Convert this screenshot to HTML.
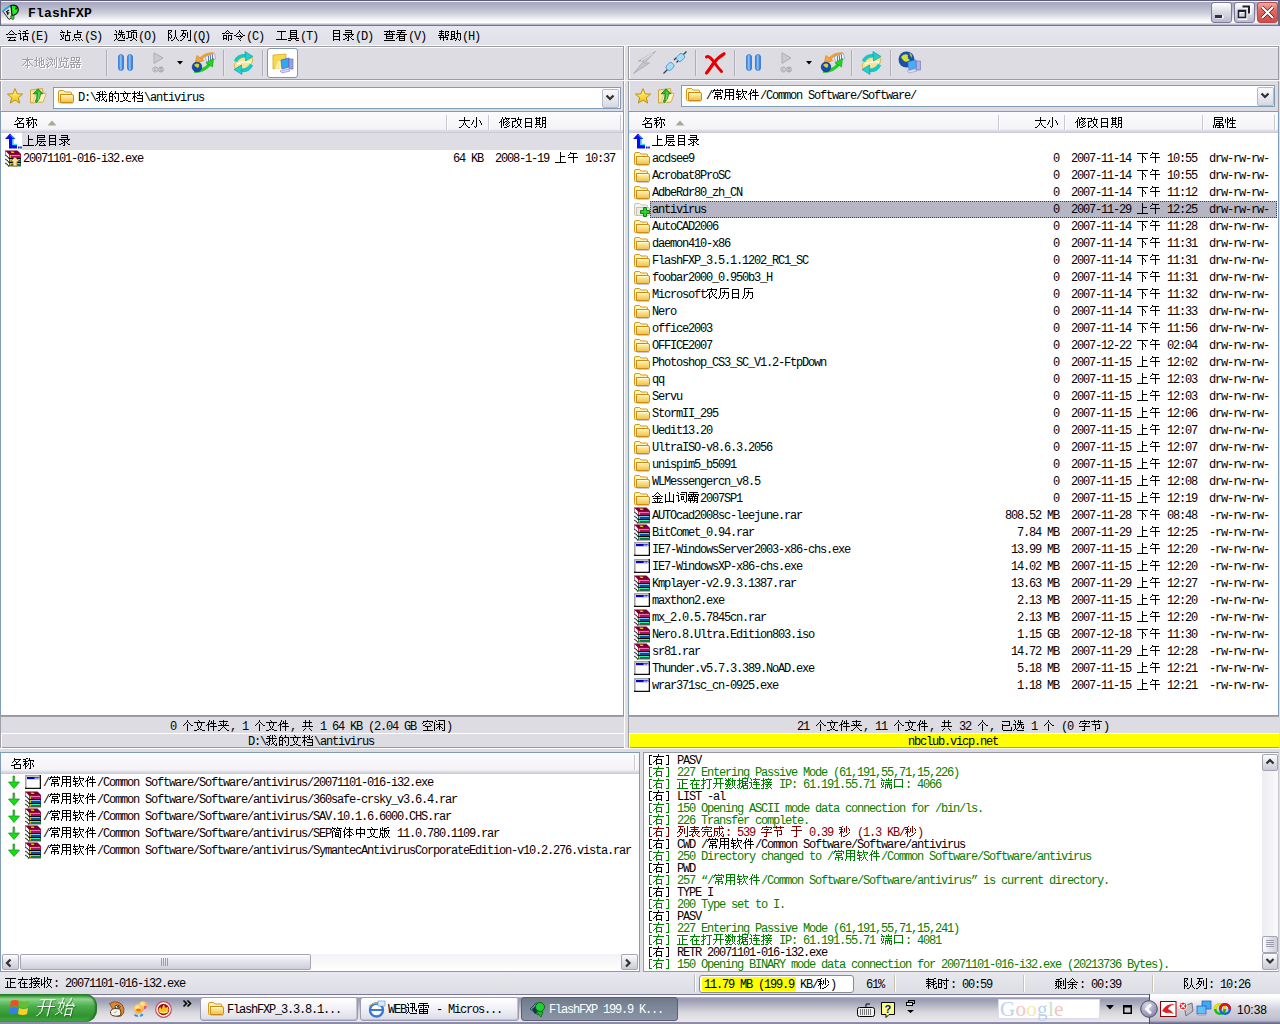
<!DOCTYPE html><html><head><meta charset="utf-8"><title>FlashFXP</title><style>
*{margin:0;padding:0;box-sizing:border-box}
html,body{width:1280px;height:1024px;overflow:hidden}
body{position:relative;background:#e0dfe3;font-family:"Liberation Mono",monospace;font-size:12px;color:#000}
.a{position:absolute}
.t{white-space:pre;font-family:"Liberation Mono",monospace;font-size:12px;line-height:12px;height:12px}
.t b{display:inline-block;width:6px;font-weight:normal;position:relative;vertical-align:top;height:12px}
.t b svg{position:absolute;left:0;top:0;fill:currentColor}
i.c{font-style:normal;display:inline-block;width:12px;height:12px;vertical-align:top;position:relative}
i.c svg{position:absolute;left:0;top:-1px;fill:currentColor}
svg{position:absolute;overflow:visible}
</style></head><body><svg width="0" height="0" style="position:absolute"><defs>
<linearGradient id="gfold" x1="0" y1="0" x2="0" y2="1"><stop offset="0" stop-color="#fff6c0"/><stop offset="1" stop-color="#f0c040"/></linearGradient>
<linearGradient id="gbtn" x1="0" y1="0" x2="0" y2="1"><stop offset="0" stop-color="#ffffff"/><stop offset="1" stop-color="#c9c9d9"/></linearGradient>
<linearGradient id="gstar" x1="0" y1="0" x2="0" y2="1"><stop offset="0" stop-color="#fff8a0"/><stop offset="1" stop-color="#f0c000"/></linearGradient>
<linearGradient id="gpause" x1="0" y1="0" x2="1" y2="0"><stop offset="0" stop-color="#3d7fe0"/><stop offset=".5" stop-color="#9cd0ff"/><stop offset="1" stop-color="#2f6fd8"/></linearGradient>
</defs></svg><svg width="0" height="0" style="position:absolute"><defs><symbol id="k4e0a" viewBox="0 0 12 12"><path d="M5 0h1v1h-1zM5 1h1v1h-1zM5 2h1v1h-1zM5 3h1v1h-1zM5 4h5v1h-5zM5 5h1v1h-1zM5 6h1v1h-1zM5 7h1v1h-1zM5 8h1v1h-1zM5 9h1v1h-1zM0 10h11v1h-11z"/></symbol><symbol id="k4e0b" viewBox="0 0 12 12"><path d="M0 1h11v1h-11zM5 2h1v1h-1zM5 3h1v1h-1zM5 4h2v1h-2zM5 5h1v1h-1zM7 5h1v1h-1zM5 6h1v1h-1zM8 6h1v1h-1zM5 7h1v1h-1zM8 7h1v1h-1zM5 8h1v1h-1zM5 9h1v1h-1zM5 10h1v1h-1z"/></symbol><symbol id="k4e2a" viewBox="0 0 12 12"><path d="M5 0h1v1h-1zM5 1h1v1h-1zM4 2h1v1h-1zM6 2h1v1h-1zM3 3h1v1h-1zM7 3h1v1h-1zM2 4h1v1h-1zM5 4h1v1h-1zM8 4h1v1h-1zM1 5h1v1h-1zM5 5h1v1h-1zM9 5h2v1h-2zM5 6h1v1h-1zM5 7h1v1h-1zM5 8h1v1h-1zM5 9h1v1h-1zM5 10h1v1h-1z"/></symbol><symbol id="k4e2d" viewBox="0 0 12 12"><path d="M5 0h1v1h-1zM5 1h1v1h-1zM1 2h9v1h-9zM1 3h1v1h-1zM5 3h1v1h-1zM9 3h1v1h-1zM1 4h1v1h-1zM5 4h1v1h-1zM9 4h1v1h-1zM1 5h1v1h-1zM5 5h1v1h-1zM9 5h1v1h-1zM1 6h9v1h-9zM1 7h1v1h-1zM5 7h1v1h-1zM9 7h1v1h-1zM5 8h1v1h-1zM5 9h1v1h-1zM5 10h1v1h-1z"/></symbol><symbol id="k4e8e" viewBox="0 0 12 12"><path d="M1 0h9v1h-9zM5 1h1v1h-1zM5 2h1v1h-1zM5 3h1v1h-1zM0 4h11v1h-11zM5 5h1v1h-1zM5 6h1v1h-1zM5 7h1v1h-1zM5 8h1v1h-1zM5 9h1v1h-1zM3 10h3v1h-3z"/></symbol><symbol id="k4ee4" viewBox="0 0 12 12"><path d="M5 0h1v1h-1zM5 1h1v1h-1zM4 2h1v1h-1zM6 2h1v1h-1zM3 3h1v1h-1zM7 3h1v1h-1zM2 4h1v1h-1zM5 4h1v1h-1zM8 4h1v1h-1zM0 5h2v1h-2zM6 5h1v1h-1zM9 5h2v1h-2zM2 6h7v1h-7zM7 7h1v1h-1zM4 8h1v1h-1zM6 8h1v1h-1zM5 9h1v1h-1zM6 10h1v1h-1z"/></symbol><symbol id="k4ef6" viewBox="0 0 12 12"><path d="M3 0h1v1h-1zM7 0h1v1h-1zM3 1h1v1h-1zM5 1h1v1h-1zM7 1h1v1h-1zM2 2h1v1h-1zM5 2h1v1h-1zM7 2h1v1h-1zM2 3h1v1h-1zM4 3h6v1h-6zM1 4h3v1h-3zM7 4h1v1h-1zM0 5h1v1h-1zM2 5h1v1h-1zM7 5h1v1h-1zM2 6h1v1h-1zM4 6h7v1h-7zM2 7h1v1h-1zM7 7h1v1h-1zM2 8h1v1h-1zM7 8h1v1h-1zM2 9h1v1h-1zM7 9h1v1h-1zM2 10h1v1h-1zM7 10h1v1h-1z"/></symbol><symbol id="k4f1a" viewBox="0 0 12 12"><path d="M5 0h1v1h-1zM4 1h1v1h-1zM6 1h1v1h-1zM3 2h1v1h-1zM7 2h1v1h-1zM2 3h1v1h-1zM8 3h1v1h-1zM0 4h2v1h-2zM3 4h5v1h-5zM9 4h2v1h-2zM1 7h9v1h-9zM4 8h1v1h-1zM3 9h1v1h-1zM8 9h1v1h-1zM2 10h8v1h-8z"/></symbol><symbol id="k4f53" viewBox="0 0 12 12"><path d="M2 0h1v1h-1zM6 0h1v1h-1zM2 1h1v1h-1zM6 1h1v1h-1zM1 2h1v1h-1zM3 2h7v1h-7zM1 3h1v1h-1zM6 3h1v1h-1zM0 4h2v1h-2zM5 4h3v1h-3zM1 5h1v1h-1zM4 5h1v1h-1zM6 5h1v1h-1zM8 5h1v1h-1zM1 6h1v1h-1zM3 6h1v1h-1zM6 6h1v1h-1zM9 6h1v1h-1zM1 7h2v1h-2zM6 7h1v1h-1zM10 7h1v1h-1zM1 8h1v1h-1zM4 8h5v1h-5zM1 9h1v1h-1zM6 9h1v1h-1zM1 10h1v1h-1zM6 10h1v1h-1z"/></symbol><symbol id="k4f59" viewBox="0 0 12 12"><path d="M5 0h1v1h-1zM4 1h1v1h-1zM6 1h1v1h-1zM3 2h1v1h-1zM7 2h1v1h-1zM2 3h1v1h-1zM8 3h1v1h-1zM0 4h2v1h-2zM3 4h5v1h-5zM9 4h2v1h-2zM5 5h1v1h-1zM1 6h9v1h-9zM5 7h1v1h-1zM3 8h1v1h-1zM5 8h1v1h-1zM7 8h1v1h-1zM2 9h1v1h-1zM5 9h1v1h-1zM8 9h1v1h-1zM1 10h1v1h-1zM4 10h2v1h-2zM9 10h1v1h-1z"/></symbol><symbol id="k4fee" viewBox="0 0 12 12"><path d="M3 0h1v1h-1zM6 0h1v1h-1zM3 1h1v1h-1zM6 1h5v1h-5zM2 2h1v1h-1zM4 2h2v1h-2zM7 2h1v1h-1zM9 2h1v1h-1zM2 3h1v1h-1zM4 3h1v1h-1zM8 3h1v1h-1zM1 4h2v1h-2zM4 4h1v1h-1zM6 4h2v1h-2zM9 4h1v1h-1zM0 5h1v1h-1zM2 5h1v1h-1zM4 5h2v1h-2zM8 5h1v1h-1zM10 5h1v1h-1zM2 6h1v1h-1zM4 6h1v1h-1zM7 6h1v1h-1zM9 6h1v1h-1zM2 7h1v1h-1zM4 7h1v1h-1zM6 7h1v1h-1zM8 7h1v1h-1zM2 8h1v1h-1zM4 8h1v1h-1zM7 8h1v1h-1zM10 8h1v1h-1zM2 9h1v1h-1zM8 9h2v1h-2zM2 10h1v1h-1zM5 10h3v1h-3z"/></symbol><symbol id="k5171" viewBox="0 0 12 12"><path d="M3 0h1v1h-1zM7 0h1v1h-1zM3 1h1v1h-1zM7 1h1v1h-1zM1 2h9v1h-9zM3 3h1v1h-1zM7 3h1v1h-1zM3 4h1v1h-1zM7 4h1v1h-1zM3 5h1v1h-1zM7 5h1v1h-1zM0 6h11v1h-11zM3 8h1v1h-1zM7 8h1v1h-1zM2 9h1v1h-1zM8 9h1v1h-1zM1 10h1v1h-1zM9 10h1v1h-1z"/></symbol><symbol id="k5177" viewBox="0 0 12 12"><path d="M2 0h7v1h-7zM2 1h1v1h-1zM8 1h1v1h-1zM2 2h7v1h-7zM2 3h1v1h-1zM8 3h1v1h-1zM2 4h7v1h-7zM2 5h1v1h-1zM8 5h1v1h-1zM2 6h7v1h-7zM2 7h1v1h-1zM8 7h1v1h-1zM0 8h11v1h-11zM3 9h1v1h-1zM7 9h1v1h-1zM0 10h3v1h-3zM8 10h3v1h-3z"/></symbol><symbol id="k519c" viewBox="0 0 12 12"><path d="M5 0h1v1h-1zM1 1h10v1h-10zM1 2h1v1h-1zM5 2h1v1h-1zM10 2h1v1h-1zM0 3h1v1h-1zM4 3h2v1h-2zM9 3h1v1h-1zM3 4h1v1h-1zM6 4h1v1h-1zM3 5h1v1h-1zM6 5h1v1h-1zM9 5h1v1h-1zM2 6h2v1h-2zM6 6h1v1h-1zM8 6h1v1h-1zM1 7h1v1h-1zM3 7h1v1h-1zM7 7h1v1h-1zM0 8h1v1h-1zM3 8h1v1h-1zM5 8h1v1h-1zM8 8h1v1h-1zM3 9h2v1h-2zM9 9h2v1h-2zM3 10h1v1h-1zM10 10h1v1h-1z"/></symbol><symbol id="k5217" viewBox="0 0 12 12"><path d="M1 0h6v1h-6zM10 0h1v1h-1zM3 1h1v1h-1zM10 1h1v1h-1zM3 2h1v1h-1zM7 2h1v1h-1zM10 2h1v1h-1zM2 3h4v1h-4zM7 3h1v1h-1zM10 3h1v1h-1zM2 4h1v1h-1zM5 4h1v1h-1zM7 4h1v1h-1zM10 4h1v1h-1zM1 5h2v1h-2zM5 5h1v1h-1zM7 5h1v1h-1zM10 5h1v1h-1zM0 6h1v1h-1zM3 6h2v1h-2zM7 6h1v1h-1zM10 6h1v1h-1zM4 7h1v1h-1zM7 7h1v1h-1zM10 7h1v1h-1zM3 8h1v1h-1zM10 8h1v1h-1zM2 9h1v1h-1zM10 9h1v1h-1zM0 10h2v1h-2zM8 10h3v1h-3z"/></symbol><symbol id="k5269" viewBox="0 0 12 12"><path d="M5 0h2v1h-2zM10 0h1v1h-1zM1 1h4v1h-4zM10 1h1v1h-1zM3 2h1v1h-1zM8 2h1v1h-1zM10 2h1v1h-1zM0 3h7v1h-7zM8 3h1v1h-1zM10 3h1v1h-1zM1 4h1v1h-1zM3 4h1v1h-1zM5 4h1v1h-1zM8 4h1v1h-1zM10 4h1v1h-1zM0 5h2v1h-2zM3 5h1v1h-1zM5 5h2v1h-2zM8 5h1v1h-1zM10 5h1v1h-1zM1 6h1v1h-1zM3 6h1v1h-1zM5 6h1v1h-1zM8 6h1v1h-1zM10 6h1v1h-1zM0 7h2v1h-2zM3 7h1v1h-1zM5 7h2v1h-2zM8 7h1v1h-1zM10 7h1v1h-1zM2 8h3v1h-3zM10 8h1v1h-1zM1 9h1v1h-1zM3 9h1v1h-1zM5 9h1v1h-1zM10 9h1v1h-1zM0 10h1v1h-1zM3 10h1v1h-1zM6 10h1v1h-1zM8 10h3v1h-3z"/></symbol><symbol id="k52a9" viewBox="0 0 12 12"><path d="M7 0h1v1h-1zM1 1h4v1h-4zM7 1h1v1h-1zM1 2h1v1h-1zM4 2h1v1h-1zM7 2h1v1h-1zM1 3h1v1h-1zM4 3h1v1h-1zM6 3h5v1h-5zM1 4h4v1h-4zM7 4h1v1h-1zM10 4h1v1h-1zM1 5h1v1h-1zM4 5h1v1h-1zM7 5h1v1h-1zM10 5h1v1h-1zM1 6h4v1h-4zM7 6h1v1h-1zM10 6h1v1h-1zM1 7h1v1h-1zM4 7h1v1h-1zM7 7h1v1h-1zM10 7h1v1h-1zM1 8h1v1h-1zM3 8h4v1h-4zM10 8h1v1h-1zM0 9h3v1h-3zM6 9h1v1h-1zM8 9h1v1h-1zM10 9h1v1h-1zM5 10h1v1h-1zM9 10h1v1h-1z"/></symbol><symbol id="k5348" viewBox="0 0 12 12"><path d="M3 0h1v1h-1zM3 1h7v1h-7zM2 2h1v1h-1zM6 2h1v1h-1zM1 3h1v1h-1zM6 3h1v1h-1zM6 4h1v1h-1zM1 5h10v1h-10zM6 6h1v1h-1zM6 7h1v1h-1zM6 8h1v1h-1zM6 9h1v1h-1zM6 10h1v1h-1z"/></symbol><symbol id="k5386" viewBox="0 0 12 12"><path d="M2 0h9v1h-9zM2 1h1v1h-1zM2 2h1v1h-1zM6 2h1v1h-1zM2 3h1v1h-1zM6 3h1v1h-1zM2 4h1v1h-1zM4 4h7v1h-7zM2 5h1v1h-1zM6 5h1v1h-1zM10 5h1v1h-1zM2 6h1v1h-1zM6 6h1v1h-1zM10 6h1v1h-1zM2 7h1v1h-1zM5 7h1v1h-1zM10 7h1v1h-1zM1 8h1v1h-1zM5 8h1v1h-1zM10 8h1v1h-1zM1 9h1v1h-1zM4 9h1v1h-1zM10 9h1v1h-1zM0 10h1v1h-1zM3 10h1v1h-1zM8 10h2v1h-2z"/></symbol><symbol id="k53e3" viewBox="0 0 12 12"><path d="M1 1h9v1h-9zM1 2h1v1h-1zM9 2h1v1h-1zM1 3h1v1h-1zM9 3h1v1h-1zM1 4h1v1h-1zM9 4h1v1h-1zM1 5h1v1h-1zM9 5h1v1h-1zM1 6h1v1h-1zM9 6h1v1h-1zM1 7h1v1h-1zM9 7h1v1h-1zM1 8h9v1h-9zM1 9h1v1h-1zM9 9h1v1h-1z"/></symbol><symbol id="k53f3" viewBox="0 0 12 12"><path d="M5 0h1v1h-1zM5 1h1v1h-1zM0 2h11v1h-11zM4 3h1v1h-1zM3 4h1v1h-1zM3 5h6v1h-6zM2 6h2v1h-2zM8 6h1v1h-1zM1 7h1v1h-1zM3 7h1v1h-1zM8 7h1v1h-1zM0 8h1v1h-1zM3 8h1v1h-1zM8 8h1v1h-1zM3 9h6v1h-6zM3 10h1v1h-1zM8 10h1v1h-1z"/></symbol><symbol id="k540d" viewBox="0 0 12 12"><path d="M3 0h1v1h-1zM3 1h7v1h-7zM3 2h1v1h-1zM8 2h1v1h-1zM2 3h1v1h-1zM4 3h1v1h-1zM7 3h1v1h-1zM1 4h1v1h-1zM5 4h2v1h-2zM5 5h1v1h-1zM3 6h7v1h-7zM0 7h4v1h-4zM9 7h1v1h-1zM3 8h1v1h-1zM9 8h1v1h-1zM3 9h1v1h-1zM9 9h1v1h-1zM3 10h7v1h-7z"/></symbol><symbol id="k547d" viewBox="0 0 12 12"><path d="M5 0h1v1h-1zM4 1h1v1h-1zM6 1h1v1h-1zM3 2h1v1h-1zM7 2h1v1h-1zM0 3h3v1h-3zM4 3h3v1h-3zM8 3h3v1h-3zM1 5h4v1h-4zM6 5h4v1h-4zM1 6h1v1h-1zM4 6h1v1h-1zM6 6h1v1h-1zM9 6h1v1h-1zM1 7h1v1h-1zM4 7h1v1h-1zM6 7h1v1h-1zM9 7h1v1h-1zM1 8h4v1h-4zM6 8h1v1h-1zM9 8h1v1h-1zM1 9h1v1h-1zM4 9h1v1h-1zM6 9h1v1h-1zM8 9h2v1h-2zM6 10h1v1h-1z"/></symbol><symbol id="k5668" viewBox="0 0 12 12"><path d="M1 0h4v1h-4zM6 0h4v1h-4zM1 1h1v1h-1zM4 1h1v1h-1zM6 1h1v1h-1zM9 1h1v1h-1zM1 2h1v1h-1zM4 2h1v1h-1zM6 2h1v1h-1zM9 2h1v1h-1zM1 3h4v1h-4zM6 3h4v1h-4zM5 4h1v1h-1zM8 4h1v1h-1zM0 5h11v1h-11zM3 6h1v1h-1zM7 6h1v1h-1zM0 7h5v1h-5zM6 7h5v1h-5zM1 8h1v1h-1zM4 8h1v1h-1zM6 8h1v1h-1zM9 8h1v1h-1zM1 9h1v1h-1zM4 9h1v1h-1zM6 9h1v1h-1zM9 9h1v1h-1zM1 10h4v1h-4zM6 10h4v1h-4z"/></symbol><symbol id="k5728" viewBox="0 0 12 12"><path d="M5 0h1v1h-1zM5 1h1v1h-1zM1 2h10v1h-10zM4 3h1v1h-1zM3 4h1v1h-1zM7 4h1v1h-1zM2 5h2v1h-2zM7 5h1v1h-1zM1 6h1v1h-1zM3 6h1v1h-1zM5 6h5v1h-5zM3 7h1v1h-1zM7 7h1v1h-1zM3 8h1v1h-1zM7 8h1v1h-1zM3 9h1v1h-1zM7 9h1v1h-1zM3 10h8v1h-8z"/></symbol><symbol id="k5730" viewBox="0 0 12 12"><path d="M2 0h1v1h-1zM7 0h1v1h-1zM2 1h1v1h-1zM5 1h1v1h-1zM7 1h1v1h-1zM2 2h1v1h-1zM5 2h1v1h-1zM7 2h1v1h-1zM9 2h1v1h-1zM0 3h4v1h-4zM5 3h1v1h-1zM7 3h3v1h-3zM2 4h1v1h-1zM5 4h3v1h-3zM9 4h1v1h-1zM2 5h1v1h-1zM4 5h2v1h-2zM7 5h1v1h-1zM9 5h1v1h-1zM2 6h1v1h-1zM5 6h1v1h-1zM7 6h1v1h-1zM9 6h1v1h-1zM2 7h1v1h-1zM5 7h1v1h-1zM7 7h3v1h-3zM2 8h2v1h-2zM5 8h1v1h-1zM7 8h1v1h-1zM10 8h1v1h-1zM0 9h2v1h-2zM5 9h1v1h-1zM10 9h1v1h-1zM6 10h5v1h-5z"/></symbol><symbol id="k5927" viewBox="0 0 12 12"><path d="M5 0h1v1h-1zM5 1h1v1h-1zM5 2h1v1h-1zM0 3h11v1h-11zM5 4h1v1h-1zM5 5h1v1h-1zM4 6h1v1h-1zM6 6h1v1h-1zM4 7h1v1h-1zM6 7h1v1h-1zM3 8h1v1h-1zM7 8h1v1h-1zM2 9h1v1h-1zM8 9h1v1h-1zM0 10h2v1h-2zM9 10h2v1h-2z"/></symbol><symbol id="k5939" viewBox="0 0 12 12"><path d="M5 0h1v1h-1zM1 1h9v1h-9zM5 2h1v1h-1zM2 3h1v1h-1zM5 3h1v1h-1zM8 3h1v1h-1zM3 4h1v1h-1zM5 4h1v1h-1zM7 4h1v1h-1zM0 5h11v1h-11zM5 6h1v1h-1zM4 7h1v1h-1zM6 7h1v1h-1zM3 8h1v1h-1zM7 8h1v1h-1zM2 9h1v1h-1zM8 9h1v1h-1zM0 10h2v1h-2zM9 10h2v1h-2z"/></symbol><symbol id="k5b57" viewBox="0 0 12 12"><path d="M5 0h1v1h-1zM1 1h10v1h-10zM1 2h1v1h-1zM10 2h1v1h-1zM0 3h1v1h-1zM3 3h5v1h-5zM9 3h1v1h-1zM6 4h1v1h-1zM5 5h1v1h-1zM0 6h11v1h-11zM5 7h1v1h-1zM5 8h1v1h-1zM5 9h1v1h-1zM3 10h3v1h-3z"/></symbol><symbol id="k5b8c" viewBox="0 0 12 12"><path d="M5 0h1v1h-1zM1 1h10v1h-10zM1 2h1v1h-1zM10 2h1v1h-1zM0 3h1v1h-1zM3 3h5v1h-5zM9 3h1v1h-1zM1 5h10v1h-10zM4 6h1v1h-1zM6 6h1v1h-1zM3 7h1v1h-1zM6 7h1v1h-1zM3 8h1v1h-1zM6 8h1v1h-1zM10 8h1v1h-1zM2 9h1v1h-1zM6 9h1v1h-1zM10 9h1v1h-1zM1 10h1v1h-1zM7 10h4v1h-4z"/></symbol><symbol id="k5c0f" viewBox="0 0 12 12"><path d="M5 0h1v1h-1zM5 1h1v1h-1zM5 2h1v1h-1zM2 3h1v1h-1zM5 3h1v1h-1zM8 3h1v1h-1zM2 4h1v1h-1zM5 4h1v1h-1zM9 4h1v1h-1zM1 5h1v1h-1zM5 5h1v1h-1zM9 5h1v1h-1zM1 6h1v1h-1zM5 6h1v1h-1zM10 6h1v1h-1zM0 7h1v1h-1zM5 7h1v1h-1zM10 7h1v1h-1zM5 8h1v1h-1zM3 9h1v1h-1zM5 9h1v1h-1zM4 10h1v1h-1z"/></symbol><symbol id="k5c42" viewBox="0 0 12 12"><path d="M2 0h8v1h-8zM2 1h1v1h-1zM9 1h1v1h-1zM2 2h8v1h-8zM2 3h1v1h-1zM2 4h1v1h-1zM4 4h6v1h-6zM2 5h1v1h-1zM2 6h9v1h-9zM2 7h1v1h-1zM6 7h1v1h-1zM2 8h1v1h-1zM5 8h1v1h-1zM8 8h1v1h-1zM1 9h1v1h-1zM4 9h1v1h-1zM9 9h1v1h-1zM0 10h1v1h-1zM4 10h7v1h-7z"/></symbol><symbol id="k5c5e" viewBox="0 0 12 12"><path d="M1 0h9v1h-9zM1 1h1v1h-1zM9 1h1v1h-1zM1 2h9v1h-9zM1 3h1v1h-1zM9 3h1v1h-1zM1 4h1v1h-1zM3 4h6v1h-6zM1 5h1v1h-1zM6 5h1v1h-1zM1 6h1v1h-1zM3 6h7v1h-7zM1 7h1v1h-1zM3 7h1v1h-1zM6 7h1v1h-1zM9 7h1v1h-1zM0 8h1v1h-1zM2 8h9v1h-9zM0 9h1v1h-1zM2 9h1v1h-1zM6 9h1v1h-1zM10 9h1v1h-1zM0 10h1v1h-1zM2 10h1v1h-1zM4 10h4v1h-4zM9 10h2v1h-2z"/></symbol><symbol id="k5c71" viewBox="0 0 12 12"><path d="M5 0h1v1h-1zM5 1h1v1h-1zM1 2h1v1h-1zM5 2h1v1h-1zM9 2h1v1h-1zM1 3h1v1h-1zM5 3h1v1h-1zM9 3h1v1h-1zM1 4h1v1h-1zM5 4h1v1h-1zM9 4h1v1h-1zM1 5h1v1h-1zM5 5h1v1h-1zM9 5h1v1h-1zM1 6h1v1h-1zM5 6h1v1h-1zM9 6h1v1h-1zM1 7h1v1h-1zM5 7h1v1h-1zM9 7h1v1h-1zM1 8h1v1h-1zM5 8h1v1h-1zM9 8h1v1h-1zM1 9h9v1h-9zM1 10h1v1h-1zM9 10h1v1h-1z"/></symbol><symbol id="k5de5" viewBox="0 0 12 12"><path d="M1 1h9v1h-9zM5 2h1v1h-1zM5 3h1v1h-1zM5 4h1v1h-1zM5 5h1v1h-1zM5 6h1v1h-1zM5 7h1v1h-1zM5 8h1v1h-1zM0 9h11v1h-11z"/></symbol><symbol id="k5df2" viewBox="0 0 12 12"><path d="M1 1h8v1h-8zM8 2h1v1h-1zM8 3h1v1h-1zM1 4h1v1h-1zM8 4h1v1h-1zM1 5h8v1h-8zM1 6h1v1h-1zM1 7h1v1h-1zM10 7h1v1h-1zM1 8h1v1h-1zM10 8h1v1h-1zM1 9h1v1h-1zM10 9h1v1h-1zM2 10h9v1h-9z"/></symbol><symbol id="k5e2e" viewBox="0 0 12 12"><path d="M3 0h1v1h-1zM1 1h5v1h-5zM7 1h4v1h-4zM3 2h1v1h-1zM7 2h1v1h-1zM10 2h1v1h-1zM1 3h5v1h-5zM7 3h1v1h-1zM9 3h1v1h-1zM3 4h1v1h-1zM7 4h1v1h-1zM10 4h1v1h-1zM0 5h6v1h-6zM7 5h4v1h-4zM2 6h1v1h-1zM5 6h1v1h-1zM7 6h1v1h-1zM1 7h9v1h-9zM2 8h1v1h-1zM5 8h1v1h-1zM9 8h1v1h-1zM2 9h1v1h-1zM5 9h1v1h-1zM8 9h2v1h-2zM5 10h1v1h-1z"/></symbol><symbol id="k5e38" viewBox="0 0 12 12"><path d="M2 0h1v1h-1zM5 0h1v1h-1zM8 0h1v1h-1zM1 1h10v1h-10zM1 2h1v1h-1zM10 2h1v1h-1zM0 3h1v1h-1zM3 3h6v1h-6zM10 3h1v1h-1zM3 4h1v1h-1zM8 4h1v1h-1zM3 5h6v1h-6zM5 6h1v1h-1zM2 7h8v1h-8zM2 8h1v1h-1zM5 8h1v1h-1zM9 8h1v1h-1zM2 9h1v1h-1zM5 9h1v1h-1zM8 9h2v1h-2zM5 10h1v1h-1z"/></symbol><symbol id="k5f00" viewBox="0 0 12 12"><path d="M1 0h9v1h-9zM3 1h1v1h-1zM7 1h1v1h-1zM3 2h1v1h-1zM7 2h1v1h-1zM3 3h1v1h-1zM7 3h1v1h-1zM3 4h1v1h-1zM7 4h1v1h-1zM0 5h11v1h-11zM3 6h1v1h-1zM7 6h1v1h-1zM2 7h1v1h-1zM7 7h1v1h-1zM2 8h1v1h-1zM7 8h1v1h-1zM1 9h1v1h-1zM7 9h1v1h-1zM0 10h1v1h-1zM7 10h1v1h-1z"/></symbol><symbol id="k5f55" viewBox="0 0 12 12"><path d="M2 0h7v1h-7zM8 1h1v1h-1zM2 2h7v1h-7zM8 3h1v1h-1zM0 4h11v1h-11zM2 5h1v1h-1zM5 5h1v1h-1zM9 5h1v1h-1zM3 6h1v1h-1zM5 6h2v1h-2zM8 6h1v1h-1zM4 7h2v1h-2zM7 7h1v1h-1zM2 8h2v1h-2zM5 8h1v1h-1zM8 8h1v1h-1zM0 9h2v1h-2zM5 9h1v1h-1zM9 9h2v1h-2zM4 10h2v1h-2z"/></symbol><symbol id="k6027" viewBox="0 0 12 12"><path d="M2 0h1v1h-1zM7 0h1v1h-1zM2 1h1v1h-1zM5 1h1v1h-1zM7 1h1v1h-1zM0 2h1v1h-1zM2 2h2v1h-2zM5 2h1v1h-1zM7 2h1v1h-1zM0 3h1v1h-1zM2 3h1v1h-1zM4 3h7v1h-7zM0 4h1v1h-1zM2 4h1v1h-1zM4 4h1v1h-1zM7 4h1v1h-1zM0 5h1v1h-1zM2 5h2v1h-2zM7 5h1v1h-1zM2 6h1v1h-1zM5 6h5v1h-5zM2 7h1v1h-1zM7 7h1v1h-1zM2 8h1v1h-1zM7 8h1v1h-1zM2 9h1v1h-1zM7 9h1v1h-1zM2 10h1v1h-1zM4 10h7v1h-7z"/></symbol><symbol id="k6210" viewBox="0 0 12 12"><path d="M6 0h1v1h-1zM8 0h1v1h-1zM6 1h1v1h-1zM9 1h1v1h-1zM1 2h10v1h-10zM1 3h1v1h-1zM6 3h1v1h-1zM1 4h1v1h-1zM6 4h1v1h-1zM1 5h4v1h-4zM6 5h1v1h-1zM9 5h1v1h-1zM1 6h1v1h-1zM4 6h1v1h-1zM6 6h1v1h-1zM9 6h1v1h-1zM1 7h1v1h-1zM4 7h1v1h-1zM6 7h1v1h-1zM8 7h1v1h-1zM1 8h1v1h-1zM4 8h1v1h-1zM7 8h1v1h-1zM10 8h1v1h-1zM1 9h1v1h-1zM3 9h1v1h-1zM6 9h1v1h-1zM8 9h1v1h-1zM10 9h1v1h-1zM0 10h1v1h-1zM5 10h1v1h-1zM9 10h2v1h-2z"/></symbol><symbol id="k6211" viewBox="0 0 12 12"><path d="M4 0h1v1h-1zM6 0h1v1h-1zM8 0h1v1h-1zM1 1h3v1h-3zM6 1h1v1h-1zM9 1h1v1h-1zM3 2h1v1h-1zM6 2h1v1h-1zM0 3h11v1h-11zM3 4h1v1h-1zM6 4h1v1h-1zM3 5h2v1h-2zM6 5h1v1h-1zM9 5h1v1h-1zM2 6h2v1h-2zM6 6h1v1h-1zM8 6h1v1h-1zM0 7h2v1h-2zM3 7h1v1h-1zM7 7h1v1h-1zM3 8h1v1h-1zM6 8h2v1h-2zM10 8h1v1h-1zM1 9h1v1h-1zM3 9h1v1h-1zM5 9h1v1h-1zM8 9h1v1h-1zM10 9h1v1h-1zM2 10h1v1h-1zM9 10h2v1h-2z"/></symbol><symbol id="k6253" viewBox="0 0 12 12"><path d="M2 0h1v1h-1zM2 1h1v1h-1zM5 1h6v1h-6zM0 2h5v1h-5zM8 2h1v1h-1zM2 3h1v1h-1zM8 3h1v1h-1zM2 4h1v1h-1zM4 4h1v1h-1zM8 4h1v1h-1zM2 5h2v1h-2zM8 5h1v1h-1zM1 6h2v1h-2zM8 6h1v1h-1zM0 7h1v1h-1zM2 7h1v1h-1zM8 7h1v1h-1zM2 8h1v1h-1zM8 8h1v1h-1zM2 9h1v1h-1zM8 9h1v1h-1zM0 10h3v1h-3zM6 10h3v1h-3z"/></symbol><symbol id="k636e" viewBox="0 0 12 12"><path d="M2 0h1v1h-1zM5 0h6v1h-6zM2 1h1v1h-1zM5 1h1v1h-1zM10 1h1v1h-1zM0 2h6v1h-6zM10 2h1v1h-1zM2 3h1v1h-1zM5 3h6v1h-6zM2 4h1v1h-1zM4 4h2v1h-2zM8 4h1v1h-1zM2 5h2v1h-2zM5 5h6v1h-6zM1 6h2v1h-2zM5 6h1v1h-1zM8 6h1v1h-1zM0 7h1v1h-1zM2 7h1v1h-1zM5 7h6v1h-6zM2 8h1v1h-1zM4 8h3v1h-3zM10 8h1v1h-1zM0 9h1v1h-1zM2 9h1v1h-1zM4 9h1v1h-1zM6 9h1v1h-1zM10 9h1v1h-1zM1 10h1v1h-1zM3 10h1v1h-1zM6 10h5v1h-5z"/></symbol><symbol id="k63a5" viewBox="0 0 12 12"><path d="M2 0h1v1h-1zM7 0h1v1h-1zM2 1h1v1h-1zM4 1h7v1h-7zM0 2h4v1h-4zM5 2h1v1h-1zM9 2h1v1h-1zM2 3h1v1h-1zM6 3h1v1h-1zM8 3h1v1h-1zM2 4h1v1h-1zM4 4h7v1h-7zM2 5h2v1h-2zM7 5h1v1h-1zM1 6h2v1h-2zM4 6h7v1h-7zM0 7h1v1h-1zM2 7h1v1h-1zM6 7h1v1h-1zM9 7h1v1h-1zM2 8h1v1h-1zM5 8h2v1h-2zM8 8h1v1h-1zM2 9h1v1h-1zM7 9h1v1h-1zM9 9h1v1h-1zM0 10h3v1h-3zM4 10h3v1h-3zM10 10h1v1h-1z"/></symbol><symbol id="k6536" viewBox="0 0 12 12"><path d="M3 0h1v1h-1zM6 0h1v1h-1zM3 1h1v1h-1zM6 1h1v1h-1zM0 2h1v1h-1zM3 2h1v1h-1zM6 2h5v1h-5zM0 3h1v1h-1zM3 3h1v1h-1zM5 3h1v1h-1zM9 3h1v1h-1zM0 4h1v1h-1zM3 4h2v1h-2zM6 4h1v1h-1zM9 4h1v1h-1zM0 5h1v1h-1zM3 5h1v1h-1zM6 5h1v1h-1zM9 5h1v1h-1zM0 6h1v1h-1zM2 6h2v1h-2zM6 6h1v1h-1zM8 6h1v1h-1zM0 7h2v1h-2zM3 7h1v1h-1zM7 7h1v1h-1zM0 8h1v1h-1zM3 8h1v1h-1zM7 8h2v1h-2zM3 9h1v1h-1zM6 9h1v1h-1zM9 9h1v1h-1zM3 10h1v1h-1zM5 10h1v1h-1zM10 10h1v1h-1z"/></symbol><symbol id="k6539" viewBox="0 0 12 12"><path d="M7 0h1v1h-1zM0 1h5v1h-5zM7 1h1v1h-1zM4 2h1v1h-1zM6 2h5v1h-5zM4 3h2v1h-2zM9 3h1v1h-1zM1 4h4v1h-4zM6 4h1v1h-1zM9 4h1v1h-1zM1 5h1v1h-1zM6 5h1v1h-1zM9 5h1v1h-1zM1 6h1v1h-1zM6 6h1v1h-1zM9 6h1v1h-1zM1 7h1v1h-1zM7 7h2v1h-2zM1 8h1v1h-1zM3 8h1v1h-1zM7 8h2v1h-2zM1 9h2v1h-2zM6 9h1v1h-1zM9 9h1v1h-1zM1 10h1v1h-1zM4 10h2v1h-2zM10 10h1v1h-1z"/></symbol><symbol id="k6570" viewBox="0 0 12 12"><path d="M0 0h1v1h-1zM3 0h1v1h-1zM5 0h1v1h-1zM7 0h1v1h-1zM1 1h1v1h-1zM3 1h2v1h-2zM7 1h1v1h-1zM0 2h6v1h-6zM7 2h4v1h-4zM2 3h2v1h-2zM6 3h2v1h-2zM9 3h1v1h-1zM1 4h1v1h-1zM3 4h2v1h-2zM7 4h1v1h-1zM9 4h1v1h-1zM0 5h1v1h-1zM3 5h1v1h-1zM5 5h1v1h-1zM7 5h1v1h-1zM9 5h1v1h-1zM0 6h6v1h-6zM7 6h1v1h-1zM9 6h1v1h-1zM2 7h1v1h-1zM4 7h1v1h-1zM7 7h1v1h-1zM9 7h1v1h-1zM1 8h2v1h-2zM4 8h1v1h-1zM8 8h1v1h-1zM3 9h1v1h-1zM7 9h1v1h-1zM9 9h1v1h-1zM0 10h3v1h-3zM4 10h3v1h-3zM10 10h1v1h-1z"/></symbol><symbol id="k6587" viewBox="0 0 12 12"><path d="M4 0h1v1h-1zM5 1h1v1h-1zM0 2h11v1h-11zM3 3h1v1h-1zM7 3h1v1h-1zM3 4h1v1h-1zM7 4h1v1h-1zM3 5h1v1h-1zM7 5h1v1h-1zM4 6h1v1h-1zM6 6h1v1h-1zM4 7h1v1h-1zM6 7h1v1h-1zM5 8h1v1h-1zM3 9h2v1h-2zM6 9h2v1h-2zM0 10h3v1h-3zM8 10h3v1h-3z"/></symbol><symbol id="k65e5" viewBox="0 0 12 12"><path d="M2 1h7v1h-7zM2 2h1v1h-1zM8 2h1v1h-1zM2 3h1v1h-1zM8 3h1v1h-1zM2 4h1v1h-1zM8 4h1v1h-1zM2 5h7v1h-7zM2 6h1v1h-1zM8 6h1v1h-1zM2 7h1v1h-1zM8 7h1v1h-1zM2 8h1v1h-1zM8 8h1v1h-1zM2 9h7v1h-7zM2 10h1v1h-1zM8 10h1v1h-1z"/></symbol><symbol id="k65f6" viewBox="0 0 12 12"><path d="M8 0h1v1h-1zM0 1h4v1h-4zM8 1h1v1h-1zM0 2h1v1h-1zM3 2h8v1h-8zM0 3h1v1h-1zM3 3h1v1h-1zM8 3h1v1h-1zM0 4h1v1h-1zM3 4h1v1h-1zM5 4h1v1h-1zM8 4h1v1h-1zM0 5h4v1h-4zM6 5h1v1h-1zM8 5h1v1h-1zM0 6h1v1h-1zM3 6h1v1h-1zM6 6h1v1h-1zM8 6h1v1h-1zM0 7h1v1h-1zM3 7h1v1h-1zM8 7h1v1h-1zM0 8h1v1h-1zM3 8h1v1h-1zM8 8h1v1h-1zM0 9h4v1h-4zM8 9h1v1h-1zM6 10h3v1h-3z"/></symbol><symbol id="k671f" viewBox="0 0 12 12"><path d="M1 0h1v1h-1zM4 0h1v1h-1zM7 0h4v1h-4zM0 1h6v1h-6zM7 1h1v1h-1zM10 1h1v1h-1zM1 2h1v1h-1zM4 2h1v1h-1zM7 2h1v1h-1zM10 2h1v1h-1zM1 3h4v1h-4zM7 3h4v1h-4zM1 4h1v1h-1zM4 4h1v1h-1zM7 4h1v1h-1zM10 4h1v1h-1zM1 5h4v1h-4zM7 5h1v1h-1zM10 5h1v1h-1zM1 6h1v1h-1zM4 6h1v1h-1zM7 6h4v1h-4zM0 7h6v1h-6zM7 7h1v1h-1zM10 7h1v1h-1zM7 8h1v1h-1zM10 8h1v1h-1zM1 9h1v1h-1zM4 9h1v1h-1zM7 9h1v1h-1zM10 9h1v1h-1zM0 10h1v1h-1zM5 10h2v1h-2zM9 10h2v1h-2z"/></symbol><symbol id="k672c" viewBox="0 0 12 12"><path d="M5 0h1v1h-1zM5 1h1v1h-1zM0 2h11v1h-11zM4 3h3v1h-3zM3 4h1v1h-1zM5 4h1v1h-1zM7 4h1v1h-1zM3 5h1v1h-1zM5 5h1v1h-1zM7 5h1v1h-1zM2 6h1v1h-1zM5 6h1v1h-1zM8 6h1v1h-1zM1 7h1v1h-1zM5 7h1v1h-1zM9 7h1v1h-1zM0 8h1v1h-1zM3 8h5v1h-5zM10 8h1v1h-1zM5 9h1v1h-1zM5 10h1v1h-1z"/></symbol><symbol id="k67e5" viewBox="0 0 12 12"><path d="M5 0h1v1h-1zM0 1h11v1h-11zM3 2h1v1h-1zM5 2h1v1h-1zM7 2h1v1h-1zM2 3h1v1h-1zM5 3h1v1h-1zM8 3h1v1h-1zM0 4h11v1h-11zM2 5h1v1h-1zM8 5h1v1h-1zM2 6h7v1h-7zM2 7h1v1h-1zM8 7h1v1h-1zM2 8h7v1h-7zM0 10h11v1h-11z"/></symbol><symbol id="k6863" viewBox="0 0 12 12"><path d="M2 0h1v1h-1zM7 0h1v1h-1zM2 1h1v1h-1zM5 1h1v1h-1zM7 1h1v1h-1zM10 1h1v1h-1zM0 2h5v1h-5zM6 2h2v1h-2zM9 2h1v1h-1zM2 3h1v1h-1zM7 3h1v1h-1zM2 4h1v1h-1zM5 4h6v1h-6zM1 5h3v1h-3zM10 5h1v1h-1zM1 6h2v1h-2zM4 6h1v1h-1zM10 6h1v1h-1zM0 7h1v1h-1zM2 7h1v1h-1zM5 7h6v1h-6zM2 8h1v1h-1zM10 8h1v1h-1zM2 9h1v1h-1zM10 9h1v1h-1zM2 10h1v1h-1zM5 10h6v1h-6z"/></symbol><symbol id="k6b63" viewBox="0 0 12 12"><path d="M0 1h11v1h-11zM5 2h1v1h-1zM5 3h1v1h-1zM2 4h1v1h-1zM5 4h1v1h-1zM2 5h1v1h-1zM5 5h5v1h-5zM2 6h1v1h-1zM5 6h1v1h-1zM2 7h1v1h-1zM5 7h1v1h-1zM2 8h1v1h-1zM5 8h1v1h-1zM2 9h1v1h-1zM5 9h1v1h-1zM0 10h11v1h-11z"/></symbol><symbol id="k6d4f" viewBox="0 0 12 12"><path d="M1 0h1v1h-1zM4 0h1v1h-1zM10 0h1v1h-1zM2 1h1v1h-1zM5 1h1v1h-1zM10 1h1v1h-1zM0 2h1v1h-1zM3 2h4v1h-4zM8 2h1v1h-1zM10 2h1v1h-1zM1 3h1v1h-1zM6 3h1v1h-1zM8 3h1v1h-1zM10 3h1v1h-1zM4 4h1v1h-1zM6 4h1v1h-1zM8 4h1v1h-1zM10 4h1v1h-1zM2 5h1v1h-1zM5 5h1v1h-1zM8 5h1v1h-1zM10 5h1v1h-1zM2 6h1v1h-1zM5 6h1v1h-1zM8 6h1v1h-1zM10 6h1v1h-1zM0 7h2v1h-2zM4 7h1v1h-1zM6 7h1v1h-1zM8 7h1v1h-1zM10 7h1v1h-1zM1 8h1v1h-1zM3 8h1v1h-1zM6 8h1v1h-1zM10 8h1v1h-1zM1 9h2v1h-2zM10 9h1v1h-1zM1 10h1v1h-1zM9 10h2v1h-2z"/></symbol><symbol id="k70b9" viewBox="0 0 12 12"><path d="M5 0h1v1h-1zM5 1h1v1h-1zM5 2h5v1h-5zM5 3h1v1h-1zM2 4h7v1h-7zM2 5h1v1h-1zM8 5h1v1h-1zM2 6h1v1h-1zM8 6h1v1h-1zM2 7h7v1h-7zM1 9h1v1h-1zM3 9h1v1h-1zM6 9h1v1h-1zM9 9h1v1h-1zM0 10h1v1h-1zM4 10h1v1h-1zM7 10h1v1h-1zM10 10h1v1h-1z"/></symbol><symbol id="k7248" viewBox="0 0 12 12"><path d="M3 0h1v1h-1zM8 0h2v1h-2zM1 1h1v1h-1zM3 1h1v1h-1zM5 1h3v1h-3zM1 2h1v1h-1zM3 2h1v1h-1zM5 2h1v1h-1zM1 3h10v1h-10zM1 4h1v1h-1zM5 4h2v1h-2zM9 4h1v1h-1zM1 5h1v1h-1zM5 5h1v1h-1zM7 5h1v1h-1zM9 5h1v1h-1zM1 6h3v1h-3zM5 6h1v1h-1zM7 6h1v1h-1zM9 6h1v1h-1zM1 7h1v1h-1zM3 7h1v1h-1zM5 7h1v1h-1zM8 7h1v1h-1zM1 8h1v1h-1zM3 8h1v1h-1zM5 8h1v1h-1zM8 8h1v1h-1zM0 9h1v1h-1zM3 9h1v1h-1zM5 9h1v1h-1zM7 9h1v1h-1zM9 9h1v1h-1zM0 10h1v1h-1zM3 10h2v1h-2zM6 10h1v1h-1zM10 10h1v1h-1z"/></symbol><symbol id="k7528" viewBox="0 0 12 12"><path d="M1 0h9v1h-9zM1 1h1v1h-1zM5 1h1v1h-1zM9 1h1v1h-1zM1 2h1v1h-1zM5 2h1v1h-1zM9 2h1v1h-1zM1 3h9v1h-9zM1 4h1v1h-1zM5 4h1v1h-1zM9 4h1v1h-1zM1 5h1v1h-1zM5 5h1v1h-1zM9 5h1v1h-1zM1 6h9v1h-9zM1 7h1v1h-1zM5 7h1v1h-1zM9 7h1v1h-1zM1 8h1v1h-1zM5 8h1v1h-1zM9 8h1v1h-1zM0 9h1v1h-1zM5 9h1v1h-1zM9 9h1v1h-1zM0 10h1v1h-1zM5 10h1v1h-1zM8 10h2v1h-2z"/></symbol><symbol id="k7684" viewBox="0 0 12 12"><path d="M3 0h1v1h-1zM7 0h1v1h-1zM2 1h1v1h-1zM7 1h1v1h-1zM1 2h4v1h-4zM6 2h5v1h-5zM1 3h1v1h-1zM4 3h2v1h-2zM10 3h1v1h-1zM1 4h1v1h-1zM4 4h1v1h-1zM10 4h1v1h-1zM1 5h4v1h-4zM6 5h1v1h-1zM10 5h1v1h-1zM1 6h1v1h-1zM4 6h1v1h-1zM7 6h1v1h-1zM10 6h1v1h-1zM1 7h1v1h-1zM4 7h1v1h-1zM7 7h1v1h-1zM10 7h1v1h-1zM1 8h1v1h-1zM4 8h1v1h-1zM10 8h1v1h-1zM1 9h4v1h-4zM10 9h1v1h-1zM1 10h1v1h-1zM4 10h1v1h-1zM8 10h2v1h-2z"/></symbol><symbol id="k76ee" viewBox="0 0 12 12"><path d="M2 0h7v1h-7zM2 1h1v1h-1zM8 1h1v1h-1zM2 2h1v1h-1zM8 2h1v1h-1zM2 3h7v1h-7zM2 4h1v1h-1zM8 4h1v1h-1zM2 5h1v1h-1zM8 5h1v1h-1zM2 6h7v1h-7zM2 7h1v1h-1zM8 7h1v1h-1zM2 8h1v1h-1zM8 8h1v1h-1zM2 9h7v1h-7zM2 10h1v1h-1zM8 10h1v1h-1z"/></symbol><symbol id="k770b" viewBox="0 0 12 12"><path d="M1 0h9v1h-9zM5 1h1v1h-1zM1 2h8v1h-8zM4 3h1v1h-1zM0 4h11v1h-11zM3 5h1v1h-1zM8 5h1v1h-1zM2 6h7v1h-7zM1 7h1v1h-1zM3 7h1v1h-1zM8 7h1v1h-1zM0 8h1v1h-1zM3 8h6v1h-6zM3 9h1v1h-1zM8 9h1v1h-1zM3 10h6v1h-6z"/></symbol><symbol id="k79d2" viewBox="0 0 12 12"><path d="M3 0h1v1h-1zM7 0h1v1h-1zM0 1h3v1h-3zM7 1h1v1h-1zM2 2h1v1h-1zM5 2h1v1h-1zM7 2h1v1h-1zM9 2h1v1h-1zM0 3h4v1h-4zM5 3h1v1h-1zM7 3h1v1h-1zM10 3h1v1h-1zM2 4h1v1h-1zM5 4h1v1h-1zM7 4h1v1h-1zM10 4h1v1h-1zM1 5h3v1h-3zM5 5h1v1h-1zM7 5h1v1h-1zM1 6h2v1h-2zM4 6h1v1h-1zM7 6h1v1h-1zM10 6h1v1h-1zM0 7h1v1h-1zM2 7h1v1h-1zM9 7h1v1h-1zM2 8h1v1h-1zM8 8h1v1h-1zM2 9h1v1h-1zM6 9h2v1h-2zM2 10h1v1h-1zM4 10h2v1h-2z"/></symbol><symbol id="k79f0" viewBox="0 0 12 12"><path d="M3 0h2v1h-2zM6 0h1v1h-1zM0 1h3v1h-3zM6 1h1v1h-1zM2 2h1v1h-1zM5 2h6v1h-6zM0 3h5v1h-5zM7 3h1v1h-1zM10 3h1v1h-1zM2 4h1v1h-1zM7 4h1v1h-1zM1 5h3v1h-3zM5 5h1v1h-1zM7 5h1v1h-1zM9 5h1v1h-1zM1 6h2v1h-2zM5 6h1v1h-1zM7 6h1v1h-1zM9 6h1v1h-1zM0 7h1v1h-1zM2 7h1v1h-1zM4 7h1v1h-1zM7 7h1v1h-1zM10 7h1v1h-1zM2 8h2v1h-2zM7 8h1v1h-1zM10 8h1v1h-1zM2 9h1v1h-1zM7 9h1v1h-1zM2 10h1v1h-1zM6 10h2v1h-2z"/></symbol><symbol id="k7a7a" viewBox="0 0 12 12"><path d="M5 0h1v1h-1zM1 1h10v1h-10zM1 2h1v1h-1zM10 2h1v1h-1zM0 3h1v1h-1zM4 3h1v1h-1zM7 3h1v1h-1zM3 4h1v1h-1zM8 4h1v1h-1zM1 5h2v1h-2zM9 5h1v1h-1zM3 6h6v1h-6zM5 7h1v1h-1zM5 8h1v1h-1zM5 9h1v1h-1zM1 10h10v1h-10z"/></symbol><symbol id="k7ad9" viewBox="0 0 12 12"><path d="M1 0h1v1h-1zM7 0h1v1h-1zM2 1h1v1h-1zM7 1h1v1h-1zM0 2h5v1h-5zM7 2h4v1h-4zM7 3h1v1h-1zM0 4h1v1h-1zM3 4h1v1h-1zM7 4h1v1h-1zM1 5h1v1h-1zM3 5h1v1h-1zM5 5h5v1h-5zM1 6h1v1h-1zM3 6h1v1h-1zM5 6h1v1h-1zM9 6h1v1h-1zM2 7h1v1h-1zM5 7h1v1h-1zM9 7h1v1h-1zM2 8h2v1h-2zM5 8h1v1h-1zM9 8h1v1h-1zM0 9h2v1h-2zM5 9h1v1h-1zM9 9h1v1h-1zM5 10h5v1h-5z"/></symbol><symbol id="k7aef" viewBox="0 0 12 12"><path d="M0 0h1v1h-1zM7 0h1v1h-1zM1 1h1v1h-1zM5 1h1v1h-1zM7 1h1v1h-1zM10 1h1v1h-1zM0 2h4v1h-4zM5 2h6v1h-6zM0 4h1v1h-1zM2 4h1v1h-1zM4 4h7v1h-7zM0 5h1v1h-1zM2 5h1v1h-1zM7 5h1v1h-1zM0 6h1v1h-1zM2 6h1v1h-1zM4 6h7v1h-7zM1 7h1v1h-1zM4 7h1v1h-1zM6 7h1v1h-1zM8 7h1v1h-1zM10 7h1v1h-1zM1 8h2v1h-2zM4 8h1v1h-1zM6 8h1v1h-1zM8 8h1v1h-1zM10 8h1v1h-1zM0 9h1v1h-1zM4 9h1v1h-1zM6 9h1v1h-1zM8 9h1v1h-1zM10 9h1v1h-1zM4 10h1v1h-1zM9 10h2v1h-2z"/></symbol><symbol id="k7b80" viewBox="0 0 12 12"><path d="M1 0h1v1h-1zM6 0h1v1h-1zM1 1h4v1h-4zM6 1h5v1h-5zM0 2h1v1h-1zM3 2h1v1h-1zM5 2h1v1h-1zM8 2h1v1h-1zM2 3h1v1h-1zM5 3h5v1h-5zM1 4h1v1h-1zM3 4h1v1h-1zM9 4h1v1h-1zM1 5h1v1h-1zM4 5h4v1h-4zM9 5h1v1h-1zM1 6h1v1h-1zM4 6h1v1h-1zM7 6h1v1h-1zM9 6h1v1h-1zM1 7h1v1h-1zM4 7h4v1h-4zM9 7h1v1h-1zM1 8h1v1h-1zM4 8h1v1h-1zM7 8h1v1h-1zM9 8h1v1h-1zM1 9h1v1h-1zM4 9h4v1h-4zM9 9h1v1h-1zM1 10h1v1h-1zM8 10h2v1h-2z"/></symbol><symbol id="k8017" viewBox="0 0 12 12"><path d="M2 0h1v1h-1zM8 0h2v1h-2zM0 1h8v1h-8zM2 2h1v1h-1zM7 2h1v1h-1zM0 3h5v1h-5zM7 3h3v1h-3zM2 4h1v1h-1zM5 4h3v1h-3zM0 5h5v1h-5zM7 5h1v1h-1zM9 5h2v1h-2zM2 6h1v1h-1zM5 6h4v1h-4zM1 7h3v1h-3zM7 7h1v1h-1zM0 8h1v1h-1zM2 8h1v1h-1zM4 8h1v1h-1zM7 8h1v1h-1zM10 8h1v1h-1zM2 9h1v1h-1zM7 9h1v1h-1zM10 9h1v1h-1zM2 10h1v1h-1zM8 10h3v1h-3z"/></symbol><symbol id="k8282" viewBox="0 0 12 12"><path d="M3 0h1v1h-1zM7 0h1v1h-1zM0 1h11v1h-11zM3 2h1v1h-1zM7 2h1v1h-1zM1 4h8v1h-8zM4 5h1v1h-1zM8 5h1v1h-1zM4 6h1v1h-1zM8 6h1v1h-1zM4 7h1v1h-1zM8 7h1v1h-1zM4 8h1v1h-1zM6 8h3v1h-3zM4 9h1v1h-1zM4 10h1v1h-1z"/></symbol><symbol id="k8868" viewBox="0 0 12 12"><path d="M5 0h1v1h-1zM1 1h9v1h-9zM5 2h1v1h-1zM2 3h7v1h-7zM5 4h1v1h-1zM0 5h11v1h-11zM4 6h1v1h-1zM6 6h1v1h-1zM9 6h1v1h-1zM3 7h1v1h-1zM6 7h1v1h-1zM8 7h1v1h-1zM2 8h2v1h-2zM7 8h1v1h-1zM0 9h2v1h-2zM3 9h1v1h-1zM5 9h1v1h-1zM8 9h1v1h-1zM3 10h2v1h-2zM9 10h2v1h-2z"/></symbol><symbol id="k89c8" viewBox="0 0 12 12"><path d="M3 0h1v1h-1zM6 0h1v1h-1zM1 1h1v1h-1zM3 1h1v1h-1zM6 1h5v1h-5zM1 2h1v1h-1zM3 2h1v1h-1zM5 2h1v1h-1zM8 2h1v1h-1zM1 3h1v1h-1zM3 3h1v1h-1zM9 3h1v1h-1zM2 4h7v1h-7zM2 5h1v1h-1zM8 5h1v1h-1zM2 6h1v1h-1zM5 6h1v1h-1zM8 6h1v1h-1zM2 7h1v1h-1zM5 7h1v1h-1zM8 7h1v1h-1zM2 8h1v1h-1zM5 8h1v1h-1zM8 8h1v1h-1zM10 8h1v1h-1zM3 9h2v1h-2zM6 9h1v1h-1zM10 9h1v1h-1zM0 10h3v1h-3zM6 10h5v1h-5z"/></symbol><symbol id="k8bcd" viewBox="0 0 12 12"><path d="M1 0h1v1h-1zM5 0h6v1h-6zM2 1h1v1h-1zM10 1h1v1h-1zM4 2h5v1h-5zM10 2h1v1h-1zM0 3h3v1h-3zM10 3h1v1h-1zM2 4h1v1h-1zM5 4h3v1h-3zM10 4h1v1h-1zM2 5h1v1h-1zM5 5h1v1h-1zM7 5h1v1h-1zM10 5h1v1h-1zM2 6h1v1h-1zM5 6h1v1h-1zM7 6h1v1h-1zM10 6h1v1h-1zM2 7h1v1h-1zM5 7h3v1h-3zM10 7h1v1h-1zM2 8h2v1h-2zM10 8h1v1h-1zM2 9h1v1h-1zM8 9h1v1h-1zM10 9h1v1h-1zM9 10h1v1h-1z"/></symbol><symbol id="k8bdd" viewBox="0 0 12 12"><path d="M1 0h1v1h-1zM8 0h2v1h-2zM2 1h1v1h-1zM5 1h3v1h-3zM7 2h1v1h-1zM0 3h3v1h-3zM4 3h7v1h-7zM2 4h1v1h-1zM7 4h1v1h-1zM2 5h1v1h-1zM7 5h1v1h-1zM2 6h1v1h-1zM5 6h5v1h-5zM2 7h1v1h-1zM5 7h1v1h-1zM9 7h1v1h-1zM2 8h2v1h-2zM5 8h1v1h-1zM9 8h1v1h-1zM2 9h1v1h-1zM5 9h5v1h-5zM5 10h1v1h-1zM9 10h1v1h-1z"/></symbol><symbol id="k8f6f" viewBox="0 0 12 12"><path d="M1 0h1v1h-1zM6 0h1v1h-1zM1 1h1v1h-1zM6 1h1v1h-1zM0 2h5v1h-5zM6 2h5v1h-5zM1 3h1v1h-1zM6 3h1v1h-1zM10 3h1v1h-1zM0 4h1v1h-1zM2 4h1v1h-1zM5 4h1v1h-1zM7 4h1v1h-1zM9 4h1v1h-1zM0 5h5v1h-5zM7 5h1v1h-1zM2 6h1v1h-1zM7 6h1v1h-1zM2 7h3v1h-3zM6 7h1v1h-1zM8 7h1v1h-1zM0 8h3v1h-3zM6 8h1v1h-1zM8 8h1v1h-1zM2 9h1v1h-1zM5 9h1v1h-1zM9 9h1v1h-1zM2 10h1v1h-1zM4 10h1v1h-1zM10 10h1v1h-1z"/></symbol><symbol id="k8fc5" viewBox="0 0 12 12"><path d="M1 0h1v1h-1zM4 0h5v1h-5zM2 1h1v1h-1zM6 1h1v1h-1zM8 1h1v1h-1zM2 2h1v1h-1zM6 2h1v1h-1zM8 2h1v1h-1zM6 3h1v1h-1zM8 3h1v1h-1zM0 4h3v1h-3zM4 4h5v1h-5zM2 5h1v1h-1zM6 5h1v1h-1zM8 5h1v1h-1zM2 6h1v1h-1zM6 6h1v1h-1zM8 6h1v1h-1zM10 6h1v1h-1zM2 7h1v1h-1zM6 7h1v1h-1zM9 7h2v1h-2zM2 8h1v1h-1zM6 8h1v1h-1zM10 8h1v1h-1zM1 9h1v1h-1zM3 9h1v1h-1zM0 10h1v1h-1zM4 10h7v1h-7z"/></symbol><symbol id="k8fde" viewBox="0 0 12 12"><path d="M1 0h1v1h-1zM6 0h1v1h-1zM2 1h1v1h-1zM4 1h7v1h-7zM2 2h1v1h-1zM6 2h1v1h-1zM5 3h1v1h-1zM7 3h1v1h-1zM0 4h3v1h-3zM4 4h6v1h-6zM2 5h1v1h-1zM7 5h1v1h-1zM2 6h1v1h-1zM4 6h7v1h-7zM2 7h1v1h-1zM7 7h1v1h-1zM2 8h1v1h-1zM7 8h1v1h-1zM1 9h1v1h-1zM3 9h1v1h-1zM7 9h1v1h-1zM0 10h1v1h-1zM4 10h7v1h-7z"/></symbol><symbol id="k9009" viewBox="0 0 12 12"><path d="M1 0h1v1h-1zM5 0h1v1h-1zM7 0h1v1h-1zM2 1h1v1h-1zM5 1h1v1h-1zM7 1h1v1h-1zM2 2h1v1h-1zM5 2h5v1h-5zM4 3h1v1h-1zM7 3h1v1h-1zM0 4h3v1h-3zM4 4h7v1h-7zM2 5h1v1h-1zM6 5h1v1h-1zM8 5h1v1h-1zM2 6h1v1h-1zM6 6h1v1h-1zM8 6h1v1h-1zM10 6h1v1h-1zM2 7h1v1h-1zM5 7h1v1h-1zM8 7h1v1h-1zM10 7h1v1h-1zM2 8h1v1h-1zM4 8h1v1h-1zM9 8h2v1h-2zM1 9h1v1h-1zM3 9h1v1h-1zM0 10h1v1h-1zM4 10h7v1h-7z"/></symbol><symbol id="k91d1" viewBox="0 0 12 12"><path d="M5 0h1v1h-1zM4 1h1v1h-1zM6 1h1v1h-1zM3 2h1v1h-1zM7 2h1v1h-1zM2 3h1v1h-1zM8 3h1v1h-1zM0 4h2v1h-2zM3 4h5v1h-5zM9 4h2v1h-2zM5 5h1v1h-1zM1 6h9v1h-9zM5 7h1v1h-1zM2 8h1v1h-1zM5 8h1v1h-1zM8 8h1v1h-1zM3 9h1v1h-1zM5 9h1v1h-1zM7 9h1v1h-1zM0 10h11v1h-11z"/></symbol><symbol id="k95f2" viewBox="0 0 12 12"><path d="M1 0h1v1h-1zM4 0h7v1h-7zM2 1h1v1h-1zM10 1h1v1h-1zM0 2h1v1h-1zM5 2h1v1h-1zM10 2h1v1h-1zM0 3h1v1h-1zM5 3h1v1h-1zM10 3h1v1h-1zM0 4h1v1h-1zM2 4h7v1h-7zM10 4h1v1h-1zM0 5h1v1h-1zM5 5h1v1h-1zM10 5h1v1h-1zM0 6h1v1h-1zM4 6h3v1h-3zM10 6h1v1h-1zM0 7h1v1h-1zM3 7h1v1h-1zM5 7h1v1h-1zM7 7h1v1h-1zM10 7h1v1h-1zM0 8h1v1h-1zM2 8h1v1h-1zM5 8h1v1h-1zM8 8h1v1h-1zM10 8h1v1h-1zM0 9h1v1h-1zM5 9h1v1h-1zM10 9h1v1h-1zM0 10h1v1h-1zM8 10h3v1h-3z"/></symbol><symbol id="k961f" viewBox="0 0 12 12"><path d="M0 0h4v1h-4zM7 0h1v1h-1zM0 1h1v1h-1zM3 1h1v1h-1zM7 1h1v1h-1zM0 2h1v1h-1zM2 2h1v1h-1zM7 2h1v1h-1zM0 3h2v1h-2zM7 3h1v1h-1zM0 4h1v1h-1zM2 4h1v1h-1zM7 4h1v1h-1zM0 5h1v1h-1zM3 5h1v1h-1zM7 5h1v1h-1zM0 6h1v1h-1zM3 6h1v1h-1zM7 6h1v1h-1zM0 7h2v1h-2zM3 7h1v1h-1zM6 7h1v1h-1zM8 7h1v1h-1zM0 8h1v1h-1zM2 8h1v1h-1zM6 8h1v1h-1zM8 8h1v1h-1zM0 9h1v1h-1zM5 9h1v1h-1zM9 9h1v1h-1zM0 10h1v1h-1zM3 10h2v1h-2zM10 10h1v1h-1z"/></symbol><symbol id="k96f7" viewBox="0 0 12 12"><path d="M1 0h9v1h-9zM5 1h1v1h-1zM0 2h11v1h-11zM0 3h1v1h-1zM5 3h1v1h-1zM10 3h1v1h-1zM0 4h1v1h-1zM2 4h2v1h-2zM5 4h1v1h-1zM7 4h2v1h-2zM10 4h1v1h-1zM5 5h1v1h-1zM1 6h9v1h-9zM1 7h1v1h-1zM5 7h1v1h-1zM9 7h1v1h-1zM1 8h9v1h-9zM1 9h1v1h-1zM5 9h1v1h-1zM9 9h1v1h-1zM1 10h9v1h-9z"/></symbol><symbol id="k9738" viewBox="0 0 12 12"><path d="M1 0h9v1h-9zM5 1h1v1h-1zM0 2h11v1h-11zM0 3h1v1h-1zM3 3h1v1h-1zM5 3h1v1h-1zM7 3h1v1h-1zM10 3h1v1h-1zM0 4h10v1h-10zM1 5h1v1h-1zM4 5h1v1h-1zM6 5h1v1h-1zM9 5h1v1h-1zM0 6h5v1h-5zM6 6h4v1h-4zM0 7h1v1h-1zM2 7h1v1h-1zM4 7h1v1h-1zM6 7h1v1h-1zM9 7h1v1h-1zM0 8h10v1h-10zM2 9h1v1h-1zM6 9h1v1h-1zM9 9h1v1h-1zM2 10h1v1h-1zM5 10h1v1h-1zM8 10h2v1h-2z"/></symbol><symbol id="k9879" viewBox="0 0 12 12"><path d="M5 0h6v1h-6zM0 1h5v1h-5zM7 1h1v1h-1zM2 2h1v1h-1zM5 2h6v1h-6zM2 3h1v1h-1zM5 3h1v1h-1zM10 3h1v1h-1zM2 4h1v1h-1zM5 4h1v1h-1zM7 4h1v1h-1zM10 4h1v1h-1zM2 5h1v1h-1zM5 5h1v1h-1zM7 5h1v1h-1zM10 5h1v1h-1zM2 6h1v1h-1zM5 6h1v1h-1zM7 6h1v1h-1zM10 6h1v1h-1zM2 7h4v1h-4zM7 7h1v1h-1zM10 7h1v1h-1zM0 8h2v1h-2zM7 8h2v1h-2zM6 9h1v1h-1zM9 9h1v1h-1zM4 10h2v1h-2zM10 10h1v1h-1z"/></symbol></defs></svg><div class="a " style="left:0px;top:0px;width:1280px;height:26px;background:linear-gradient(to bottom,#5e5e7c 0px,#5e5e7c 1px,#f2f2f6 1px,#f2f2f6 2px,#a6a6bf 2px,#b2b2c8 6px,#cdcddb 13px,#ebebf1 18px,#fafafc 21px,#ffffff 22px,#ffffff 23px,#dcdcd8 23px,#dcdcd8 24px,#b8b8cc 24px,#b8b8cc 25px,#74749a 25px,#74749a 26px)"></div>
<div class="a " style="left:0px;top:0px;width:1px;height:26px;background:#6c6c8a"></div>
<div class="a " style="left:1278px;top:0px;width:2px;height:26px;background:#6c6c8a"></div>
<svg style="left:2px;top:4px" width="17" height="16" viewBox="0 0 17 16"><path d="M0.8 7 L8.5 1.5 L12 12 L7 15.5 Z" fill="#e4e4e4" stroke="#282828" stroke-width="1"/><path d="M0.8 7 L8.5 1.5" stroke="#20a8d8" stroke-width="2"/><path d="M4 8 L7 6 M5 8 L6 11 M5.5 9.5 L7.5 8.5" stroke="#101010" stroke-width="1.2"/><path d="M9 1.5 Q14 0 16 4 Q17.5 9 12 11 L10 11.5 Z" fill="#22ee22" stroke="#101010" stroke-width="1.2"/><circle cx="14" cy="4.5" r=".9" fill="#000"/><path d="M8.5 12 L12 11.5 L12 15 L10 15.5 Z" fill="#30e030" stroke="#303030" stroke-width=".6"/></svg>
<div class="a" style="left:28px;top:7px;font:bold 13px/14px 'Liberation Mono';letter-spacing:0.2px;color:#000;white-space:pre">FlashFXP</div>
<div class="a" style="left:1211px;top:2px;width:21px;height:21px;border:1px solid #7b7b98;border-radius:3px;background:linear-gradient(#ffffff,#dcdce6 45%,#b9b9cd)"></div>
<div class="a" style="left:1234px;top:2px;width:21px;height:21px;border:1px solid #7b7b98;border-radius:3px;background:linear-gradient(#ffffff,#dcdce6 45%,#b9b9cd)"></div>
<div class="a" style="left:1257px;top:2px;width:21px;height:21px;border:1px solid #c04848;border-radius:3px;background:linear-gradient(#f4a8a0,#e06a62 40%,#d24c48)"></div>
<svg style="left:1211px;top:2px" width="21" height="21" viewBox="0 0 21 21"><rect x="4.5" y="13.5" width="8" height="3" fill="#fff"/><rect x="4" y="13" width="7" height="3" fill="#30304a"/></svg>
<svg style="left:1234px;top:2px" width="21" height="21" viewBox="0 0 21 21"><path d="M8.5 5 H15.5 V12" stroke="#fff" stroke-width="3" fill="none" transform="translate(.6,.6)"/><path d="M8.5 4.5 H15 V11.5" stroke="#202034" stroke-width="2" fill="none"/><rect x="4.5" y="9" width="7" height="7" fill="none" stroke="#fff" stroke-width="2.5" transform="translate(.6,.6)"/><rect x="4.5" y="8.5" width="7" height="7" fill="none" stroke="#202034" stroke-width="1.6"/><rect x="4" y="8" width="8" height="2" fill="#202034"/></svg>
<svg style="left:1257px;top:2px" width="21" height="21" viewBox="0 0 21 21"><path d="M5 5 L16 16 M16 5 L5 16" stroke="#3a1010" stroke-width="3.2"/><path d="M5 5 L16 16 M16 5 L5 16" stroke="#fff" stroke-width="2.2"/></svg>
<div class="a " style="left:0px;top:26px;width:1280px;height:20px;background:linear-gradient(#e6e7ee,#dfe0e8)"></div>
<div class="a " style="left:0px;top:45px;width:1280px;height:1px;background:#fbfbfd"></div>
<div class="a t" style="left:6px;top:31px;"><i class="c"><svg width="12" height="12"><use href="#k4f1a"/></svg></i><i class="c"><svg width="12" height="12"><use href="#k8bdd"/></svg></i><b>(</b><b>E</b><b>)</b></div>
<div class="a t" style="left:60px;top:31px;"><i class="c"><svg width="12" height="12"><use href="#k7ad9"/></svg></i><i class="c"><svg width="12" height="12"><use href="#k70b9"/></svg></i><b>(</b><b>S</b><b>)</b></div>
<div class="a t" style="left:114px;top:31px;"><i class="c"><svg width="12" height="12"><use href="#k9009"/></svg></i><i class="c"><svg width="12" height="12"><use href="#k9879"/></svg></i><b>(</b><b>O</b><b>)</b></div>
<div class="a t" style="left:168px;top:31px;"><i class="c"><svg width="12" height="12"><use href="#k961f"/></svg></i><i class="c"><svg width="12" height="12"><use href="#k5217"/></svg></i><b>(</b><b>Q</b><b>)</b></div>
<div class="a t" style="left:222px;top:31px;"><i class="c"><svg width="12" height="12"><use href="#k547d"/></svg></i><i class="c"><svg width="12" height="12"><use href="#k4ee4"/></svg></i><b>(</b><b>C</b><b>)</b></div>
<div class="a t" style="left:276px;top:31px;"><i class="c"><svg width="12" height="12"><use href="#k5de5"/></svg></i><i class="c"><svg width="12" height="12"><use href="#k5177"/></svg></i><b>(</b><b>T</b><b>)</b></div>
<div class="a t" style="left:331px;top:31px;"><i class="c"><svg width="12" height="12"><use href="#k76ee"/></svg></i><i class="c"><svg width="12" height="12"><use href="#k5f55"/></svg></i><b>(</b><b>D</b><b>)</b></div>
<div class="a t" style="left:384px;top:31px;"><i class="c"><svg width="12" height="12"><use href="#k67e5"/></svg></i><i class="c"><svg width="12" height="12"><use href="#k770b"/></svg></i><b>(</b><b>V</b><b>)</b></div>
<div class="a t" style="left:438px;top:31px;"><i class="c"><svg width="12" height="12"><use href="#k5e2e"/></svg></i><i class="c"><svg width="12" height="12"><use href="#k52a9"/></svg></i><b>(</b><b>H</b><b>)</b></div>
<div class="a " style="left:0px;top:46px;width:624px;height:34px;border:1px solid #9a9aa2;border-right-color:#9a9aa2;background:#dddce2;box-shadow:inset 1px 1px 0 #ffffff"></div>
<div class="a " style="left:628px;top:46px;width:651px;height:34px;border:1px solid #9a9aa2;border-right-color:#9a9aa2;background:#dddce2;box-shadow:inset 1px 1px 0 #ffffff"></div>
<div class="a t" style="left:22px;top:58px;color:#a0a0a8;filter:drop-shadow(1px 1px 0 #fff)"><i class="c"><svg width="12" height="12"><use href="#k672c"/></svg></i><i class="c"><svg width="12" height="12"><use href="#k5730"/></svg></i><i class="c"><svg width="12" height="12"><use href="#k6d4f"/></svg></i><i class="c"><svg width="12" height="12"><use href="#k89c8"/></svg></i><i class="c"><svg width="12" height="12"><use href="#k5668"/></svg></i></div>
<div class="a " style="left:106px;top:50px;width:1px;height:26px;background:#aeaeb6"></div>
<div class="a " style="left:107px;top:50px;width:1px;height:26px;background:#e6e6ea"></div>
<div class="a " style="left:223px;top:50px;width:1px;height:26px;background:#aeaeb6"></div>
<div class="a " style="left:224px;top:50px;width:1px;height:26px;background:#e6e6ea"></div>
<div class="a " style="left:262px;top:50px;width:1px;height:26px;background:#aeaeb6"></div>
<div class="a " style="left:263px;top:50px;width:1px;height:26px;background:#e6e6ea"></div>
<svg style="left:118px;top:54px" width="16" height="17" viewBox="0 0 16 17"><defs><linearGradient id="gp118" x1="0" x2="1"><stop offset="0" stop-color="#1f6ee0"/><stop offset=".45" stop-color="#8ccaff"/><stop offset="1" stop-color="#1a5fd0"/></linearGradient></defs><rect x="0.5" y="0.5" width="5" height="16" rx="2.5" fill="url(#gp118)" stroke="#2a66c0" stroke-width=".6"/><rect x="9.5" y="0.5" width="5" height="16" rx="2.5" fill="url(#gp118)" stroke="#2a66c0" stroke-width=".6"/></svg>
<svg style="left:152px;top:52px" width="14" height="21" viewBox="0 0 14 21"><path d="M2 0.8 L11 6 L2 11.4 Z" fill="#cacace" stroke="#a8a8b0" stroke-width=".9" stroke-linejoin="round"/><circle cx="3.3" cy="17.5" r="2.6" fill="#e4e4e8" stroke="#a8a8b0" stroke-width=".9"/><circle cx="9" cy="17.5" r="2.6" fill="#e4e4e8" stroke="#a8a8b0" stroke-width=".9"/><path d="M4.4 16.4 Q3.3 15.6 2.4 16.6 Q1.9 17.8 2.8 18.6 Q3.8 19 4.4 18.2 H3.4" stroke="#909098" stroke-width=".8" fill="none"/><rect x="8" y="16" width="2" height="3" fill="none" stroke="#909098" stroke-width=".8"/></svg>
<svg style="left:177px;top:61px" width="7" height="4" viewBox="0 0 7 4"><path d="M0 0 H6 L3 3.5 Z" fill="#000"/></svg>
<svg style="left:191px;top:52px" width="25" height="21" viewBox="0 0 25 21"><path d="M22.5 1.5 Q14 1.5 9.5 7" stroke="#f0a030" stroke-width="3.2" fill="none"/><path d="M4 12 L6 3.5 L12.5 8.5 Z" fill="#f4a838" stroke="#d08010" stroke-width=".6"/><path d="M14.5 4.5 L23.5 1.5 L24.5 7 L15.5 10 Z" fill="#f0f4ff" stroke="#8090c0" stroke-width=".6"/><path d="M17.5 4 V9 M19.5 3.3 V8.3 M21.5 2.6 V7.6" stroke="#6078b8" stroke-width="1"/><path d="M3 19.5 Q14 19 19 11.5" stroke="#20d020" stroke-width="3.2" fill="none"/><path d="M22.5 6.5 L21.5 15 L15 11 Z" fill="#20d820" stroke="#10a010" stroke-width=".6"/><circle cx="6" cy="15" r="4.8" fill="#1848b0"/><path d="M3 13 Q5 10.5 8 12 Q9 14 7 16 Q5 15.5 3 13 Z" fill="#c8d830"/><circle cx="6" cy="15" r="4.8" fill="none" stroke="#0a2a80" stroke-width=".6"/></svg>
<svg style="left:232px;top:52px" width="23" height="22" viewBox="0 0 23 22"><ellipse cx="11.5" cy="11" rx="10" ry="5.5" transform="rotate(-25 11.5 11)" fill="#f6e49a" stroke="#e0b040" stroke-width=".8"/><path d="M5 12 Q11 9 19 10" stroke="#fffbe8" stroke-width="1.5" fill="none"/><path d="M3.5 9.5 Q6 3 14.5 3.5" stroke="#18c8c8" stroke-width="3.6" fill="none"/><path d="M13 -0.5 L21 4.5 L13.5 9 Z" fill="#20d0d0" stroke="#109090" stroke-width=".6"/><path d="M19.5 12.5 Q17 19 8.5 18.5" stroke="#18c8c8" stroke-width="3.6" fill="none"/><path d="M10 22.5 L2 17.5 L9.5 13 Z" fill="#20d0d0" stroke="#109090" stroke-width=".6"/></svg>
<div class="a" style="left:267px;top:48px;width:31px;height:30px;border:1px solid #8496a8;border-radius:3px;background:#fff"></div>
<svg style="left:272px;top:53px" width="22" height="21" viewBox="0 0 22 21"><path d="M1 2 L14 1 L14 14 L1 16 Z" fill="#f8d850" stroke="#d8a820" stroke-width=".8"/><path d="M3 16 L6 8 L15 7 L12 15 Z" fill="#fff0a0"/><path d="M9 7 L17 5 L17 14 L10 16 Z" fill="#30a8f0" stroke="#6060d0" stroke-width=".8"/><path d="M8 18 L16 16 L18 18 L10 20 Z" fill="#d8d8f0" stroke="#8080c0" stroke-width=".6"/><rect x="17" y="6" width="4" height="10" fill="#a0a0e0" stroke="#6060b0" stroke-width=".6"/></svg>
<svg style="left:633px;top:51px" width="23" height="23" viewBox="0 0 23 23"><path d="M22.5 0.5 L5.5 10 L11 10 L0.5 22.5 L16.5 12 L11.5 12 Z" fill="#c6c6cc" stroke="#a6a6ae" stroke-width=".8" stroke-linejoin="round"/><path d="M20 2.5 L8 9.5" stroke="#e2e2e6" stroke-width="1.2"/></svg>
<svg style="left:663px;top:51px" width="24" height="23" viewBox="0 0 24 23"><path d="M23.5 0.5 L18.5 5.5 M5.5 17.5 L0.5 22.5" stroke="#404050" stroke-width="1.4"/><path d="M11 9 L13.5 6.5 M13.5 11.5 L16 9" stroke="#303040" stroke-width="1.2"/><rect x="13.5" y="3.5" width="8" height="6" rx="2.2" transform="rotate(-45 17.5 6.5)" fill="#a8dcf8" stroke="#3c8cc8" stroke-width=".8"/><rect x="3" y="12.5" width="8" height="6" rx="2.2" transform="rotate(-45 7 15.5)" fill="#a8dcf8" stroke="#3c8cc8" stroke-width=".8"/></svg>
<div class="a " style="left:695px;top:50px;width:1px;height:26px;background:#aeaeb6"></div>
<div class="a " style="left:696px;top:50px;width:1px;height:26px;background:#e6e6ea"></div>
<svg style="left:705px;top:52px" width="20" height="22" viewBox="0 0 20 22"><path d="M1.5 5 Q4 3 9 10 Q13 16 16.5 19.5" stroke="#e80000" stroke-width="3" fill="none" stroke-linecap="round"/><path d="M19 1.8 Q12 6 8 12 Q4 18 1.5 21" stroke="#e80000" stroke-width="3.2" fill="none" stroke-linecap="round"/></svg>
<div class="a " style="left:734px;top:50px;width:1px;height:26px;background:#aeaeb6"></div>
<div class="a " style="left:735px;top:50px;width:1px;height:26px;background:#e6e6ea"></div>
<svg style="left:746px;top:54px" width="16" height="17" viewBox="0 0 16 17"><defs><linearGradient id="gp746" x1="0" x2="1"><stop offset="0" stop-color="#1f6ee0"/><stop offset=".45" stop-color="#8ccaff"/><stop offset="1" stop-color="#1a5fd0"/></linearGradient></defs><rect x="0.5" y="0.5" width="5" height="16" rx="2.5" fill="url(#gp746)" stroke="#2a66c0" stroke-width=".6"/><rect x="9.5" y="0.5" width="5" height="16" rx="2.5" fill="url(#gp746)" stroke="#2a66c0" stroke-width=".6"/></svg>
<svg style="left:780px;top:52px" width="14" height="21" viewBox="0 0 14 21"><path d="M2 0.8 L11 6 L2 11.4 Z" fill="#cacace" stroke="#a8a8b0" stroke-width=".9" stroke-linejoin="round"/><circle cx="3.3" cy="17.5" r="2.6" fill="#e4e4e8" stroke="#a8a8b0" stroke-width=".9"/><circle cx="9" cy="17.5" r="2.6" fill="#e4e4e8" stroke="#a8a8b0" stroke-width=".9"/><path d="M4.4 16.4 Q3.3 15.6 2.4 16.6 Q1.9 17.8 2.8 18.6 Q3.8 19 4.4 18.2 H3.4" stroke="#909098" stroke-width=".8" fill="none"/><rect x="8" y="16" width="2" height="3" fill="none" stroke="#909098" stroke-width=".8"/></svg>
<svg style="left:806px;top:61px" width="7" height="4" viewBox="0 0 7 4"><path d="M0 0 H6 L3 3.5 Z" fill="#000"/></svg>
<svg style="left:820px;top:52px" width="25" height="21" viewBox="0 0 25 21"><path d="M22.5 1.5 Q14 1.5 9.5 7" stroke="#f0a030" stroke-width="3.2" fill="none"/><path d="M4 12 L6 3.5 L12.5 8.5 Z" fill="#f4a838" stroke="#d08010" stroke-width=".6"/><path d="M14.5 4.5 L23.5 1.5 L24.5 7 L15.5 10 Z" fill="#f0f4ff" stroke="#8090c0" stroke-width=".6"/><path d="M17.5 4 V9 M19.5 3.3 V8.3 M21.5 2.6 V7.6" stroke="#6078b8" stroke-width="1"/><path d="M3 19.5 Q14 19 19 11.5" stroke="#20d020" stroke-width="3.2" fill="none"/><path d="M22.5 6.5 L21.5 15 L15 11 Z" fill="#20d820" stroke="#10a010" stroke-width=".6"/><circle cx="6" cy="15" r="4.8" fill="#1848b0"/><path d="M3 13 Q5 10.5 8 12 Q9 14 7 16 Q5 15.5 3 13 Z" fill="#c8d830"/><circle cx="6" cy="15" r="4.8" fill="none" stroke="#0a2a80" stroke-width=".6"/></svg>
<div class="a " style="left:851px;top:50px;width:1px;height:26px;background:#aeaeb6"></div>
<div class="a " style="left:852px;top:50px;width:1px;height:26px;background:#e6e6ea"></div>
<svg style="left:860px;top:52px" width="23" height="22" viewBox="0 0 23 22"><ellipse cx="11.5" cy="11" rx="10" ry="5.5" transform="rotate(-25 11.5 11)" fill="#f6e49a" stroke="#e0b040" stroke-width=".8"/><path d="M5 12 Q11 9 19 10" stroke="#fffbe8" stroke-width="1.5" fill="none"/><path d="M3.5 9.5 Q6 3 14.5 3.5" stroke="#18c8c8" stroke-width="3.6" fill="none"/><path d="M13 -0.5 L21 4.5 L13.5 9 Z" fill="#20d0d0" stroke="#109090" stroke-width=".6"/><path d="M19.5 12.5 Q17 19 8.5 18.5" stroke="#18c8c8" stroke-width="3.6" fill="none"/><path d="M10 22.5 L2 17.5 L9.5 13 Z" fill="#20d0d0" stroke="#109090" stroke-width=".6"/></svg>
<div class="a " style="left:890px;top:50px;width:1px;height:26px;background:#aeaeb6"></div>
<div class="a " style="left:891px;top:50px;width:1px;height:26px;background:#e6e6ea"></div>
<svg style="left:898px;top:51px" width="23" height="23" viewBox="0 0 23 23"><circle cx="8.5" cy="8.5" r="8" fill="#1a50a8"/><path d="M3 6 Q6 2 10 4 Q9 8 12 9 Q8 12 6 10 Q4 8 3 6 Z" fill="#d8e030"/><path d="M11 1.5 Q15 3 14 7 Q12 5 11 1.5Z" fill="#a0d020"/><path d="M10 11 L18 9 L18 17 L11 19 Z" fill="#40b0f8" stroke="#6080d0" stroke-width=".8"/><path d="M9 20 L17 18 L19 20 L11 22 Z" fill="#e0e0f8" stroke="#9090c8" stroke-width=".6"/><rect x="18.5" y="10" width="4" height="9" fill="#b0b0e8" stroke="#7070b8" stroke-width=".6"/></svg>
<div class="a " style="left:0px;top:80px;width:1280px;height:1px;background:#fbfbfc"></div>
<div class="a " style="left:0px;top:81px;width:624px;height:30px;border-left:1px solid #9a9aa2;border-right:1px solid #9a9aa2;background:#dddce2;box-shadow:inset 1px 0 0 #fff"></div>
<div class="a " style="left:628px;top:81px;width:651px;height:30px;border-left:1px solid #9a9aa2;border-right:1px solid #9a9aa2;background:#dddce2;box-shadow:inset 1px 0 0 #fff"></div>
<svg style="left:7px;top:88px" width="16" height="16" viewBox="0 0 16 16"><path d="M8.0 0.6 L10.1 5.8 L15.6 6.1 L11.3 9.7 L12.7 15.1 L8.0 12.1 L3.3 15.1 L4.7 9.7 L0.4 6.1 L5.9 5.8 Z" fill="url(#gstar)" stroke="#c09010" stroke-width="1" stroke-linejoin="round"/></svg>
<svg style="left:30px;top:88px" width="17" height="16" viewBox="0 0 17 16"><path d="M0.5 2 L12.5 0.5 L13 5 L16 5.5 L13 14 L0.5 15 Z" fill="#f8e49a" stroke="#c8a040" stroke-width=".9"/><path d="M6 5.5 L16 5.5 L13 13.8 L3 14.8 Z" fill="#fff2c0" stroke="#d0b050" stroke-width=".6"/><path d="M8 0.8 L13 5.8 L10.5 5.8 Q10.5 11 6.5 14.5 L5.3 13.8 Q7.2 10 7 5.8 L3.2 5.8 Z" fill="#28b828" stroke="#107010" stroke-width=".7"/><path d="M9 4 Q9.5 8 8 12" stroke="#80f080" stroke-width=".9" fill="none"/></svg>
<div class="a " style="left:53px;top:87px;width:568px;height:22px;border:1px solid #7f9db9;background:#fff"></div>
<svg style="left:58px;top:90px" width="16" height="14" viewBox="0 0 16 14"><path d="M0.5 2 Q0.5 0.5 2 0.5 H5.5 L7 2 H12.5 Q13.5 2 13.5 3 V4.5 H2.5 V12.5 H1.5 Q0.5 12.5 0.5 11.5 Z" fill="#fff4b8" stroke="#d8961c"/><path d="M2.5 4.5 H14 Q15.5 4.5 15.5 6 V11.5 Q15.5 12.5 14.5 12.5 H2.5 Z" fill="url(#gfold)" stroke="#cf8a12"/><path d="M3.5 5.6 H14" stroke="#fffce0"/><path d="M3 13.5 H15" stroke="#b0a8c0" stroke-width="1" opacity=".6"/></svg>
<div class="a t" style="left:78px;top:92px;"><b>D</b><b>:</b><b>\</b><i class="c"><svg width="12" height="12"><use href="#k6211"/></svg></i><i class="c"><svg width="12" height="12"><use href="#k7684"/></svg></i><i class="c"><svg width="12" height="12"><use href="#k6587"/></svg></i><i class="c"><svg width="12" height="12"><use href="#k6863"/></svg></i><b>\</b><b>a</b><b>n</b><b>t</b><b>i</b><b>v</b><b>i</b><b>r</b><b>u</b><b>s</b></div>
<div class="a" style="left:602px;top:89px;width:17px;height:19px;border:1px solid #b8b8c8;border-radius:2px;background:linear-gradient(#fafafc,#d8d8e4)"></div>
<svg style="left:605px;top:94px" width="10" height="7" viewBox="0 0 10 7"><path d="M1.5 1.5 L5 5 L8.5 1.5" stroke="#303030" stroke-width="2.2" fill="none"/></svg>
<svg style="left:635px;top:88px" width="16" height="16" viewBox="0 0 16 16"><path d="M8.0 0.6 L10.1 5.8 L15.6 6.1 L11.3 9.7 L12.7 15.1 L8.0 12.1 L3.3 15.1 L4.7 9.7 L0.4 6.1 L5.9 5.8 Z" fill="url(#gstar)" stroke="#c09010" stroke-width="1" stroke-linejoin="round"/></svg>
<svg style="left:658px;top:88px" width="17" height="16" viewBox="0 0 17 16"><path d="M0.5 2 L12.5 0.5 L13 5 L16 5.5 L13 14 L0.5 15 Z" fill="#f8e49a" stroke="#c8a040" stroke-width=".9"/><path d="M6 5.5 L16 5.5 L13 13.8 L3 14.8 Z" fill="#fff2c0" stroke="#d0b050" stroke-width=".6"/><path d="M8 0.8 L13 5.8 L10.5 5.8 Q10.5 11 6.5 14.5 L5.3 13.8 Q7.2 10 7 5.8 L3.2 5.8 Z" fill="#28b828" stroke="#107010" stroke-width=".7"/><path d="M9 4 Q9.5 8 8 12" stroke="#80f080" stroke-width=".9" fill="none"/></svg>
<div class="a " style="left:681px;top:85px;width:594px;height:22px;border:1px solid #7f9db9;background:#fff"></div>
<svg style="left:686px;top:88px" width="16" height="14" viewBox="0 0 16 14"><path d="M0.5 2 Q0.5 0.5 2 0.5 H5.5 L7 2 H12.5 Q13.5 2 13.5 3 V4.5 H2.5 V12.5 H1.5 Q0.5 12.5 0.5 11.5 Z" fill="#fff4b8" stroke="#d8961c"/><path d="M2.5 4.5 H14 Q15.5 4.5 15.5 6 V11.5 Q15.5 12.5 14.5 12.5 H2.5 Z" fill="url(#gfold)" stroke="#cf8a12"/><path d="M3.5 5.6 H14" stroke="#fffce0"/><path d="M3 13.5 H15" stroke="#b0a8c0" stroke-width="1" opacity=".6"/></svg>
<div class="a t" style="left:706px;top:90px;"><b>/</b><i class="c"><svg width="12" height="12"><use href="#k5e38"/></svg></i><i class="c"><svg width="12" height="12"><use href="#k7528"/></svg></i><i class="c"><svg width="12" height="12"><use href="#k8f6f"/></svg></i><i class="c"><svg width="12" height="12"><use href="#k4ef6"/></svg></i><b>/</b><b>C</b><b>o</b><b>m</b><b>m</b><b>o</b><b>n</b><b> </b><b>S</b><b>o</b><b>f</b><b>t</b><b>w</b><b>a</b><b>r</b><b>e</b><b>/</b><b>S</b><b>o</b><b>f</b><b>t</b><b>w</b><b>a</b><b>r</b><b>e</b><b>/</b></div>
<div class="a" style="left:1257px;top:87px;width:17px;height:19px;border:1px solid #b8b8c8;border-radius:2px;background:linear-gradient(#fafafc,#d8d8e4)"></div>
<svg style="left:1260px;top:92px" width="10" height="7" viewBox="0 0 10 7"><path d="M1.5 1.5 L5 5 L8.5 1.5" stroke="#303030" stroke-width="2.2" fill="none"/></svg>
<div class="a " style="left:0px;top:111px;width:624px;height:605px;border:1px solid #7f9db9;background:#fff"></div>
<div class="a " style="left:1px;top:112px;width:622px;height:21px;background:linear-gradient(#fbfbfd 0,#f4f4f8 17px,#e4e3ea 18px,#d3d2dc 20px,#c6c5d0 21px)"></div>
<div class="a t" style="left:14px;top:118px;"><i class="c"><svg width="12" height="12"><use href="#k540d"/></svg></i><i class="c"><svg width="12" height="12"><use href="#k79f0"/></svg></i></div>
<svg style="left:47px;top:120px" width="10" height="6" viewBox="0 0 10 6"><path d="M0.5 5.5 L5 0.5 L9.5 5.5 Z" fill="#aca899"/></svg>
<div class="a " style="left:446px;top:115px;width:1px;height:15px;background:#c9c8d4"></div>
<div class="a " style="left:447px;top:115px;width:1px;height:15px;background:#fff"></div>
<div class="a t" style="left:459px;top:118px;"><i class="c"><svg width="12" height="12"><use href="#k5927"/></svg></i><i class="c"><svg width="12" height="12"><use href="#k5c0f"/></svg></i></div>
<div class="a " style="left:488px;top:115px;width:1px;height:15px;background:#c9c8d4"></div>
<div class="a " style="left:489px;top:115px;width:1px;height:15px;background:#fff"></div>
<div class="a t" style="left:499px;top:118px;"><i class="c"><svg width="12" height="12"><use href="#k4fee"/></svg></i><i class="c"><svg width="12" height="12"><use href="#k6539"/></svg></i><i class="c"><svg width="12" height="12"><use href="#k65e5"/></svg></i><i class="c"><svg width="12" height="12"><use href="#k671f"/></svg></i></div>
<div class="a " style="left:620px;top:115px;width:1px;height:15px;background:#c9c8d4"></div>
<div class="a " style="left:621px;top:115px;width:1px;height:15px;background:#fff"></div>
<div class="a " style="left:22px;top:133px;width:600px;height:17px;background:#dedde3"></div>
<svg style="left:5px;top:133px" width="17" height="16" viewBox="0 0 17 16"><path d="M5 0.5 L10.5 6 L7.5 6 L7.5 12 L12 12 L12 15.5 L4 15.5 L4 6 L0 6 Z" fill="#0010f0"/><path d="M8.2 6 V11.5 H12" stroke="#30e8ff" stroke-width="1.3" fill="none"/><path d="M5.5 2 L9 5.5" stroke="#30e8ff" stroke-width="1"/><rect x="13" y="13.5" width="1.6" height="2" fill="#0010f0"/><rect x="15.2" y="13.5" width="1.6" height="2" fill="#0010f0"/></svg>
<div class="a t" style="left:23px;top:136px;"><i class="c"><svg width="12" height="12"><use href="#k4e0a"/></svg></i><i class="c"><svg width="12" height="12"><use href="#k5c42"/></svg></i><i class="c"><svg width="12" height="12"><use href="#k76ee"/></svg></i><i class="c"><svg width="12" height="12"><use href="#k5f55"/></svg></i></div>
<svg style="left:5px;top:150px" width="16" height="17" viewBox="0 0 16 17"><path d="M0 0.5 L12.5 0.5 L16 4 L16 8 L4 8 L0 4.5 Z" fill="#7a0030"/><path d="M0.5 1 L4 4.5 L4 16 L0.5 12.5 Z" fill="#fff"/><rect x="4" y="4.5" width="12" height="3.5" fill="#b0105a"/><rect x="5" y="5" width="10" height="1" fill="#f070c0"/><path d="M5.5 1.5 L8.5 1.5 L9.5 3 L6.5 3 Z" fill="#d8d000"/><rect x="4" y="8" width="12" height="1" fill="#000"/><rect x="4" y="9" width="12" height="3" fill="#0a4ea0"/><rect x="5" y="9" width="10" height="1" fill="#70c8ff"/><rect x="4" y="12" width="12" height="1" fill="#000"/><rect x="4" y="13" width="12" height="2.5" fill="#0a7a40"/><rect x="5" y="13" width="10" height="1" fill="#40f0a0"/><rect x="4" y="15.5" width="12" height=".8" fill="#000"/><rect x="4.8" y="5" width="1" height="3" fill="#e0d000"/><rect x="4.8" y="9" width="1" height="3" fill="#e0d000"/><rect x="4.8" y="13" width="1" height="2.5" fill="#e0d000"/><path d="M0.5 5 L4 8.5 M0.5 9 L4 12.5 M0.5 13 L4 16.5" stroke="#000" stroke-width="1.2" stroke-dasharray="1.2 .6"/><path d="M10 7 L14.5 11.5 L12 11.5 L12 16 L8 16 L8 11.5 L5.5 11.5 Z" fill="#f8e0a0" stroke="#b07000" stroke-width=".8"/></svg>
<div class="a t" style="left:23px;top:153px;"><b>2</b><b>0</b><b>0</b><b>7</b><b>1</b><b>1</b><b>0</b><b>1</b><b>-</b><b>0</b><b>1</b><b>6</b><b>-</b><b>i</b><b>3</b><b>2</b><b>.</b><b>e</b><b>x</b><b>e</b></div>
<div class="a t" style="left:453px;top:153px;"><b>6</b><b>4</b><b> </b><b>K</b><b>B</b></div>
<div class="a t" style="left:495px;top:153px;"><b>2</b><b>0</b><b>0</b><b>8</b><b>-</b><b>1</b><b>-</b><b>1</b><b>9</b><b> </b><i class="c"><svg width="12" height="12"><use href="#k4e0a"/></svg></i><i class="c"><svg width="12" height="12"><use href="#k5348"/></svg></i><b> </b><b>1</b><b>0</b><b>:</b><b>3</b><b>7</b></div>
<div class="a " style="left:628px;top:111px;width:651px;height:605px;border:1px solid #7f9db9;background:#fff"></div>
<div class="a " style="left:629px;top:112px;width:649px;height:21px;background:linear-gradient(#fbfbfd 0,#f4f4f8 17px,#e4e3ea 18px,#d3d2dc 20px,#c6c5d0 21px)"></div>
<div class="a t" style="left:642px;top:118px;"><i class="c"><svg width="12" height="12"><use href="#k540d"/></svg></i><i class="c"><svg width="12" height="12"><use href="#k79f0"/></svg></i></div>
<svg style="left:675px;top:120px" width="10" height="6" viewBox="0 0 10 6"><path d="M0.5 5.5 L5 0.5 L9.5 5.5 Z" fill="#aca899"/></svg>
<div class="a " style="left:998px;top:115px;width:1px;height:15px;background:#c9c8d4"></div>
<div class="a " style="left:999px;top:115px;width:1px;height:15px;background:#fff"></div>
<div class="a t" style="left:1035px;top:118px;"><i class="c"><svg width="12" height="12"><use href="#k5927"/></svg></i><i class="c"><svg width="12" height="12"><use href="#k5c0f"/></svg></i></div>
<div class="a " style="left:1064px;top:115px;width:1px;height:15px;background:#c9c8d4"></div>
<div class="a " style="left:1065px;top:115px;width:1px;height:15px;background:#fff"></div>
<div class="a t" style="left:1075px;top:118px;"><i class="c"><svg width="12" height="12"><use href="#k4fee"/></svg></i><i class="c"><svg width="12" height="12"><use href="#k6539"/></svg></i><i class="c"><svg width="12" height="12"><use href="#k65e5"/></svg></i><i class="c"><svg width="12" height="12"><use href="#k671f"/></svg></i></div>
<div class="a " style="left:1202px;top:115px;width:1px;height:15px;background:#c9c8d4"></div>
<div class="a " style="left:1203px;top:115px;width:1px;height:15px;background:#fff"></div>
<div class="a t" style="left:1213px;top:118px;"><i class="c"><svg width="12" height="12"><use href="#k5c5e"/></svg></i><i class="c"><svg width="12" height="12"><use href="#k6027"/></svg></i></div>
<div class="a " style="left:1274px;top:115px;width:1px;height:15px;background:#c9c8d4"></div>
<div class="a " style="left:1275px;top:115px;width:1px;height:15px;background:#fff"></div>
<svg style="left:633px;top:133px" width="17" height="16" viewBox="0 0 17 16"><path d="M5 0.5 L10.5 6 L7.5 6 L7.5 12 L12 12 L12 15.5 L4 15.5 L4 6 L0 6 Z" fill="#0010f0"/><path d="M8.2 6 V11.5 H12" stroke="#30e8ff" stroke-width="1.3" fill="none"/><path d="M5.5 2 L9 5.5" stroke="#30e8ff" stroke-width="1"/><rect x="13" y="13.5" width="1.6" height="2" fill="#0010f0"/><rect x="15.2" y="13.5" width="1.6" height="2" fill="#0010f0"/></svg>
<div class="a t" style="left:652px;top:136px;"><i class="c"><svg width="12" height="12"><use href="#k4e0a"/></svg></i><i class="c"><svg width="12" height="12"><use href="#k5c42"/></svg></i><i class="c"><svg width="12" height="12"><use href="#k76ee"/></svg></i><i class="c"><svg width="12" height="12"><use href="#k5f55"/></svg></i></div>
<svg style="left:634px;top:152px" width="16" height="14" viewBox="0 0 16 14"><path d="M0.5 2 Q0.5 0.5 2 0.5 H5.5 L7 2 H12.5 Q13.5 2 13.5 3 V4.5 H2.5 V12.5 H1.5 Q0.5 12.5 0.5 11.5 Z" fill="#fff4b8" stroke="#d8961c"/><path d="M2.5 4.5 H14 Q15.5 4.5 15.5 6 V11.5 Q15.5 12.5 14.5 12.5 H2.5 Z" fill="url(#gfold)" stroke="#cf8a12"/><path d="M3.5 5.6 H14" stroke="#fffce0"/><path d="M3 13.5 H15" stroke="#b0a8c0" stroke-width="1" opacity=".6"/></svg>
<div class="a t" style="left:652px;top:153px;"><b>a</b><b>c</b><b>d</b><b>s</b><b>e</b><b>e</b><b>9</b></div>
<div class="a t" style="left:1053px;top:153px;"><b>0</b></div>
<div class="a t" style="left:1071px;top:153px;"><b>2</b><b>0</b><b>0</b><b>7</b><b>-</b><b>1</b><b>1</b><b>-</b><b>1</b><b>4</b><b> </b><i class="c"><svg width="12" height="12"><use href="#k4e0b"/></svg></i><i class="c"><svg width="12" height="12"><use href="#k5348"/></svg></i><b> </b><b>1</b><b>0</b><b>:</b><b>5</b><b>5</b></div>
<div class="a t" style="left:1209px;top:153px;"><b>d</b><b>r</b><b>w</b><b>-</b><b>r</b><b>w</b><b>-</b><b>r</b><b>w</b><b>-</b></div>
<svg style="left:634px;top:169px" width="16" height="14" viewBox="0 0 16 14"><path d="M0.5 2 Q0.5 0.5 2 0.5 H5.5 L7 2 H12.5 Q13.5 2 13.5 3 V4.5 H2.5 V12.5 H1.5 Q0.5 12.5 0.5 11.5 Z" fill="#fff4b8" stroke="#d8961c"/><path d="M2.5 4.5 H14 Q15.5 4.5 15.5 6 V11.5 Q15.5 12.5 14.5 12.5 H2.5 Z" fill="url(#gfold)" stroke="#cf8a12"/><path d="M3.5 5.6 H14" stroke="#fffce0"/><path d="M3 13.5 H15" stroke="#b0a8c0" stroke-width="1" opacity=".6"/></svg>
<div class="a t" style="left:652px;top:170px;"><b>A</b><b>c</b><b>r</b><b>o</b><b>b</b><b>a</b><b>t</b><b>8</b><b>P</b><b>r</b><b>o</b><b>S</b><b>C</b></div>
<div class="a t" style="left:1053px;top:170px;"><b>0</b></div>
<div class="a t" style="left:1071px;top:170px;"><b>2</b><b>0</b><b>0</b><b>7</b><b>-</b><b>1</b><b>1</b><b>-</b><b>1</b><b>4</b><b> </b><i class="c"><svg width="12" height="12"><use href="#k4e0b"/></svg></i><i class="c"><svg width="12" height="12"><use href="#k5348"/></svg></i><b> </b><b>1</b><b>0</b><b>:</b><b>5</b><b>5</b></div>
<div class="a t" style="left:1209px;top:170px;"><b>d</b><b>r</b><b>w</b><b>-</b><b>r</b><b>w</b><b>-</b><b>r</b><b>w</b><b>-</b></div>
<svg style="left:634px;top:186px" width="16" height="14" viewBox="0 0 16 14"><path d="M0.5 2 Q0.5 0.5 2 0.5 H5.5 L7 2 H12.5 Q13.5 2 13.5 3 V4.5 H2.5 V12.5 H1.5 Q0.5 12.5 0.5 11.5 Z" fill="#fff4b8" stroke="#d8961c"/><path d="M2.5 4.5 H14 Q15.5 4.5 15.5 6 V11.5 Q15.5 12.5 14.5 12.5 H2.5 Z" fill="url(#gfold)" stroke="#cf8a12"/><path d="M3.5 5.6 H14" stroke="#fffce0"/><path d="M3 13.5 H15" stroke="#b0a8c0" stroke-width="1" opacity=".6"/></svg>
<div class="a t" style="left:652px;top:187px;"><b>A</b><b>d</b><b>b</b><b>e</b><b>R</b><b>d</b><b>r</b><b>8</b><b>0</b><b>_</b><b>z</b><b>h</b><b>_</b><b>C</b><b>N</b></div>
<div class="a t" style="left:1053px;top:187px;"><b>0</b></div>
<div class="a t" style="left:1071px;top:187px;"><b>2</b><b>0</b><b>0</b><b>7</b><b>-</b><b>1</b><b>1</b><b>-</b><b>1</b><b>4</b><b> </b><i class="c"><svg width="12" height="12"><use href="#k4e0b"/></svg></i><i class="c"><svg width="12" height="12"><use href="#k5348"/></svg></i><b> </b><b>1</b><b>1</b><b>:</b><b>1</b><b>2</b></div>
<div class="a t" style="left:1209px;top:187px;"><b>d</b><b>r</b><b>w</b><b>-</b><b>r</b><b>w</b><b>-</b><b>r</b><b>w</b><b>-</b></div>
<div class="a " style="left:650px;top:201px;width:627px;height:17px;background:#b6b5c4;outline:1px dotted #404040;outline-offset:-1px"></div>
<div class="a" style="left:634px;top:203px;width:16px;height:14px;opacity:.55;filter:grayscale(.6)">

<svg style="left:0px;top:0px" width="16" height="14" viewBox="0 0 16 14"><path d="M0.5 2 Q0.5 0.5 2 0.5 H5.5 L7 2 H12.5 Q13.5 2 13.5 3 V4.5 H2.5 V12.5 H1.5 Q0.5 12.5 0.5 11.5 Z" fill="#f4ecd0" stroke="#b09060"/><path d="M2.5 4.5 H14 Q15.5 4.5 15.5 6 V11.5 Q15.5 12.5 14.5 12.5 H2.5 Z" fill="#e8dcb0" stroke="#a88850"/></svg>
</div>
<svg style="left:640px;top:207px" width="10" height="10" viewBox="0 0 10 10"><path d="M3.5 .5 H6.5 V3.5 H9.5 V6.5 H6.5 V9.5 H3.5 V6.5 H.5 V3.5 H3.5 Z" fill="#30d030" stroke="#108010" stroke-width="1"/></svg>
<div class="a t" style="left:652px;top:204px;"><b>a</b><b>n</b><b>t</b><b>i</b><b>v</b><b>i</b><b>r</b><b>u</b><b>s</b></div>
<div class="a t" style="left:1053px;top:204px;"><b>0</b></div>
<div class="a t" style="left:1071px;top:204px;"><b>2</b><b>0</b><b>0</b><b>7</b><b>-</b><b>1</b><b>1</b><b>-</b><b>2</b><b>9</b><b> </b><i class="c"><svg width="12" height="12"><use href="#k4e0a"/></svg></i><i class="c"><svg width="12" height="12"><use href="#k5348"/></svg></i><b> </b><b>1</b><b>2</b><b>:</b><b>2</b><b>5</b></div>
<div class="a t" style="left:1209px;top:204px;"><b>d</b><b>r</b><b>w</b><b>-</b><b>r</b><b>w</b><b>-</b><b>r</b><b>w</b><b>-</b></div>
<svg style="left:634px;top:220px" width="16" height="14" viewBox="0 0 16 14"><path d="M0.5 2 Q0.5 0.5 2 0.5 H5.5 L7 2 H12.5 Q13.5 2 13.5 3 V4.5 H2.5 V12.5 H1.5 Q0.5 12.5 0.5 11.5 Z" fill="#fff4b8" stroke="#d8961c"/><path d="M2.5 4.5 H14 Q15.5 4.5 15.5 6 V11.5 Q15.5 12.5 14.5 12.5 H2.5 Z" fill="url(#gfold)" stroke="#cf8a12"/><path d="M3.5 5.6 H14" stroke="#fffce0"/><path d="M3 13.5 H15" stroke="#b0a8c0" stroke-width="1" opacity=".6"/></svg>
<div class="a t" style="left:652px;top:221px;"><b>A</b><b>u</b><b>t</b><b>o</b><b>C</b><b>A</b><b>D</b><b>2</b><b>0</b><b>0</b><b>6</b></div>
<div class="a t" style="left:1053px;top:221px;"><b>0</b></div>
<div class="a t" style="left:1071px;top:221px;"><b>2</b><b>0</b><b>0</b><b>7</b><b>-</b><b>1</b><b>1</b><b>-</b><b>1</b><b>4</b><b> </b><i class="c"><svg width="12" height="12"><use href="#k4e0b"/></svg></i><i class="c"><svg width="12" height="12"><use href="#k5348"/></svg></i><b> </b><b>1</b><b>1</b><b>:</b><b>2</b><b>8</b></div>
<div class="a t" style="left:1209px;top:221px;"><b>d</b><b>r</b><b>w</b><b>-</b><b>r</b><b>w</b><b>-</b><b>r</b><b>w</b><b>-</b></div>
<svg style="left:634px;top:237px" width="16" height="14" viewBox="0 0 16 14"><path d="M0.5 2 Q0.5 0.5 2 0.5 H5.5 L7 2 H12.5 Q13.5 2 13.5 3 V4.5 H2.5 V12.5 H1.5 Q0.5 12.5 0.5 11.5 Z" fill="#fff4b8" stroke="#d8961c"/><path d="M2.5 4.5 H14 Q15.5 4.5 15.5 6 V11.5 Q15.5 12.5 14.5 12.5 H2.5 Z" fill="url(#gfold)" stroke="#cf8a12"/><path d="M3.5 5.6 H14" stroke="#fffce0"/><path d="M3 13.5 H15" stroke="#b0a8c0" stroke-width="1" opacity=".6"/></svg>
<div class="a t" style="left:652px;top:238px;"><b>d</b><b>a</b><b>e</b><b>m</b><b>o</b><b>n</b><b>4</b><b>1</b><b>0</b><b>-</b><b>x</b><b>8</b><b>6</b></div>
<div class="a t" style="left:1053px;top:238px;"><b>0</b></div>
<div class="a t" style="left:1071px;top:238px;"><b>2</b><b>0</b><b>0</b><b>7</b><b>-</b><b>1</b><b>1</b><b>-</b><b>1</b><b>4</b><b> </b><i class="c"><svg width="12" height="12"><use href="#k4e0b"/></svg></i><i class="c"><svg width="12" height="12"><use href="#k5348"/></svg></i><b> </b><b>1</b><b>1</b><b>:</b><b>3</b><b>1</b></div>
<div class="a t" style="left:1209px;top:238px;"><b>d</b><b>r</b><b>w</b><b>-</b><b>r</b><b>w</b><b>-</b><b>r</b><b>w</b><b>-</b></div>
<svg style="left:634px;top:254px" width="16" height="14" viewBox="0 0 16 14"><path d="M0.5 2 Q0.5 0.5 2 0.5 H5.5 L7 2 H12.5 Q13.5 2 13.5 3 V4.5 H2.5 V12.5 H1.5 Q0.5 12.5 0.5 11.5 Z" fill="#fff4b8" stroke="#d8961c"/><path d="M2.5 4.5 H14 Q15.5 4.5 15.5 6 V11.5 Q15.5 12.5 14.5 12.5 H2.5 Z" fill="url(#gfold)" stroke="#cf8a12"/><path d="M3.5 5.6 H14" stroke="#fffce0"/><path d="M3 13.5 H15" stroke="#b0a8c0" stroke-width="1" opacity=".6"/></svg>
<div class="a t" style="left:652px;top:255px;"><b>F</b><b>l</b><b>a</b><b>s</b><b>h</b><b>F</b><b>X</b><b>P</b><b>_</b><b>3</b><b>.</b><b>5</b><b>.</b><b>1</b><b>.</b><b>1</b><b>2</b><b>0</b><b>2</b><b>_</b><b>R</b><b>C</b><b>1</b><b>_</b><b>S</b><b>C</b></div>
<div class="a t" style="left:1053px;top:255px;"><b>0</b></div>
<div class="a t" style="left:1071px;top:255px;"><b>2</b><b>0</b><b>0</b><b>7</b><b>-</b><b>1</b><b>1</b><b>-</b><b>1</b><b>4</b><b> </b><i class="c"><svg width="12" height="12"><use href="#k4e0b"/></svg></i><i class="c"><svg width="12" height="12"><use href="#k5348"/></svg></i><b> </b><b>1</b><b>1</b><b>:</b><b>3</b><b>1</b></div>
<div class="a t" style="left:1209px;top:255px;"><b>d</b><b>r</b><b>w</b><b>-</b><b>r</b><b>w</b><b>-</b><b>r</b><b>w</b><b>-</b></div>
<svg style="left:634px;top:271px" width="16" height="14" viewBox="0 0 16 14"><path d="M0.5 2 Q0.5 0.5 2 0.5 H5.5 L7 2 H12.5 Q13.5 2 13.5 3 V4.5 H2.5 V12.5 H1.5 Q0.5 12.5 0.5 11.5 Z" fill="#fff4b8" stroke="#d8961c"/><path d="M2.5 4.5 H14 Q15.5 4.5 15.5 6 V11.5 Q15.5 12.5 14.5 12.5 H2.5 Z" fill="url(#gfold)" stroke="#cf8a12"/><path d="M3.5 5.6 H14" stroke="#fffce0"/><path d="M3 13.5 H15" stroke="#b0a8c0" stroke-width="1" opacity=".6"/></svg>
<div class="a t" style="left:652px;top:272px;"><b>f</b><b>o</b><b>o</b><b>b</b><b>a</b><b>r</b><b>2</b><b>0</b><b>0</b><b>0</b><b>_</b><b>0</b><b>.</b><b>9</b><b>5</b><b>0</b><b>b</b><b>3</b><b>_</b><b>H</b></div>
<div class="a t" style="left:1053px;top:272px;"><b>0</b></div>
<div class="a t" style="left:1071px;top:272px;"><b>2</b><b>0</b><b>0</b><b>7</b><b>-</b><b>1</b><b>1</b><b>-</b><b>1</b><b>4</b><b> </b><i class="c"><svg width="12" height="12"><use href="#k4e0b"/></svg></i><i class="c"><svg width="12" height="12"><use href="#k5348"/></svg></i><b> </b><b>1</b><b>1</b><b>:</b><b>3</b><b>1</b></div>
<div class="a t" style="left:1209px;top:272px;"><b>d</b><b>r</b><b>w</b><b>-</b><b>r</b><b>w</b><b>-</b><b>r</b><b>w</b><b>-</b></div>
<svg style="left:634px;top:288px" width="16" height="14" viewBox="0 0 16 14"><path d="M0.5 2 Q0.5 0.5 2 0.5 H5.5 L7 2 H12.5 Q13.5 2 13.5 3 V4.5 H2.5 V12.5 H1.5 Q0.5 12.5 0.5 11.5 Z" fill="#fff4b8" stroke="#d8961c"/><path d="M2.5 4.5 H14 Q15.5 4.5 15.5 6 V11.5 Q15.5 12.5 14.5 12.5 H2.5 Z" fill="url(#gfold)" stroke="#cf8a12"/><path d="M3.5 5.6 H14" stroke="#fffce0"/><path d="M3 13.5 H15" stroke="#b0a8c0" stroke-width="1" opacity=".6"/></svg>
<div class="a t" style="left:652px;top:289px;"><b>M</b><b>i</b><b>c</b><b>r</b><b>o</b><b>s</b><b>o</b><b>f</b><b>t</b><i class="c"><svg width="12" height="12"><use href="#k519c"/></svg></i><i class="c"><svg width="12" height="12"><use href="#k5386"/></svg></i><i class="c"><svg width="12" height="12"><use href="#k65e5"/></svg></i><i class="c"><svg width="12" height="12"><use href="#k5386"/></svg></i></div>
<div class="a t" style="left:1053px;top:289px;"><b>0</b></div>
<div class="a t" style="left:1071px;top:289px;"><b>2</b><b>0</b><b>0</b><b>7</b><b>-</b><b>1</b><b>1</b><b>-</b><b>1</b><b>4</b><b> </b><i class="c"><svg width="12" height="12"><use href="#k4e0b"/></svg></i><i class="c"><svg width="12" height="12"><use href="#k5348"/></svg></i><b> </b><b>1</b><b>1</b><b>:</b><b>3</b><b>2</b></div>
<div class="a t" style="left:1209px;top:289px;"><b>d</b><b>r</b><b>w</b><b>-</b><b>r</b><b>w</b><b>-</b><b>r</b><b>w</b><b>-</b></div>
<svg style="left:634px;top:305px" width="16" height="14" viewBox="0 0 16 14"><path d="M0.5 2 Q0.5 0.5 2 0.5 H5.5 L7 2 H12.5 Q13.5 2 13.5 3 V4.5 H2.5 V12.5 H1.5 Q0.5 12.5 0.5 11.5 Z" fill="#fff4b8" stroke="#d8961c"/><path d="M2.5 4.5 H14 Q15.5 4.5 15.5 6 V11.5 Q15.5 12.5 14.5 12.5 H2.5 Z" fill="url(#gfold)" stroke="#cf8a12"/><path d="M3.5 5.6 H14" stroke="#fffce0"/><path d="M3 13.5 H15" stroke="#b0a8c0" stroke-width="1" opacity=".6"/></svg>
<div class="a t" style="left:652px;top:306px;"><b>N</b><b>e</b><b>r</b><b>o</b></div>
<div class="a t" style="left:1053px;top:306px;"><b>0</b></div>
<div class="a t" style="left:1071px;top:306px;"><b>2</b><b>0</b><b>0</b><b>7</b><b>-</b><b>1</b><b>1</b><b>-</b><b>1</b><b>4</b><b> </b><i class="c"><svg width="12" height="12"><use href="#k4e0b"/></svg></i><i class="c"><svg width="12" height="12"><use href="#k5348"/></svg></i><b> </b><b>1</b><b>1</b><b>:</b><b>3</b><b>3</b></div>
<div class="a t" style="left:1209px;top:306px;"><b>d</b><b>r</b><b>w</b><b>-</b><b>r</b><b>w</b><b>-</b><b>r</b><b>w</b><b>-</b></div>
<svg style="left:634px;top:322px" width="16" height="14" viewBox="0 0 16 14"><path d="M0.5 2 Q0.5 0.5 2 0.5 H5.5 L7 2 H12.5 Q13.5 2 13.5 3 V4.5 H2.5 V12.5 H1.5 Q0.5 12.5 0.5 11.5 Z" fill="#fff4b8" stroke="#d8961c"/><path d="M2.5 4.5 H14 Q15.5 4.5 15.5 6 V11.5 Q15.5 12.5 14.5 12.5 H2.5 Z" fill="url(#gfold)" stroke="#cf8a12"/><path d="M3.5 5.6 H14" stroke="#fffce0"/><path d="M3 13.5 H15" stroke="#b0a8c0" stroke-width="1" opacity=".6"/></svg>
<div class="a t" style="left:652px;top:323px;"><b>o</b><b>f</b><b>f</b><b>i</b><b>c</b><b>e</b><b>2</b><b>0</b><b>0</b><b>3</b></div>
<div class="a t" style="left:1053px;top:323px;"><b>0</b></div>
<div class="a t" style="left:1071px;top:323px;"><b>2</b><b>0</b><b>0</b><b>7</b><b>-</b><b>1</b><b>1</b><b>-</b><b>1</b><b>4</b><b> </b><i class="c"><svg width="12" height="12"><use href="#k4e0b"/></svg></i><i class="c"><svg width="12" height="12"><use href="#k5348"/></svg></i><b> </b><b>1</b><b>1</b><b>:</b><b>5</b><b>6</b></div>
<div class="a t" style="left:1209px;top:323px;"><b>d</b><b>r</b><b>w</b><b>-</b><b>r</b><b>w</b><b>-</b><b>r</b><b>w</b><b>-</b></div>
<svg style="left:634px;top:339px" width="16" height="14" viewBox="0 0 16 14"><path d="M0.5 2 Q0.5 0.5 2 0.5 H5.5 L7 2 H12.5 Q13.5 2 13.5 3 V4.5 H2.5 V12.5 H1.5 Q0.5 12.5 0.5 11.5 Z" fill="#fff4b8" stroke="#d8961c"/><path d="M2.5 4.5 H14 Q15.5 4.5 15.5 6 V11.5 Q15.5 12.5 14.5 12.5 H2.5 Z" fill="url(#gfold)" stroke="#cf8a12"/><path d="M3.5 5.6 H14" stroke="#fffce0"/><path d="M3 13.5 H15" stroke="#b0a8c0" stroke-width="1" opacity=".6"/></svg>
<div class="a t" style="left:652px;top:340px;"><b>O</b><b>F</b><b>F</b><b>I</b><b>C</b><b>E</b><b>2</b><b>0</b><b>0</b><b>7</b></div>
<div class="a t" style="left:1053px;top:340px;"><b>0</b></div>
<div class="a t" style="left:1071px;top:340px;"><b>2</b><b>0</b><b>0</b><b>7</b><b>-</b><b>1</b><b>2</b><b>-</b><b>2</b><b>2</b><b> </b><i class="c"><svg width="12" height="12"><use href="#k4e0b"/></svg></i><i class="c"><svg width="12" height="12"><use href="#k5348"/></svg></i><b> </b><b>0</b><b>2</b><b>:</b><b>0</b><b>4</b></div>
<div class="a t" style="left:1209px;top:340px;"><b>d</b><b>r</b><b>w</b><b>-</b><b>r</b><b>w</b><b>-</b><b>r</b><b>w</b><b>-</b></div>
<svg style="left:634px;top:356px" width="16" height="14" viewBox="0 0 16 14"><path d="M0.5 2 Q0.5 0.5 2 0.5 H5.5 L7 2 H12.5 Q13.5 2 13.5 3 V4.5 H2.5 V12.5 H1.5 Q0.5 12.5 0.5 11.5 Z" fill="#fff4b8" stroke="#d8961c"/><path d="M2.5 4.5 H14 Q15.5 4.5 15.5 6 V11.5 Q15.5 12.5 14.5 12.5 H2.5 Z" fill="url(#gfold)" stroke="#cf8a12"/><path d="M3.5 5.6 H14" stroke="#fffce0"/><path d="M3 13.5 H15" stroke="#b0a8c0" stroke-width="1" opacity=".6"/></svg>
<div class="a t" style="left:652px;top:357px;"><b>P</b><b>h</b><b>o</b><b>t</b><b>o</b><b>s</b><b>h</b><b>o</b><b>p</b><b>_</b><b>C</b><b>S</b><b>3</b><b>_</b><b>S</b><b>C</b><b>_</b><b>V</b><b>1</b><b>.</b><b>2</b><b>-</b><b>F</b><b>t</b><b>p</b><b>D</b><b>o</b><b>w</b><b>n</b></div>
<div class="a t" style="left:1053px;top:357px;"><b>0</b></div>
<div class="a t" style="left:1071px;top:357px;"><b>2</b><b>0</b><b>0</b><b>7</b><b>-</b><b>1</b><b>1</b><b>-</b><b>1</b><b>5</b><b> </b><i class="c"><svg width="12" height="12"><use href="#k4e0a"/></svg></i><i class="c"><svg width="12" height="12"><use href="#k5348"/></svg></i><b> </b><b>1</b><b>2</b><b>:</b><b>0</b><b>2</b></div>
<div class="a t" style="left:1209px;top:357px;"><b>d</b><b>r</b><b>w</b><b>-</b><b>r</b><b>w</b><b>-</b><b>r</b><b>w</b><b>-</b></div>
<svg style="left:634px;top:373px" width="16" height="14" viewBox="0 0 16 14"><path d="M0.5 2 Q0.5 0.5 2 0.5 H5.5 L7 2 H12.5 Q13.5 2 13.5 3 V4.5 H2.5 V12.5 H1.5 Q0.5 12.5 0.5 11.5 Z" fill="#fff4b8" stroke="#d8961c"/><path d="M2.5 4.5 H14 Q15.5 4.5 15.5 6 V11.5 Q15.5 12.5 14.5 12.5 H2.5 Z" fill="url(#gfold)" stroke="#cf8a12"/><path d="M3.5 5.6 H14" stroke="#fffce0"/><path d="M3 13.5 H15" stroke="#b0a8c0" stroke-width="1" opacity=".6"/></svg>
<div class="a t" style="left:652px;top:374px;"><b>q</b><b>q</b></div>
<div class="a t" style="left:1053px;top:374px;"><b>0</b></div>
<div class="a t" style="left:1071px;top:374px;"><b>2</b><b>0</b><b>0</b><b>7</b><b>-</b><b>1</b><b>1</b><b>-</b><b>1</b><b>5</b><b> </b><i class="c"><svg width="12" height="12"><use href="#k4e0a"/></svg></i><i class="c"><svg width="12" height="12"><use href="#k5348"/></svg></i><b> </b><b>1</b><b>2</b><b>:</b><b>0</b><b>3</b></div>
<div class="a t" style="left:1209px;top:374px;"><b>d</b><b>r</b><b>w</b><b>-</b><b>r</b><b>w</b><b>-</b><b>r</b><b>w</b><b>-</b></div>
<svg style="left:634px;top:390px" width="16" height="14" viewBox="0 0 16 14"><path d="M0.5 2 Q0.5 0.5 2 0.5 H5.5 L7 2 H12.5 Q13.5 2 13.5 3 V4.5 H2.5 V12.5 H1.5 Q0.5 12.5 0.5 11.5 Z" fill="#fff4b8" stroke="#d8961c"/><path d="M2.5 4.5 H14 Q15.5 4.5 15.5 6 V11.5 Q15.5 12.5 14.5 12.5 H2.5 Z" fill="url(#gfold)" stroke="#cf8a12"/><path d="M3.5 5.6 H14" stroke="#fffce0"/><path d="M3 13.5 H15" stroke="#b0a8c0" stroke-width="1" opacity=".6"/></svg>
<div class="a t" style="left:652px;top:391px;"><b>S</b><b>e</b><b>r</b><b>v</b><b>u</b></div>
<div class="a t" style="left:1053px;top:391px;"><b>0</b></div>
<div class="a t" style="left:1071px;top:391px;"><b>2</b><b>0</b><b>0</b><b>7</b><b>-</b><b>1</b><b>1</b><b>-</b><b>1</b><b>5</b><b> </b><i class="c"><svg width="12" height="12"><use href="#k4e0a"/></svg></i><i class="c"><svg width="12" height="12"><use href="#k5348"/></svg></i><b> </b><b>1</b><b>2</b><b>:</b><b>0</b><b>3</b></div>
<div class="a t" style="left:1209px;top:391px;"><b>d</b><b>r</b><b>w</b><b>-</b><b>r</b><b>w</b><b>-</b><b>r</b><b>w</b><b>-</b></div>
<svg style="left:634px;top:407px" width="16" height="14" viewBox="0 0 16 14"><path d="M0.5 2 Q0.5 0.5 2 0.5 H5.5 L7 2 H12.5 Q13.5 2 13.5 3 V4.5 H2.5 V12.5 H1.5 Q0.5 12.5 0.5 11.5 Z" fill="#fff4b8" stroke="#d8961c"/><path d="M2.5 4.5 H14 Q15.5 4.5 15.5 6 V11.5 Q15.5 12.5 14.5 12.5 H2.5 Z" fill="url(#gfold)" stroke="#cf8a12"/><path d="M3.5 5.6 H14" stroke="#fffce0"/><path d="M3 13.5 H15" stroke="#b0a8c0" stroke-width="1" opacity=".6"/></svg>
<div class="a t" style="left:652px;top:408px;"><b>S</b><b>t</b><b>o</b><b>r</b><b>m</b><b>I</b><b>I</b><b>_</b><b>2</b><b>9</b><b>5</b></div>
<div class="a t" style="left:1053px;top:408px;"><b>0</b></div>
<div class="a t" style="left:1071px;top:408px;"><b>2</b><b>0</b><b>0</b><b>7</b><b>-</b><b>1</b><b>1</b><b>-</b><b>1</b><b>5</b><b> </b><i class="c"><svg width="12" height="12"><use href="#k4e0a"/></svg></i><i class="c"><svg width="12" height="12"><use href="#k5348"/></svg></i><b> </b><b>1</b><b>2</b><b>:</b><b>0</b><b>6</b></div>
<div class="a t" style="left:1209px;top:408px;"><b>d</b><b>r</b><b>w</b><b>-</b><b>r</b><b>w</b><b>-</b><b>r</b><b>w</b><b>-</b></div>
<svg style="left:634px;top:424px" width="16" height="14" viewBox="0 0 16 14"><path d="M0.5 2 Q0.5 0.5 2 0.5 H5.5 L7 2 H12.5 Q13.5 2 13.5 3 V4.5 H2.5 V12.5 H1.5 Q0.5 12.5 0.5 11.5 Z" fill="#fff4b8" stroke="#d8961c"/><path d="M2.5 4.5 H14 Q15.5 4.5 15.5 6 V11.5 Q15.5 12.5 14.5 12.5 H2.5 Z" fill="url(#gfold)" stroke="#cf8a12"/><path d="M3.5 5.6 H14" stroke="#fffce0"/><path d="M3 13.5 H15" stroke="#b0a8c0" stroke-width="1" opacity=".6"/></svg>
<div class="a t" style="left:652px;top:425px;"><b>U</b><b>e</b><b>d</b><b>i</b><b>t</b><b>1</b><b>3</b><b>.</b><b>2</b><b>0</b></div>
<div class="a t" style="left:1053px;top:425px;"><b>0</b></div>
<div class="a t" style="left:1071px;top:425px;"><b>2</b><b>0</b><b>0</b><b>7</b><b>-</b><b>1</b><b>1</b><b>-</b><b>1</b><b>5</b><b> </b><i class="c"><svg width="12" height="12"><use href="#k4e0a"/></svg></i><i class="c"><svg width="12" height="12"><use href="#k5348"/></svg></i><b> </b><b>1</b><b>2</b><b>:</b><b>0</b><b>7</b></div>
<div class="a t" style="left:1209px;top:425px;"><b>d</b><b>r</b><b>w</b><b>-</b><b>r</b><b>w</b><b>-</b><b>r</b><b>w</b><b>-</b></div>
<svg style="left:634px;top:441px" width="16" height="14" viewBox="0 0 16 14"><path d="M0.5 2 Q0.5 0.5 2 0.5 H5.5 L7 2 H12.5 Q13.5 2 13.5 3 V4.5 H2.5 V12.5 H1.5 Q0.5 12.5 0.5 11.5 Z" fill="#fff4b8" stroke="#d8961c"/><path d="M2.5 4.5 H14 Q15.5 4.5 15.5 6 V11.5 Q15.5 12.5 14.5 12.5 H2.5 Z" fill="url(#gfold)" stroke="#cf8a12"/><path d="M3.5 5.6 H14" stroke="#fffce0"/><path d="M3 13.5 H15" stroke="#b0a8c0" stroke-width="1" opacity=".6"/></svg>
<div class="a t" style="left:652px;top:442px;"><b>U</b><b>l</b><b>t</b><b>r</b><b>a</b><b>I</b><b>S</b><b>O</b><b>-</b><b>v</b><b>8</b><b>.</b><b>6</b><b>.</b><b>3</b><b>.</b><b>2</b><b>0</b><b>5</b><b>6</b></div>
<div class="a t" style="left:1053px;top:442px;"><b>0</b></div>
<div class="a t" style="left:1071px;top:442px;"><b>2</b><b>0</b><b>0</b><b>7</b><b>-</b><b>1</b><b>1</b><b>-</b><b>1</b><b>5</b><b> </b><i class="c"><svg width="12" height="12"><use href="#k4e0a"/></svg></i><i class="c"><svg width="12" height="12"><use href="#k5348"/></svg></i><b> </b><b>1</b><b>2</b><b>:</b><b>0</b><b>7</b></div>
<div class="a t" style="left:1209px;top:442px;"><b>d</b><b>r</b><b>w</b><b>-</b><b>r</b><b>w</b><b>-</b><b>r</b><b>w</b><b>-</b></div>
<svg style="left:634px;top:458px" width="16" height="14" viewBox="0 0 16 14"><path d="M0.5 2 Q0.5 0.5 2 0.5 H5.5 L7 2 H12.5 Q13.5 2 13.5 3 V4.5 H2.5 V12.5 H1.5 Q0.5 12.5 0.5 11.5 Z" fill="#fff4b8" stroke="#d8961c"/><path d="M2.5 4.5 H14 Q15.5 4.5 15.5 6 V11.5 Q15.5 12.5 14.5 12.5 H2.5 Z" fill="url(#gfold)" stroke="#cf8a12"/><path d="M3.5 5.6 H14" stroke="#fffce0"/><path d="M3 13.5 H15" stroke="#b0a8c0" stroke-width="1" opacity=".6"/></svg>
<div class="a t" style="left:652px;top:459px;"><b>u</b><b>n</b><b>i</b><b>s</b><b>p</b><b>i</b><b>m</b><b>5</b><b>_</b><b>b</b><b>5</b><b>0</b><b>9</b><b>1</b></div>
<div class="a t" style="left:1053px;top:459px;"><b>0</b></div>
<div class="a t" style="left:1071px;top:459px;"><b>2</b><b>0</b><b>0</b><b>7</b><b>-</b><b>1</b><b>1</b><b>-</b><b>1</b><b>5</b><b> </b><i class="c"><svg width="12" height="12"><use href="#k4e0a"/></svg></i><i class="c"><svg width="12" height="12"><use href="#k5348"/></svg></i><b> </b><b>1</b><b>2</b><b>:</b><b>0</b><b>7</b></div>
<div class="a t" style="left:1209px;top:459px;"><b>d</b><b>r</b><b>w</b><b>-</b><b>r</b><b>w</b><b>-</b><b>r</b><b>w</b><b>-</b></div>
<svg style="left:634px;top:475px" width="16" height="14" viewBox="0 0 16 14"><path d="M0.5 2 Q0.5 0.5 2 0.5 H5.5 L7 2 H12.5 Q13.5 2 13.5 3 V4.5 H2.5 V12.5 H1.5 Q0.5 12.5 0.5 11.5 Z" fill="#fff4b8" stroke="#d8961c"/><path d="M2.5 4.5 H14 Q15.5 4.5 15.5 6 V11.5 Q15.5 12.5 14.5 12.5 H2.5 Z" fill="url(#gfold)" stroke="#cf8a12"/><path d="M3.5 5.6 H14" stroke="#fffce0"/><path d="M3 13.5 H15" stroke="#b0a8c0" stroke-width="1" opacity=".6"/></svg>
<div class="a t" style="left:652px;top:476px;"><b>W</b><b>L</b><b>M</b><b>e</b><b>s</b><b>s</b><b>e</b><b>n</b><b>g</b><b>e</b><b>r</b><b>c</b><b>n</b><b>_</b><b>v</b><b>8</b><b>.</b><b>5</b></div>
<div class="a t" style="left:1053px;top:476px;"><b>0</b></div>
<div class="a t" style="left:1071px;top:476px;"><b>2</b><b>0</b><b>0</b><b>7</b><b>-</b><b>1</b><b>1</b><b>-</b><b>1</b><b>5</b><b> </b><i class="c"><svg width="12" height="12"><use href="#k4e0a"/></svg></i><i class="c"><svg width="12" height="12"><use href="#k5348"/></svg></i><b> </b><b>1</b><b>2</b><b>:</b><b>0</b><b>8</b></div>
<div class="a t" style="left:1209px;top:476px;"><b>d</b><b>r</b><b>w</b><b>-</b><b>r</b><b>w</b><b>-</b><b>r</b><b>w</b><b>-</b></div>
<svg style="left:634px;top:492px" width="16" height="14" viewBox="0 0 16 14"><path d="M0.5 2 Q0.5 0.5 2 0.5 H5.5 L7 2 H12.5 Q13.5 2 13.5 3 V4.5 H2.5 V12.5 H1.5 Q0.5 12.5 0.5 11.5 Z" fill="#fff4b8" stroke="#d8961c"/><path d="M2.5 4.5 H14 Q15.5 4.5 15.5 6 V11.5 Q15.5 12.5 14.5 12.5 H2.5 Z" fill="url(#gfold)" stroke="#cf8a12"/><path d="M3.5 5.6 H14" stroke="#fffce0"/><path d="M3 13.5 H15" stroke="#b0a8c0" stroke-width="1" opacity=".6"/></svg>
<div class="a t" style="left:652px;top:493px;"><i class="c"><svg width="12" height="12"><use href="#k91d1"/></svg></i><i class="c"><svg width="12" height="12"><use href="#k5c71"/></svg></i><i class="c"><svg width="12" height="12"><use href="#k8bcd"/></svg></i><i class="c"><svg width="12" height="12"><use href="#k9738"/></svg></i><b>2</b><b>0</b><b>0</b><b>7</b><b>S</b><b>P</b><b>1</b></div>
<div class="a t" style="left:1053px;top:493px;"><b>0</b></div>
<div class="a t" style="left:1071px;top:493px;"><b>2</b><b>0</b><b>0</b><b>7</b><b>-</b><b>1</b><b>1</b><b>-</b><b>1</b><b>5</b><b> </b><i class="c"><svg width="12" height="12"><use href="#k4e0a"/></svg></i><i class="c"><svg width="12" height="12"><use href="#k5348"/></svg></i><b> </b><b>1</b><b>2</b><b>:</b><b>1</b><b>9</b></div>
<div class="a t" style="left:1209px;top:493px;"><b>d</b><b>r</b><b>w</b><b>-</b><b>r</b><b>w</b><b>-</b><b>r</b><b>w</b><b>-</b></div>
<svg style="left:634px;top:507px" width="16" height="17" viewBox="0 0 16 17"><path d="M0 0.5 L12.5 0.5 L16 4 L16 8 L4 8 L0 4.5 Z" fill="#7a0030"/><path d="M0.5 1 L4 4.5 L4 16 L0.5 12.5 Z" fill="#fff"/><rect x="4" y="4.5" width="12" height="3.5" fill="#b0105a"/><rect x="5" y="5" width="10" height="1" fill="#f070c0"/><path d="M5.5 1.5 L8.5 1.5 L9.5 3 L6.5 3 Z" fill="#d8d000"/><rect x="4" y="8" width="12" height="1" fill="#000"/><rect x="4" y="9" width="12" height="3" fill="#0a4ea0"/><rect x="5" y="9" width="10" height="1" fill="#70c8ff"/><rect x="4" y="12" width="12" height="1" fill="#000"/><rect x="4" y="13" width="12" height="2.5" fill="#0a7a40"/><rect x="5" y="13" width="10" height="1" fill="#40f0a0"/><rect x="4" y="15.5" width="12" height=".8" fill="#000"/><rect x="4.8" y="5" width="1" height="3" fill="#e0d000"/><rect x="4.8" y="9" width="1" height="3" fill="#e0d000"/><rect x="4.8" y="13" width="1" height="2.5" fill="#e0d000"/><path d="M0.5 5 L4 8.5 M0.5 9 L4 12.5 M0.5 13 L4 16.5" stroke="#000" stroke-width="1.2" stroke-dasharray="1.2 .6"/></svg>
<div class="a t" style="left:652px;top:510px;"><b>A</b><b>U</b><b>T</b><b>O</b><b>c</b><b>a</b><b>d</b><b>2</b><b>0</b><b>0</b><b>8</b><b>s</b><b>c</b><b>-</b><b>l</b><b>e</b><b>e</b><b>j</b><b>u</b><b>n</b><b>e</b><b>.</b><b>r</b><b>a</b><b>r</b></div>
<div class="a t" style="left:1005px;top:510px;"><b>8</b><b>0</b><b>8</b><b>.</b><b>5</b><b>2</b><b> </b><b>M</b><b>B</b></div>
<div class="a t" style="left:1071px;top:510px;"><b>2</b><b>0</b><b>0</b><b>7</b><b>-</b><b>1</b><b>1</b><b>-</b><b>2</b><b>8</b><b> </b><i class="c"><svg width="12" height="12"><use href="#k4e0b"/></svg></i><i class="c"><svg width="12" height="12"><use href="#k5348"/></svg></i><b> </b><b>0</b><b>8</b><b>:</b><b>4</b><b>8</b></div>
<div class="a t" style="left:1209px;top:510px;"><b>-</b><b>r</b><b>w</b><b>-</b><b>r</b><b>w</b><b>-</b><b>r</b><b>w</b><b>-</b></div>
<svg style="left:634px;top:524px" width="16" height="17" viewBox="0 0 16 17"><path d="M0 0.5 L12.5 0.5 L16 4 L16 8 L4 8 L0 4.5 Z" fill="#7a0030"/><path d="M0.5 1 L4 4.5 L4 16 L0.5 12.5 Z" fill="#fff"/><rect x="4" y="4.5" width="12" height="3.5" fill="#b0105a"/><rect x="5" y="5" width="10" height="1" fill="#f070c0"/><path d="M5.5 1.5 L8.5 1.5 L9.5 3 L6.5 3 Z" fill="#d8d000"/><rect x="4" y="8" width="12" height="1" fill="#000"/><rect x="4" y="9" width="12" height="3" fill="#0a4ea0"/><rect x="5" y="9" width="10" height="1" fill="#70c8ff"/><rect x="4" y="12" width="12" height="1" fill="#000"/><rect x="4" y="13" width="12" height="2.5" fill="#0a7a40"/><rect x="5" y="13" width="10" height="1" fill="#40f0a0"/><rect x="4" y="15.5" width="12" height=".8" fill="#000"/><rect x="4.8" y="5" width="1" height="3" fill="#e0d000"/><rect x="4.8" y="9" width="1" height="3" fill="#e0d000"/><rect x="4.8" y="13" width="1" height="2.5" fill="#e0d000"/><path d="M0.5 5 L4 8.5 M0.5 9 L4 12.5 M0.5 13 L4 16.5" stroke="#000" stroke-width="1.2" stroke-dasharray="1.2 .6"/></svg>
<div class="a t" style="left:652px;top:527px;"><b>B</b><b>i</b><b>t</b><b>C</b><b>o</b><b>m</b><b>e</b><b>t</b><b>_</b><b>0</b><b>.</b><b>9</b><b>4</b><b>.</b><b>r</b><b>a</b><b>r</b></div>
<div class="a t" style="left:1017px;top:527px;"><b>7</b><b>.</b><b>8</b><b>4</b><b> </b><b>M</b><b>B</b></div>
<div class="a t" style="left:1071px;top:527px;"><b>2</b><b>0</b><b>0</b><b>7</b><b>-</b><b>1</b><b>1</b><b>-</b><b>2</b><b>9</b><b> </b><i class="c"><svg width="12" height="12"><use href="#k4e0a"/></svg></i><i class="c"><svg width="12" height="12"><use href="#k5348"/></svg></i><b> </b><b>1</b><b>2</b><b>:</b><b>2</b><b>5</b></div>
<div class="a t" style="left:1209px;top:527px;"><b>-</b><b>r</b><b>w</b><b>-</b><b>r</b><b>w</b><b>-</b><b>r</b><b>w</b><b>-</b></div>
<svg style="left:634px;top:542px" width="16" height="14" viewBox="0 0 16 14"><rect x="0" y="0" width="16" height="14" fill="#101010"/><rect x="0" y="0" width="14.6" height="12.6" fill="#a4a4a4"/><rect x="1.6" y="1.6" width="13" height="11" fill="#fff"/><rect x="2" y="2" width="12.4" height="2.2" fill="#0000d0"/><rect x="9.6" y="2.6" width="1.2" height="1.2" fill="#fff"/><rect x="11.2" y="2.6" width="1.2" height="1.2" fill="#fff"/><rect x="12.8" y="2.6" width="1.2" height="1.2" fill="#fff"/></svg>
<div class="a t" style="left:652px;top:544px;"><b>I</b><b>E</b><b>7</b><b>-</b><b>W</b><b>i</b><b>n</b><b>d</b><b>o</b><b>w</b><b>s</b><b>S</b><b>e</b><b>r</b><b>v</b><b>e</b><b>r</b><b>2</b><b>0</b><b>0</b><b>3</b><b>-</b><b>x</b><b>8</b><b>6</b><b>-</b><b>c</b><b>h</b><b>s</b><b>.</b><b>e</b><b>x</b><b>e</b></div>
<div class="a t" style="left:1011px;top:544px;"><b>1</b><b>3</b><b>.</b><b>9</b><b>9</b><b> </b><b>M</b><b>B</b></div>
<div class="a t" style="left:1071px;top:544px;"><b>2</b><b>0</b><b>0</b><b>7</b><b>-</b><b>1</b><b>1</b><b>-</b><b>1</b><b>5</b><b> </b><i class="c"><svg width="12" height="12"><use href="#k4e0a"/></svg></i><i class="c"><svg width="12" height="12"><use href="#k5348"/></svg></i><b> </b><b>1</b><b>2</b><b>:</b><b>2</b><b>0</b></div>
<div class="a t" style="left:1209px;top:544px;"><b>-</b><b>r</b><b>w</b><b>-</b><b>r</b><b>w</b><b>-</b><b>r</b><b>w</b><b>-</b></div>
<svg style="left:634px;top:559px" width="16" height="14" viewBox="0 0 16 14"><rect x="0" y="0" width="16" height="14" fill="#101010"/><rect x="0" y="0" width="14.6" height="12.6" fill="#a4a4a4"/><rect x="1.6" y="1.6" width="13" height="11" fill="#fff"/><rect x="2" y="2" width="12.4" height="2.2" fill="#0000d0"/><rect x="9.6" y="2.6" width="1.2" height="1.2" fill="#fff"/><rect x="11.2" y="2.6" width="1.2" height="1.2" fill="#fff"/><rect x="12.8" y="2.6" width="1.2" height="1.2" fill="#fff"/></svg>
<div class="a t" style="left:652px;top:561px;"><b>I</b><b>E</b><b>7</b><b>-</b><b>W</b><b>i</b><b>n</b><b>d</b><b>o</b><b>w</b><b>s</b><b>X</b><b>P</b><b>-</b><b>x</b><b>8</b><b>6</b><b>-</b><b>c</b><b>h</b><b>s</b><b>.</b><b>e</b><b>x</b><b>e</b></div>
<div class="a t" style="left:1011px;top:561px;"><b>1</b><b>4</b><b>.</b><b>0</b><b>2</b><b> </b><b>M</b><b>B</b></div>
<div class="a t" style="left:1071px;top:561px;"><b>2</b><b>0</b><b>0</b><b>7</b><b>-</b><b>1</b><b>1</b><b>-</b><b>1</b><b>5</b><b> </b><i class="c"><svg width="12" height="12"><use href="#k4e0a"/></svg></i><i class="c"><svg width="12" height="12"><use href="#k5348"/></svg></i><b> </b><b>1</b><b>2</b><b>:</b><b>2</b><b>0</b></div>
<div class="a t" style="left:1209px;top:561px;"><b>-</b><b>r</b><b>w</b><b>-</b><b>r</b><b>w</b><b>-</b><b>r</b><b>w</b><b>-</b></div>
<svg style="left:634px;top:575px" width="16" height="17" viewBox="0 0 16 17"><path d="M0 0.5 L12.5 0.5 L16 4 L16 8 L4 8 L0 4.5 Z" fill="#7a0030"/><path d="M0.5 1 L4 4.5 L4 16 L0.5 12.5 Z" fill="#fff"/><rect x="4" y="4.5" width="12" height="3.5" fill="#b0105a"/><rect x="5" y="5" width="10" height="1" fill="#f070c0"/><path d="M5.5 1.5 L8.5 1.5 L9.5 3 L6.5 3 Z" fill="#d8d000"/><rect x="4" y="8" width="12" height="1" fill="#000"/><rect x="4" y="9" width="12" height="3" fill="#0a4ea0"/><rect x="5" y="9" width="10" height="1" fill="#70c8ff"/><rect x="4" y="12" width="12" height="1" fill="#000"/><rect x="4" y="13" width="12" height="2.5" fill="#0a7a40"/><rect x="5" y="13" width="10" height="1" fill="#40f0a0"/><rect x="4" y="15.5" width="12" height=".8" fill="#000"/><rect x="4.8" y="5" width="1" height="3" fill="#e0d000"/><rect x="4.8" y="9" width="1" height="3" fill="#e0d000"/><rect x="4.8" y="13" width="1" height="2.5" fill="#e0d000"/><path d="M0.5 5 L4 8.5 M0.5 9 L4 12.5 M0.5 13 L4 16.5" stroke="#000" stroke-width="1.2" stroke-dasharray="1.2 .6"/></svg>
<div class="a t" style="left:652px;top:578px;"><b>K</b><b>m</b><b>p</b><b>l</b><b>a</b><b>y</b><b>e</b><b>r</b><b>-</b><b>v</b><b>2</b><b>.</b><b>9</b><b>.</b><b>3</b><b>.</b><b>1</b><b>3</b><b>8</b><b>7</b><b>.</b><b>r</b><b>a</b><b>r</b></div>
<div class="a t" style="left:1011px;top:578px;"><b>1</b><b>3</b><b>.</b><b>6</b><b>3</b><b> </b><b>M</b><b>B</b></div>
<div class="a t" style="left:1071px;top:578px;"><b>2</b><b>0</b><b>0</b><b>7</b><b>-</b><b>1</b><b>1</b><b>-</b><b>2</b><b>9</b><b> </b><i class="c"><svg width="12" height="12"><use href="#k4e0a"/></svg></i><i class="c"><svg width="12" height="12"><use href="#k5348"/></svg></i><b> </b><b>1</b><b>2</b><b>:</b><b>2</b><b>7</b></div>
<div class="a t" style="left:1209px;top:578px;"><b>-</b><b>r</b><b>w</b><b>-</b><b>r</b><b>w</b><b>-</b><b>r</b><b>w</b><b>-</b></div>
<svg style="left:634px;top:593px" width="16" height="14" viewBox="0 0 16 14"><rect x="0" y="0" width="16" height="14" fill="#101010"/><rect x="0" y="0" width="14.6" height="12.6" fill="#a4a4a4"/><rect x="1.6" y="1.6" width="13" height="11" fill="#fff"/><rect x="2" y="2" width="12.4" height="2.2" fill="#0000d0"/><rect x="9.6" y="2.6" width="1.2" height="1.2" fill="#fff"/><rect x="11.2" y="2.6" width="1.2" height="1.2" fill="#fff"/><rect x="12.8" y="2.6" width="1.2" height="1.2" fill="#fff"/></svg>
<div class="a t" style="left:652px;top:595px;"><b>m</b><b>a</b><b>x</b><b>t</b><b>h</b><b>o</b><b>n</b><b>2</b><b>.</b><b>e</b><b>x</b><b>e</b></div>
<div class="a t" style="left:1017px;top:595px;"><b>2</b><b>.</b><b>1</b><b>3</b><b> </b><b>M</b><b>B</b></div>
<div class="a t" style="left:1071px;top:595px;"><b>2</b><b>0</b><b>0</b><b>7</b><b>-</b><b>1</b><b>1</b><b>-</b><b>1</b><b>5</b><b> </b><i class="c"><svg width="12" height="12"><use href="#k4e0a"/></svg></i><i class="c"><svg width="12" height="12"><use href="#k5348"/></svg></i><b> </b><b>1</b><b>2</b><b>:</b><b>2</b><b>0</b></div>
<div class="a t" style="left:1209px;top:595px;"><b>-</b><b>r</b><b>w</b><b>-</b><b>r</b><b>w</b><b>-</b><b>r</b><b>w</b><b>-</b></div>
<svg style="left:634px;top:609px" width="16" height="17" viewBox="0 0 16 17"><path d="M0 0.5 L12.5 0.5 L16 4 L16 8 L4 8 L0 4.5 Z" fill="#7a0030"/><path d="M0.5 1 L4 4.5 L4 16 L0.5 12.5 Z" fill="#fff"/><rect x="4" y="4.5" width="12" height="3.5" fill="#b0105a"/><rect x="5" y="5" width="10" height="1" fill="#f070c0"/><path d="M5.5 1.5 L8.5 1.5 L9.5 3 L6.5 3 Z" fill="#d8d000"/><rect x="4" y="8" width="12" height="1" fill="#000"/><rect x="4" y="9" width="12" height="3" fill="#0a4ea0"/><rect x="5" y="9" width="10" height="1" fill="#70c8ff"/><rect x="4" y="12" width="12" height="1" fill="#000"/><rect x="4" y="13" width="12" height="2.5" fill="#0a7a40"/><rect x="5" y="13" width="10" height="1" fill="#40f0a0"/><rect x="4" y="15.5" width="12" height=".8" fill="#000"/><rect x="4.8" y="5" width="1" height="3" fill="#e0d000"/><rect x="4.8" y="9" width="1" height="3" fill="#e0d000"/><rect x="4.8" y="13" width="1" height="2.5" fill="#e0d000"/><path d="M0.5 5 L4 8.5 M0.5 9 L4 12.5 M0.5 13 L4 16.5" stroke="#000" stroke-width="1.2" stroke-dasharray="1.2 .6"/></svg>
<div class="a t" style="left:652px;top:612px;"><b>m</b><b>x</b><b>_</b><b>2</b><b>.</b><b>0</b><b>.</b><b>5</b><b>.</b><b>7</b><b>8</b><b>4</b><b>5</b><b>c</b><b>n</b><b>.</b><b>r</b><b>a</b><b>r</b></div>
<div class="a t" style="left:1017px;top:612px;"><b>2</b><b>.</b><b>1</b><b>3</b><b> </b><b>M</b><b>B</b></div>
<div class="a t" style="left:1071px;top:612px;"><b>2</b><b>0</b><b>0</b><b>7</b><b>-</b><b>1</b><b>1</b><b>-</b><b>1</b><b>5</b><b> </b><i class="c"><svg width="12" height="12"><use href="#k4e0a"/></svg></i><i class="c"><svg width="12" height="12"><use href="#k5348"/></svg></i><b> </b><b>1</b><b>2</b><b>:</b><b>2</b><b>0</b></div>
<div class="a t" style="left:1209px;top:612px;"><b>-</b><b>r</b><b>w</b><b>-</b><b>r</b><b>w</b><b>-</b><b>r</b><b>w</b><b>-</b></div>
<svg style="left:634px;top:626px" width="16" height="17" viewBox="0 0 16 17"><path d="M0 0.5 L12.5 0.5 L16 4 L16 8 L4 8 L0 4.5 Z" fill="#7a0030"/><path d="M0.5 1 L4 4.5 L4 16 L0.5 12.5 Z" fill="#fff"/><rect x="4" y="4.5" width="12" height="3.5" fill="#b0105a"/><rect x="5" y="5" width="10" height="1" fill="#f070c0"/><path d="M5.5 1.5 L8.5 1.5 L9.5 3 L6.5 3 Z" fill="#d8d000"/><rect x="4" y="8" width="12" height="1" fill="#000"/><rect x="4" y="9" width="12" height="3" fill="#0a4ea0"/><rect x="5" y="9" width="10" height="1" fill="#70c8ff"/><rect x="4" y="12" width="12" height="1" fill="#000"/><rect x="4" y="13" width="12" height="2.5" fill="#0a7a40"/><rect x="5" y="13" width="10" height="1" fill="#40f0a0"/><rect x="4" y="15.5" width="12" height=".8" fill="#000"/><rect x="4.8" y="5" width="1" height="3" fill="#e0d000"/><rect x="4.8" y="9" width="1" height="3" fill="#e0d000"/><rect x="4.8" y="13" width="1" height="2.5" fill="#e0d000"/><path d="M0.5 5 L4 8.5 M0.5 9 L4 12.5 M0.5 13 L4 16.5" stroke="#000" stroke-width="1.2" stroke-dasharray="1.2 .6"/></svg>
<div class="a t" style="left:652px;top:629px;"><b>N</b><b>e</b><b>r</b><b>o</b><b>.</b><b>8</b><b>.</b><b>U</b><b>l</b><b>t</b><b>r</b><b>a</b><b>.</b><b>E</b><b>d</b><b>i</b><b>t</b><b>i</b><b>o</b><b>n</b><b>8</b><b>0</b><b>3</b><b>.</b><b>i</b><b>s</b><b>o</b></div>
<div class="a t" style="left:1017px;top:629px;"><b>1</b><b>.</b><b>1</b><b>5</b><b> </b><b>G</b><b>B</b></div>
<div class="a t" style="left:1071px;top:629px;"><b>2</b><b>0</b><b>0</b><b>7</b><b>-</b><b>1</b><b>2</b><b>-</b><b>1</b><b>8</b><b> </b><i class="c"><svg width="12" height="12"><use href="#k4e0b"/></svg></i><i class="c"><svg width="12" height="12"><use href="#k5348"/></svg></i><b> </b><b>1</b><b>1</b><b>:</b><b>3</b><b>0</b></div>
<div class="a t" style="left:1209px;top:629px;"><b>-</b><b>r</b><b>w</b><b>-</b><b>r</b><b>w</b><b>-</b><b>r</b><b>w</b><b>-</b></div>
<svg style="left:634px;top:643px" width="16" height="17" viewBox="0 0 16 17"><path d="M0 0.5 L12.5 0.5 L16 4 L16 8 L4 8 L0 4.5 Z" fill="#7a0030"/><path d="M0.5 1 L4 4.5 L4 16 L0.5 12.5 Z" fill="#fff"/><rect x="4" y="4.5" width="12" height="3.5" fill="#b0105a"/><rect x="5" y="5" width="10" height="1" fill="#f070c0"/><path d="M5.5 1.5 L8.5 1.5 L9.5 3 L6.5 3 Z" fill="#d8d000"/><rect x="4" y="8" width="12" height="1" fill="#000"/><rect x="4" y="9" width="12" height="3" fill="#0a4ea0"/><rect x="5" y="9" width="10" height="1" fill="#70c8ff"/><rect x="4" y="12" width="12" height="1" fill="#000"/><rect x="4" y="13" width="12" height="2.5" fill="#0a7a40"/><rect x="5" y="13" width="10" height="1" fill="#40f0a0"/><rect x="4" y="15.5" width="12" height=".8" fill="#000"/><rect x="4.8" y="5" width="1" height="3" fill="#e0d000"/><rect x="4.8" y="9" width="1" height="3" fill="#e0d000"/><rect x="4.8" y="13" width="1" height="2.5" fill="#e0d000"/><path d="M0.5 5 L4 8.5 M0.5 9 L4 12.5 M0.5 13 L4 16.5" stroke="#000" stroke-width="1.2" stroke-dasharray="1.2 .6"/></svg>
<div class="a t" style="left:652px;top:646px;"><b>s</b><b>r</b><b>8</b><b>1</b><b>.</b><b>r</b><b>a</b><b>r</b></div>
<div class="a t" style="left:1011px;top:646px;"><b>1</b><b>4</b><b>.</b><b>7</b><b>2</b><b> </b><b>M</b><b>B</b></div>
<div class="a t" style="left:1071px;top:646px;"><b>2</b><b>0</b><b>0</b><b>7</b><b>-</b><b>1</b><b>1</b><b>-</b><b>2</b><b>9</b><b> </b><i class="c"><svg width="12" height="12"><use href="#k4e0a"/></svg></i><i class="c"><svg width="12" height="12"><use href="#k5348"/></svg></i><b> </b><b>1</b><b>2</b><b>:</b><b>2</b><b>8</b></div>
<div class="a t" style="left:1209px;top:646px;"><b>-</b><b>r</b><b>w</b><b>-</b><b>r</b><b>w</b><b>-</b><b>r</b><b>w</b><b>-</b></div>
<svg style="left:634px;top:661px" width="16" height="14" viewBox="0 0 16 14"><rect x="0" y="0" width="16" height="14" fill="#101010"/><rect x="0" y="0" width="14.6" height="12.6" fill="#a4a4a4"/><rect x="1.6" y="1.6" width="13" height="11" fill="#fff"/><rect x="2" y="2" width="12.4" height="2.2" fill="#0000d0"/><rect x="9.6" y="2.6" width="1.2" height="1.2" fill="#fff"/><rect x="11.2" y="2.6" width="1.2" height="1.2" fill="#fff"/><rect x="12.8" y="2.6" width="1.2" height="1.2" fill="#fff"/></svg>
<div class="a t" style="left:652px;top:663px;"><b>T</b><b>h</b><b>u</b><b>n</b><b>d</b><b>e</b><b>r</b><b>.</b><b>v</b><b>5</b><b>.</b><b>7</b><b>.</b><b>3</b><b>.</b><b>3</b><b>8</b><b>9</b><b>.</b><b>N</b><b>o</b><b>A</b><b>D</b><b>.</b><b>e</b><b>x</b><b>e</b></div>
<div class="a t" style="left:1017px;top:663px;"><b>5</b><b>.</b><b>1</b><b>8</b><b> </b><b>M</b><b>B</b></div>
<div class="a t" style="left:1071px;top:663px;"><b>2</b><b>0</b><b>0</b><b>7</b><b>-</b><b>1</b><b>1</b><b>-</b><b>1</b><b>5</b><b> </b><i class="c"><svg width="12" height="12"><use href="#k4e0a"/></svg></i><i class="c"><svg width="12" height="12"><use href="#k5348"/></svg></i><b> </b><b>1</b><b>2</b><b>:</b><b>2</b><b>1</b></div>
<div class="a t" style="left:1209px;top:663px;"><b>-</b><b>r</b><b>w</b><b>-</b><b>r</b><b>w</b><b>-</b><b>r</b><b>w</b><b>-</b></div>
<svg style="left:634px;top:678px" width="16" height="14" viewBox="0 0 16 14"><rect x="0" y="0" width="16" height="14" fill="#101010"/><rect x="0" y="0" width="14.6" height="12.6" fill="#a4a4a4"/><rect x="1.6" y="1.6" width="13" height="11" fill="#fff"/><rect x="2" y="2" width="12.4" height="2.2" fill="#0000d0"/><rect x="9.6" y="2.6" width="1.2" height="1.2" fill="#fff"/><rect x="11.2" y="2.6" width="1.2" height="1.2" fill="#fff"/><rect x="12.8" y="2.6" width="1.2" height="1.2" fill="#fff"/></svg>
<div class="a t" style="left:652px;top:680px;"><b>w</b><b>r</b><b>a</b><b>r</b><b>3</b><b>7</b><b>1</b><b>s</b><b>c</b><b>_</b><b>c</b><b>n</b><b>-</b><b>0</b><b>9</b><b>2</b><b>5</b><b>.</b><b>e</b><b>x</b><b>e</b></div>
<div class="a t" style="left:1017px;top:680px;"><b>1</b><b>.</b><b>1</b><b>8</b><b> </b><b>M</b><b>B</b></div>
<div class="a t" style="left:1071px;top:680px;"><b>2</b><b>0</b><b>0</b><b>7</b><b>-</b><b>1</b><b>1</b><b>-</b><b>1</b><b>5</b><b> </b><i class="c"><svg width="12" height="12"><use href="#k4e0a"/></svg></i><i class="c"><svg width="12" height="12"><use href="#k5348"/></svg></i><b> </b><b>1</b><b>2</b><b>:</b><b>2</b><b>1</b></div>
<div class="a t" style="left:1209px;top:680px;"><b>-</b><b>r</b><b>w</b><b>-</b><b>r</b><b>w</b><b>-</b><b>r</b><b>w</b><b>-</b></div>
<div class="a " style="left:0px;top:716px;width:1280px;height:33px;background:#dddce2"></div>
<div class="a " style="left:0px;top:716px;width:624px;height:1px;background:#a0a0a8"></div>
<div class="a " style="left:0px;top:716px;width:1px;height:32px;background:#a0a0a8"></div>
<div class="a " style="left:624px;top:716px;width:1px;height:32px;background:#fff"></div>
<div class="a " style="left:1px;top:733px;width:623px;height:1px;background:#fff"></div>
<div class="a " style="left:1px;top:734px;width:1px;height:14px;background:#fff"></div>
<div class="a " style="left:2px;top:747px;width:622px;height:1px;background:#9a9aa2"></div>
<div class="a t" style="left:170px;top:721px;"><b>0</b><b> </b><i class="c"><svg width="12" height="12"><use href="#k4e2a"/></svg></i><i class="c"><svg width="12" height="12"><use href="#k6587"/></svg></i><i class="c"><svg width="12" height="12"><use href="#k4ef6"/></svg></i><i class="c"><svg width="12" height="12"><use href="#k5939"/></svg></i><b>,</b><b> </b><b>1</b><b> </b><i class="c"><svg width="12" height="12"><use href="#k4e2a"/></svg></i><i class="c"><svg width="12" height="12"><use href="#k6587"/></svg></i><i class="c"><svg width="12" height="12"><use href="#k4ef6"/></svg></i><b>,</b><b> </b><i class="c"><svg width="12" height="12"><use href="#k5171"/></svg></i><b> </b><b>1</b><b> </b><b>6</b><b>4</b><b> </b><b>K</b><b>B</b><b> </b><b>(</b><b>2</b><b>.</b><b>0</b><b>4</b><b> </b><b>G</b><b>B</b><b> </b><i class="c"><svg width="12" height="12"><use href="#k7a7a"/></svg></i><i class="c"><svg width="12" height="12"><use href="#k95f2"/></svg></i><b>)</b></div>
<div class="a t" style="left:248px;top:736px;"><b>D</b><b>:</b><b>\</b><i class="c"><svg width="12" height="12"><use href="#k6211"/></svg></i><i class="c"><svg width="12" height="12"><use href="#k7684"/></svg></i><i class="c"><svg width="12" height="12"><use href="#k6587"/></svg></i><i class="c"><svg width="12" height="12"><use href="#k6863"/></svg></i><b>\</b><b>a</b><b>n</b><b>t</b><b>i</b><b>v</b><b>i</b><b>r</b><b>u</b><b>s</b></div>
<div class="a " style="left:628px;top:716px;width:651px;height:1px;background:#a0a0a8"></div>
<div class="a " style="left:628px;top:716px;width:1px;height:32px;background:#a0a0a8"></div>
<div class="a " style="left:629px;top:733px;width:650px;height:1px;background:#fff"></div>
<div class="a " style="left:629px;top:734px;width:1px;height:14px;background:#fff"></div>
<div class="a " style="left:630px;top:734px;width:649px;height:13px;background:#ffff00"></div>
<div class="a " style="left:630px;top:747px;width:649px;height:1px;background:#9a9aa2"></div>
<div class="a t" style="left:797px;top:721px;"><b>2</b><b>1</b><b> </b><i class="c"><svg width="12" height="12"><use href="#k4e2a"/></svg></i><i class="c"><svg width="12" height="12"><use href="#k6587"/></svg></i><i class="c"><svg width="12" height="12"><use href="#k4ef6"/></svg></i><i class="c"><svg width="12" height="12"><use href="#k5939"/></svg></i><b>,</b><b> </b><b>1</b><b>1</b><b> </b><i class="c"><svg width="12" height="12"><use href="#k4e2a"/></svg></i><i class="c"><svg width="12" height="12"><use href="#k6587"/></svg></i><i class="c"><svg width="12" height="12"><use href="#k4ef6"/></svg></i><b>,</b><b> </b><i class="c"><svg width="12" height="12"><use href="#k5171"/></svg></i><b> </b><b>3</b><b>2</b><b> </b><i class="c"><svg width="12" height="12"><use href="#k4e2a"/></svg></i><b>,</b><b> </b><i class="c"><svg width="12" height="12"><use href="#k5df2"/></svg></i><i class="c"><svg width="12" height="12"><use href="#k9009"/></svg></i><b> </b><b>1</b><b> </b><i class="c"><svg width="12" height="12"><use href="#k4e2a"/></svg></i><b> </b><b>(</b><b>0</b><b> </b><i class="c"><svg width="12" height="12"><use href="#k5b57"/></svg></i><i class="c"><svg width="12" height="12"><use href="#k8282"/></svg></i><b>)</b></div>
<div class="a t" style="left:908px;top:736px;"><b>n</b><b>b</b><b>c</b><b>l</b><b>u</b><b>b</b><b>.</b><b>v</b><b>i</b><b>c</b><b>p</b><b>.</b><b>n</b><b>e</b><b>t</b></div>
<div class="a " style="left:0px;top:748px;width:1280px;height:1px;background:#fff"></div>
<div class="a " style="left:0px;top:749px;width:1280px;height:3px;background:#dddce2"></div>
<div class="a " style="left:0px;top:752px;width:640px;height:220px;border:1px solid #7f9db9;background:#fff"></div>
<div class="a " style="left:1px;top:753px;width:638px;height:21px;background:linear-gradient(#fbfbfd 0,#f4f4f8 17px,#e4e3ea 18px,#d3d2dc 20px,#c6c5d0 21px)"></div>
<div class="a t" style="left:11px;top:759px;"><i class="c"><svg width="12" height="12"><use href="#k540d"/></svg></i><i class="c"><svg width="12" height="12"><use href="#k79f0"/></svg></i></div>
<div class="a " style="left:634px;top:755px;width:1px;height:15px;background:#c9c8d4"></div>
<div class="a " style="left:635px;top:755px;width:1px;height:15px;background:#fff"></div>
<svg style="left:8px;top:776px" width="12" height="13" viewBox="0 0 12 13"><path d="M5 0 H6.5 V6 H11.5 L6 12.5 L0.5 6 H5 Z" fill="#10e010" stroke="#109010" stroke-width=".7"/><path d="M6.8 1 V6" stroke="#90a090" stroke-width=".8"/></svg>
<svg style="left:25px;top:775px" width="16" height="14" viewBox="0 0 16 14"><rect x="0" y="0" width="16" height="14" fill="#101010"/><rect x="0" y="0" width="14.6" height="12.6" fill="#a4a4a4"/><rect x="1.6" y="1.6" width="13" height="11" fill="#fff"/><rect x="2" y="2" width="12.4" height="2.2" fill="#0000d0"/><rect x="9.6" y="2.6" width="1.2" height="1.2" fill="#fff"/><rect x="11.2" y="2.6" width="1.2" height="1.2" fill="#fff"/><rect x="12.8" y="2.6" width="1.2" height="1.2" fill="#fff"/></svg>
<div class="a t" style="left:43px;top:777px;"><b>/</b><i class="c"><svg width="12" height="12"><use href="#k5e38"/></svg></i><i class="c"><svg width="12" height="12"><use href="#k7528"/></svg></i><i class="c"><svg width="12" height="12"><use href="#k8f6f"/></svg></i><i class="c"><svg width="12" height="12"><use href="#k4ef6"/></svg></i><b>/</b><b>C</b><b>o</b><b>m</b><b>m</b><b>o</b><b>n</b><b> </b><b>S</b><b>o</b><b>f</b><b>t</b><b>w</b><b>a</b><b>r</b><b>e</b><b>/</b><b>S</b><b>o</b><b>f</b><b>t</b><b>w</b><b>a</b><b>r</b><b>e</b><b>/</b><b>a</b><b>n</b><b>t</b><b>i</b><b>v</b><b>i</b><b>r</b><b>u</b><b>s</b><b>/</b><b>2</b><b>0</b><b>0</b><b>7</b><b>1</b><b>1</b><b>0</b><b>1</b><b>-</b><b>0</b><b>1</b><b>6</b><b>-</b><b>i</b><b>3</b><b>2</b><b>.</b><b>e</b><b>x</b><b>e</b></div>
<svg style="left:8px;top:793px" width="12" height="13" viewBox="0 0 12 13"><path d="M5 0 H6.5 V6 H11.5 L6 12.5 L0.5 6 H5 Z" fill="#10e010" stroke="#109010" stroke-width=".7"/><path d="M6.8 1 V6" stroke="#90a090" stroke-width=".8"/></svg>
<svg style="left:25px;top:791px" width="16" height="17" viewBox="0 0 16 17"><path d="M0 0.5 L12.5 0.5 L16 4 L16 8 L4 8 L0 4.5 Z" fill="#7a0030"/><path d="M0.5 1 L4 4.5 L4 16 L0.5 12.5 Z" fill="#fff"/><rect x="4" y="4.5" width="12" height="3.5" fill="#b0105a"/><rect x="5" y="5" width="10" height="1" fill="#f070c0"/><path d="M5.5 1.5 L8.5 1.5 L9.5 3 L6.5 3 Z" fill="#d8d000"/><rect x="4" y="8" width="12" height="1" fill="#000"/><rect x="4" y="9" width="12" height="3" fill="#0a4ea0"/><rect x="5" y="9" width="10" height="1" fill="#70c8ff"/><rect x="4" y="12" width="12" height="1" fill="#000"/><rect x="4" y="13" width="12" height="2.5" fill="#0a7a40"/><rect x="5" y="13" width="10" height="1" fill="#40f0a0"/><rect x="4" y="15.5" width="12" height=".8" fill="#000"/><rect x="4.8" y="5" width="1" height="3" fill="#e0d000"/><rect x="4.8" y="9" width="1" height="3" fill="#e0d000"/><rect x="4.8" y="13" width="1" height="2.5" fill="#e0d000"/><path d="M0.5 5 L4 8.5 M0.5 9 L4 12.5 M0.5 13 L4 16.5" stroke="#000" stroke-width="1.2" stroke-dasharray="1.2 .6"/></svg>
<div class="a t" style="left:43px;top:794px;"><b>/</b><i class="c"><svg width="12" height="12"><use href="#k5e38"/></svg></i><i class="c"><svg width="12" height="12"><use href="#k7528"/></svg></i><i class="c"><svg width="12" height="12"><use href="#k8f6f"/></svg></i><i class="c"><svg width="12" height="12"><use href="#k4ef6"/></svg></i><b>/</b><b>C</b><b>o</b><b>m</b><b>m</b><b>o</b><b>n</b><b> </b><b>S</b><b>o</b><b>f</b><b>t</b><b>w</b><b>a</b><b>r</b><b>e</b><b>/</b><b>S</b><b>o</b><b>f</b><b>t</b><b>w</b><b>a</b><b>r</b><b>e</b><b>/</b><b>a</b><b>n</b><b>t</b><b>i</b><b>v</b><b>i</b><b>r</b><b>u</b><b>s</b><b>/</b><b>3</b><b>6</b><b>0</b><b>s</b><b>a</b><b>f</b><b>e</b><b>-</b><b>c</b><b>r</b><b>s</b><b>k</b><b>y</b><b>_</b><b>v</b><b>3</b><b>.</b><b>6</b><b>.</b><b>4</b><b>.</b><b>r</b><b>a</b><b>r</b></div>
<svg style="left:8px;top:810px" width="12" height="13" viewBox="0 0 12 13"><path d="M5 0 H6.5 V6 H11.5 L6 12.5 L0.5 6 H5 Z" fill="#10e010" stroke="#109010" stroke-width=".7"/><path d="M6.8 1 V6" stroke="#90a090" stroke-width=".8"/></svg>
<svg style="left:25px;top:808px" width="16" height="17" viewBox="0 0 16 17"><path d="M0 0.5 L12.5 0.5 L16 4 L16 8 L4 8 L0 4.5 Z" fill="#7a0030"/><path d="M0.5 1 L4 4.5 L4 16 L0.5 12.5 Z" fill="#fff"/><rect x="4" y="4.5" width="12" height="3.5" fill="#b0105a"/><rect x="5" y="5" width="10" height="1" fill="#f070c0"/><path d="M5.5 1.5 L8.5 1.5 L9.5 3 L6.5 3 Z" fill="#d8d000"/><rect x="4" y="8" width="12" height="1" fill="#000"/><rect x="4" y="9" width="12" height="3" fill="#0a4ea0"/><rect x="5" y="9" width="10" height="1" fill="#70c8ff"/><rect x="4" y="12" width="12" height="1" fill="#000"/><rect x="4" y="13" width="12" height="2.5" fill="#0a7a40"/><rect x="5" y="13" width="10" height="1" fill="#40f0a0"/><rect x="4" y="15.5" width="12" height=".8" fill="#000"/><rect x="4.8" y="5" width="1" height="3" fill="#e0d000"/><rect x="4.8" y="9" width="1" height="3" fill="#e0d000"/><rect x="4.8" y="13" width="1" height="2.5" fill="#e0d000"/><path d="M0.5 5 L4 8.5 M0.5 9 L4 12.5 M0.5 13 L4 16.5" stroke="#000" stroke-width="1.2" stroke-dasharray="1.2 .6"/></svg>
<div class="a t" style="left:43px;top:811px;"><b>/</b><i class="c"><svg width="12" height="12"><use href="#k5e38"/></svg></i><i class="c"><svg width="12" height="12"><use href="#k7528"/></svg></i><i class="c"><svg width="12" height="12"><use href="#k8f6f"/></svg></i><i class="c"><svg width="12" height="12"><use href="#k4ef6"/></svg></i><b>/</b><b>C</b><b>o</b><b>m</b><b>m</b><b>o</b><b>n</b><b> </b><b>S</b><b>o</b><b>f</b><b>t</b><b>w</b><b>a</b><b>r</b><b>e</b><b>/</b><b>S</b><b>o</b><b>f</b><b>t</b><b>w</b><b>a</b><b>r</b><b>e</b><b>/</b><b>a</b><b>n</b><b>t</b><b>i</b><b>v</b><b>i</b><b>r</b><b>u</b><b>s</b><b>/</b><b>S</b><b>A</b><b>V</b><b>.</b><b>1</b><b>0</b><b>.</b><b>1</b><b>.</b><b>6</b><b>.</b><b>6</b><b>0</b><b>0</b><b>0</b><b>.</b><b>C</b><b>H</b><b>S</b><b>.</b><b>r</b><b>a</b><b>r</b></div>
<svg style="left:8px;top:827px" width="12" height="13" viewBox="0 0 12 13"><path d="M5 0 H6.5 V6 H11.5 L6 12.5 L0.5 6 H5 Z" fill="#10e010" stroke="#109010" stroke-width=".7"/><path d="M6.8 1 V6" stroke="#90a090" stroke-width=".8"/></svg>
<svg style="left:25px;top:825px" width="16" height="17" viewBox="0 0 16 17"><path d="M0 0.5 L12.5 0.5 L16 4 L16 8 L4 8 L0 4.5 Z" fill="#7a0030"/><path d="M0.5 1 L4 4.5 L4 16 L0.5 12.5 Z" fill="#fff"/><rect x="4" y="4.5" width="12" height="3.5" fill="#b0105a"/><rect x="5" y="5" width="10" height="1" fill="#f070c0"/><path d="M5.5 1.5 L8.5 1.5 L9.5 3 L6.5 3 Z" fill="#d8d000"/><rect x="4" y="8" width="12" height="1" fill="#000"/><rect x="4" y="9" width="12" height="3" fill="#0a4ea0"/><rect x="5" y="9" width="10" height="1" fill="#70c8ff"/><rect x="4" y="12" width="12" height="1" fill="#000"/><rect x="4" y="13" width="12" height="2.5" fill="#0a7a40"/><rect x="5" y="13" width="10" height="1" fill="#40f0a0"/><rect x="4" y="15.5" width="12" height=".8" fill="#000"/><rect x="4.8" y="5" width="1" height="3" fill="#e0d000"/><rect x="4.8" y="9" width="1" height="3" fill="#e0d000"/><rect x="4.8" y="13" width="1" height="2.5" fill="#e0d000"/><path d="M0.5 5 L4 8.5 M0.5 9 L4 12.5 M0.5 13 L4 16.5" stroke="#000" stroke-width="1.2" stroke-dasharray="1.2 .6"/></svg>
<div class="a t" style="left:43px;top:828px;"><b>/</b><i class="c"><svg width="12" height="12"><use href="#k5e38"/></svg></i><i class="c"><svg width="12" height="12"><use href="#k7528"/></svg></i><i class="c"><svg width="12" height="12"><use href="#k8f6f"/></svg></i><i class="c"><svg width="12" height="12"><use href="#k4ef6"/></svg></i><b>/</b><b>C</b><b>o</b><b>m</b><b>m</b><b>o</b><b>n</b><b> </b><b>S</b><b>o</b><b>f</b><b>t</b><b>w</b><b>a</b><b>r</b><b>e</b><b>/</b><b>S</b><b>o</b><b>f</b><b>t</b><b>w</b><b>a</b><b>r</b><b>e</b><b>/</b><b>a</b><b>n</b><b>t</b><b>i</b><b>v</b><b>i</b><b>r</b><b>u</b><b>s</b><b>/</b><b>S</b><b>E</b><b>P</b><i class="c"><svg width="12" height="12"><use href="#k7b80"/></svg></i><i class="c"><svg width="12" height="12"><use href="#k4f53"/></svg></i><i class="c"><svg width="12" height="12"><use href="#k4e2d"/></svg></i><i class="c"><svg width="12" height="12"><use href="#k6587"/></svg></i><i class="c"><svg width="12" height="12"><use href="#k7248"/></svg></i><b> </b><b>1</b><b>1</b><b>.</b><b>0</b><b>.</b><b>7</b><b>8</b><b>0</b><b>.</b><b>1</b><b>1</b><b>0</b><b>9</b><b>.</b><b>r</b><b>a</b><b>r</b></div>
<svg style="left:8px;top:844px" width="12" height="13" viewBox="0 0 12 13"><path d="M5 0 H6.5 V6 H11.5 L6 12.5 L0.5 6 H5 Z" fill="#10e010" stroke="#109010" stroke-width=".7"/><path d="M6.8 1 V6" stroke="#90a090" stroke-width=".8"/></svg>
<svg style="left:25px;top:842px" width="16" height="17" viewBox="0 0 16 17"><path d="M0 0.5 L12.5 0.5 L16 4 L16 8 L4 8 L0 4.5 Z" fill="#7a0030"/><path d="M0.5 1 L4 4.5 L4 16 L0.5 12.5 Z" fill="#fff"/><rect x="4" y="4.5" width="12" height="3.5" fill="#b0105a"/><rect x="5" y="5" width="10" height="1" fill="#f070c0"/><path d="M5.5 1.5 L8.5 1.5 L9.5 3 L6.5 3 Z" fill="#d8d000"/><rect x="4" y="8" width="12" height="1" fill="#000"/><rect x="4" y="9" width="12" height="3" fill="#0a4ea0"/><rect x="5" y="9" width="10" height="1" fill="#70c8ff"/><rect x="4" y="12" width="12" height="1" fill="#000"/><rect x="4" y="13" width="12" height="2.5" fill="#0a7a40"/><rect x="5" y="13" width="10" height="1" fill="#40f0a0"/><rect x="4" y="15.5" width="12" height=".8" fill="#000"/><rect x="4.8" y="5" width="1" height="3" fill="#e0d000"/><rect x="4.8" y="9" width="1" height="3" fill="#e0d000"/><rect x="4.8" y="13" width="1" height="2.5" fill="#e0d000"/><path d="M0.5 5 L4 8.5 M0.5 9 L4 12.5 M0.5 13 L4 16.5" stroke="#000" stroke-width="1.2" stroke-dasharray="1.2 .6"/></svg>
<div class="a t" style="left:43px;top:845px;"><b>/</b><i class="c"><svg width="12" height="12"><use href="#k5e38"/></svg></i><i class="c"><svg width="12" height="12"><use href="#k7528"/></svg></i><i class="c"><svg width="12" height="12"><use href="#k8f6f"/></svg></i><i class="c"><svg width="12" height="12"><use href="#k4ef6"/></svg></i><b>/</b><b>C</b><b>o</b><b>m</b><b>m</b><b>o</b><b>n</b><b> </b><b>S</b><b>o</b><b>f</b><b>t</b><b>w</b><b>a</b><b>r</b><b>e</b><b>/</b><b>S</b><b>o</b><b>f</b><b>t</b><b>w</b><b>a</b><b>r</b><b>e</b><b>/</b><b>a</b><b>n</b><b>t</b><b>i</b><b>v</b><b>i</b><b>r</b><b>u</b><b>s</b><b>/</b><b>S</b><b>y</b><b>m</b><b>a</b><b>n</b><b>t</b><b>e</b><b>c</b><b>A</b><b>n</b><b>t</b><b>i</b><b>v</b><b>i</b><b>r</b><b>u</b><b>s</b><b>C</b><b>o</b><b>r</b><b>p</b><b>o</b><b>r</b><b>a</b><b>t</b><b>e</b><b>E</b><b>d</b><b>i</b><b>t</b><b>i</b><b>o</b><b>n</b><b>-</b><b>v</b><b>1</b><b>0</b><b>.</b><b>2</b><b>.</b><b>2</b><b>7</b><b>6</b><b>.</b><b>v</b><b>i</b><b>s</b><b>t</b><b>a</b><b>.</b><b>r</b><b>a</b><b>r</b></div>
<div class="a " style="left:1px;top:954px;width:638px;height:16px;background:linear-gradient(#f3f3f7,#fefefe)"></div>
<div class="a" style="left:2px;top:954px;width:17px;height:16px;border:1px solid #a4a4b4;border-radius:2px;background:linear-gradient(#fdfdfe,#dcdce6 60%,#cbcbd8)"></div>
<svg style="left:5px;top:958px" width="10" height="10" viewBox="0 0 10 10"><path d="M5.5 1.5 L2 5 L5.5 8.5" stroke="#303030" stroke-width="2.2" fill="none"/></svg>
<div class="a" style="left:20px;top:954px;width:291px;height:16px;border:1px solid #a4a4b4;border-radius:2px;background:linear-gradient(#fdfdfe,#e2e2ea 50%,#cfcfdc)"></div>
<svg style="left:161px;top:958px" width="8" height="8" viewBox="0 0 8 8"><path d="M.5 0 V8 M2.5 0 V8 M4.5 0 V8 M6.5 0 V8" stroke="#9c9cac" stroke-width="1"/></svg>
<div class="a" style="left:621px;top:954px;width:17px;height:16px;border:1px solid #a4a4b4;border-radius:2px;background:linear-gradient(#fdfdfe,#dcdce6 60%,#cbcbd8)"></div>
<svg style="left:624px;top:958px" width="10" height="10" viewBox="0 0 10 10"><path d="M2 1.5 L5.5 5 L2 8.5" stroke="#303030" stroke-width="2.2" fill="none"/></svg>
<div class="a " style="left:643px;top:752px;width:636px;height:220px;border:1px solid #9a9aa2;border-right-color:#c8c8d0;border-bottom-color:#9a9aa2;background:#fff"></div>
<div class="a t" style="left:647px;top:755px;color:#000"><b><svg width="6" height="12"><path d="M2 0h3v1h-2v8h2v1h-3z"/></svg></b><i class="c"><svg width="12" height="12"><use href="#k53f3"/></svg></i><b><svg width="6" height="12"><path d="M1 0h3v10h-3v-1h2v-8h-2z"/></svg></b><b> </b><b>P</b><b>A</b><b>S</b><b>V</b></div>
<div class="a t" style="left:647px;top:767px;color:#008000"><b><svg width="6" height="12"><path d="M2 0h3v1h-2v8h2v1h-3z"/></svg></b><i class="c"><svg width="12" height="12"><use href="#k53f3"/></svg></i><b><svg width="6" height="12"><path d="M1 0h3v10h-3v-1h2v-8h-2z"/></svg></b><b> </b><b>2</b><b>2</b><b>7</b><b> </b><b>E</b><b>n</b><b>t</b><b>e</b><b>r</b><b>i</b><b>n</b><b>g</b><b> </b><b>P</b><b>a</b><b>s</b><b>s</b><b>i</b><b>v</b><b>e</b><b> </b><b>M</b><b>o</b><b>d</b><b>e</b><b> </b><b>(</b><b>6</b><b>1</b><b>,</b><b>1</b><b>9</b><b>1</b><b>,</b><b>5</b><b>5</b><b>,</b><b>7</b><b>1</b><b>,</b><b>1</b><b>5</b><b>,</b><b>2</b><b>2</b><b>6</b><b>)</b></div>
<div class="a t" style="left:647px;top:779px;color:#008000"><b><svg width="6" height="12"><path d="M2 0h3v1h-2v8h2v1h-3z"/></svg></b><i class="c"><svg width="12" height="12"><use href="#k53f3"/></svg></i><b><svg width="6" height="12"><path d="M1 0h3v10h-3v-1h2v-8h-2z"/></svg></b><b> </b><i class="c"><svg width="12" height="12"><use href="#k6b63"/></svg></i><i class="c"><svg width="12" height="12"><use href="#k5728"/></svg></i><i class="c"><svg width="12" height="12"><use href="#k6253"/></svg></i><i class="c"><svg width="12" height="12"><use href="#k5f00"/></svg></i><i class="c"><svg width="12" height="12"><use href="#k6570"/></svg></i><i class="c"><svg width="12" height="12"><use href="#k636e"/></svg></i><i class="c"><svg width="12" height="12"><use href="#k8fde"/></svg></i><i class="c"><svg width="12" height="12"><use href="#k63a5"/></svg></i><b> </b><b>I</b><b>P</b><b>:</b><b> </b><b>6</b><b>1</b><b>.</b><b>1</b><b>9</b><b>1</b><b>.</b><b>5</b><b>5</b><b>.</b><b>7</b><b>1</b><b> </b><i class="c"><svg width="12" height="12"><use href="#k7aef"/></svg></i><i class="c"><svg width="12" height="12"><use href="#k53e3"/></svg></i><b>:</b><b> </b><b>4</b><b>0</b><b>6</b><b>6</b></div>
<div class="a t" style="left:647px;top:791px;color:#000"><b><svg width="6" height="12"><path d="M2 0h3v1h-2v8h2v1h-3z"/></svg></b><i class="c"><svg width="12" height="12"><use href="#k53f3"/></svg></i><b><svg width="6" height="12"><path d="M1 0h3v10h-3v-1h2v-8h-2z"/></svg></b><b> </b><b>L</b><b>I</b><b>S</b><b>T</b><b> </b><b>-</b><b>a</b><b>l</b></div>
<div class="a t" style="left:647px;top:803px;color:#008000"><b><svg width="6" height="12"><path d="M2 0h3v1h-2v8h2v1h-3z"/></svg></b><i class="c"><svg width="12" height="12"><use href="#k53f3"/></svg></i><b><svg width="6" height="12"><path d="M1 0h3v10h-3v-1h2v-8h-2z"/></svg></b><b> </b><b>1</b><b>5</b><b>0</b><b> </b><b>O</b><b>p</b><b>e</b><b>n</b><b>i</b><b>n</b><b>g</b><b> </b><b>A</b><b>S</b><b>C</b><b>I</b><b>I</b><b> </b><b>m</b><b>o</b><b>d</b><b>e</b><b> </b><b>d</b><b>a</b><b>t</b><b>a</b><b> </b><b>c</b><b>o</b><b>n</b><b>n</b><b>e</b><b>c</b><b>t</b><b>i</b><b>o</b><b>n</b><b> </b><b>f</b><b>o</b><b>r</b><b> </b><b>/</b><b>b</b><b>i</b><b>n</b><b>/</b><b>l</b><b>s</b><b>.</b></div>
<div class="a t" style="left:647px;top:815px;color:#008000"><b><svg width="6" height="12"><path d="M2 0h3v1h-2v8h2v1h-3z"/></svg></b><i class="c"><svg width="12" height="12"><use href="#k53f3"/></svg></i><b><svg width="6" height="12"><path d="M1 0h3v10h-3v-1h2v-8h-2z"/></svg></b><b> </b><b>2</b><b>2</b><b>6</b><b> </b><b>T</b><b>r</b><b>a</b><b>n</b><b>s</b><b>f</b><b>e</b><b>r</b><b> </b><b>c</b><b>o</b><b>m</b><b>p</b><b>l</b><b>e</b><b>t</b><b>e</b><b>.</b></div>
<div class="a t" style="left:647px;top:827px;color:#800000"><b><svg width="6" height="12"><path d="M2 0h3v1h-2v8h2v1h-3z"/></svg></b><i class="c"><svg width="12" height="12"><use href="#k53f3"/></svg></i><b><svg width="6" height="12"><path d="M1 0h3v10h-3v-1h2v-8h-2z"/></svg></b><b> </b><i class="c"><svg width="12" height="12"><use href="#k5217"/></svg></i><i class="c"><svg width="12" height="12"><use href="#k8868"/></svg></i><i class="c"><svg width="12" height="12"><use href="#k5b8c"/></svg></i><i class="c"><svg width="12" height="12"><use href="#k6210"/></svg></i><b>:</b><b> </b><b>5</b><b>3</b><b>9</b><b> </b><i class="c"><svg width="12" height="12"><use href="#k5b57"/></svg></i><i class="c"><svg width="12" height="12"><use href="#k8282"/></svg></i><b> </b><i class="c"><svg width="12" height="12"><use href="#k4e8e"/></svg></i><b> </b><b>0</b><b>.</b><b>3</b><b>9</b><b> </b><i class="c"><svg width="12" height="12"><use href="#k79d2"/></svg></i><b> </b><b>(</b><b>1</b><b>.</b><b>3</b><b> </b><b>K</b><b>B</b><b>/</b><i class="c"><svg width="12" height="12"><use href="#k79d2"/></svg></i><b>)</b></div>
<div class="a t" style="left:647px;top:839px;color:#000"><b><svg width="6" height="12"><path d="M2 0h3v1h-2v8h2v1h-3z"/></svg></b><i class="c"><svg width="12" height="12"><use href="#k53f3"/></svg></i><b><svg width="6" height="12"><path d="M1 0h3v10h-3v-1h2v-8h-2z"/></svg></b><b> </b><b>C</b><b>W</b><b>D</b><b> </b><b>/</b><i class="c"><svg width="12" height="12"><use href="#k5e38"/></svg></i><i class="c"><svg width="12" height="12"><use href="#k7528"/></svg></i><i class="c"><svg width="12" height="12"><use href="#k8f6f"/></svg></i><i class="c"><svg width="12" height="12"><use href="#k4ef6"/></svg></i><b>/</b><b>C</b><b>o</b><b>m</b><b>m</b><b>o</b><b>n</b><b> </b><b>S</b><b>o</b><b>f</b><b>t</b><b>w</b><b>a</b><b>r</b><b>e</b><b>/</b><b>S</b><b>o</b><b>f</b><b>t</b><b>w</b><b>a</b><b>r</b><b>e</b><b>/</b><b>a</b><b>n</b><b>t</b><b>i</b><b>v</b><b>i</b><b>r</b><b>u</b><b>s</b></div>
<div class="a t" style="left:647px;top:851px;color:#008000"><b><svg width="6" height="12"><path d="M2 0h3v1h-2v8h2v1h-3z"/></svg></b><i class="c"><svg width="12" height="12"><use href="#k53f3"/></svg></i><b><svg width="6" height="12"><path d="M1 0h3v10h-3v-1h2v-8h-2z"/></svg></b><b> </b><b>2</b><b>5</b><b>0</b><b> </b><b>D</b><b>i</b><b>r</b><b>e</b><b>c</b><b>t</b><b>o</b><b>r</b><b>y</b><b> </b><b>c</b><b>h</b><b>a</b><b>n</b><b>g</b><b>e</b><b>d</b><b> </b><b>t</b><b>o</b><b> </b><b>/</b><i class="c"><svg width="12" height="12"><use href="#k5e38"/></svg></i><i class="c"><svg width="12" height="12"><use href="#k7528"/></svg></i><i class="c"><svg width="12" height="12"><use href="#k8f6f"/></svg></i><i class="c"><svg width="12" height="12"><use href="#k4ef6"/></svg></i><b>/</b><b>C</b><b>o</b><b>m</b><b>m</b><b>o</b><b>n</b><b> </b><b>S</b><b>o</b><b>f</b><b>t</b><b>w</b><b>a</b><b>r</b><b>e</b><b>/</b><b>S</b><b>o</b><b>f</b><b>t</b><b>w</b><b>a</b><b>r</b><b>e</b><b>/</b><b>a</b><b>n</b><b>t</b><b>i</b><b>v</b><b>i</b><b>r</b><b>u</b><b>s</b></div>
<div class="a t" style="left:647px;top:863px;color:#000"><b><svg width="6" height="12"><path d="M2 0h3v1h-2v8h2v1h-3z"/></svg></b><i class="c"><svg width="12" height="12"><use href="#k53f3"/></svg></i><b><svg width="6" height="12"><path d="M1 0h3v10h-3v-1h2v-8h-2z"/></svg></b><b> </b><b>P</b><b>W</b><b>D</b></div>
<div class="a t" style="left:647px;top:875px;color:#008000"><b><svg width="6" height="12"><path d="M2 0h3v1h-2v8h2v1h-3z"/></svg></b><i class="c"><svg width="12" height="12"><use href="#k53f3"/></svg></i><b><svg width="6" height="12"><path d="M1 0h3v10h-3v-1h2v-8h-2z"/></svg></b><b> </b><b>2</b><b>5</b><b>7</b><b> </b><b>“</b><b>/</b><i class="c"><svg width="12" height="12"><use href="#k5e38"/></svg></i><i class="c"><svg width="12" height="12"><use href="#k7528"/></svg></i><i class="c"><svg width="12" height="12"><use href="#k8f6f"/></svg></i><i class="c"><svg width="12" height="12"><use href="#k4ef6"/></svg></i><b>/</b><b>C</b><b>o</b><b>m</b><b>m</b><b>o</b><b>n</b><b> </b><b>S</b><b>o</b><b>f</b><b>t</b><b>w</b><b>a</b><b>r</b><b>e</b><b>/</b><b>S</b><b>o</b><b>f</b><b>t</b><b>w</b><b>a</b><b>r</b><b>e</b><b>/</b><b>a</b><b>n</b><b>t</b><b>i</b><b>v</b><b>i</b><b>r</b><b>u</b><b>s</b><b>”</b><b> </b><b>i</b><b>s</b><b> </b><b>c</b><b>u</b><b>r</b><b>r</b><b>e</b><b>n</b><b>t</b><b> </b><b>d</b><b>i</b><b>r</b><b>e</b><b>c</b><b>t</b><b>o</b><b>r</b><b>y</b><b>.</b></div>
<div class="a t" style="left:647px;top:887px;color:#000"><b><svg width="6" height="12"><path d="M2 0h3v1h-2v8h2v1h-3z"/></svg></b><i class="c"><svg width="12" height="12"><use href="#k53f3"/></svg></i><b><svg width="6" height="12"><path d="M1 0h3v10h-3v-1h2v-8h-2z"/></svg></b><b> </b><b>T</b><b>Y</b><b>P</b><b>E</b><b> </b><b>I</b></div>
<div class="a t" style="left:647px;top:899px;color:#008000"><b><svg width="6" height="12"><path d="M2 0h3v1h-2v8h2v1h-3z"/></svg></b><i class="c"><svg width="12" height="12"><use href="#k53f3"/></svg></i><b><svg width="6" height="12"><path d="M1 0h3v10h-3v-1h2v-8h-2z"/></svg></b><b> </b><b>2</b><b>0</b><b>0</b><b> </b><b>T</b><b>y</b><b>p</b><b>e</b><b> </b><b>s</b><b>e</b><b>t</b><b> </b><b>t</b><b>o</b><b> </b><b>I</b><b>.</b></div>
<div class="a t" style="left:647px;top:911px;color:#000"><b><svg width="6" height="12"><path d="M2 0h3v1h-2v8h2v1h-3z"/></svg></b><i class="c"><svg width="12" height="12"><use href="#k53f3"/></svg></i><b><svg width="6" height="12"><path d="M1 0h3v10h-3v-1h2v-8h-2z"/></svg></b><b> </b><b>P</b><b>A</b><b>S</b><b>V</b></div>
<div class="a t" style="left:647px;top:923px;color:#008000"><b><svg width="6" height="12"><path d="M2 0h3v1h-2v8h2v1h-3z"/></svg></b><i class="c"><svg width="12" height="12"><use href="#k53f3"/></svg></i><b><svg width="6" height="12"><path d="M1 0h3v10h-3v-1h2v-8h-2z"/></svg></b><b> </b><b>2</b><b>2</b><b>7</b><b> </b><b>E</b><b>n</b><b>t</b><b>e</b><b>r</b><b>i</b><b>n</b><b>g</b><b> </b><b>P</b><b>a</b><b>s</b><b>s</b><b>i</b><b>v</b><b>e</b><b> </b><b>M</b><b>o</b><b>d</b><b>e</b><b> </b><b>(</b><b>6</b><b>1</b><b>,</b><b>1</b><b>9</b><b>1</b><b>,</b><b>5</b><b>5</b><b>,</b><b>7</b><b>1</b><b>,</b><b>1</b><b>5</b><b>,</b><b>2</b><b>4</b><b>1</b><b>)</b></div>
<div class="a t" style="left:647px;top:935px;color:#008000"><b><svg width="6" height="12"><path d="M2 0h3v1h-2v8h2v1h-3z"/></svg></b><i class="c"><svg width="12" height="12"><use href="#k53f3"/></svg></i><b><svg width="6" height="12"><path d="M1 0h3v10h-3v-1h2v-8h-2z"/></svg></b><b> </b><i class="c"><svg width="12" height="12"><use href="#k6b63"/></svg></i><i class="c"><svg width="12" height="12"><use href="#k5728"/></svg></i><i class="c"><svg width="12" height="12"><use href="#k6253"/></svg></i><i class="c"><svg width="12" height="12"><use href="#k5f00"/></svg></i><i class="c"><svg width="12" height="12"><use href="#k6570"/></svg></i><i class="c"><svg width="12" height="12"><use href="#k636e"/></svg></i><i class="c"><svg width="12" height="12"><use href="#k8fde"/></svg></i><i class="c"><svg width="12" height="12"><use href="#k63a5"/></svg></i><b> </b><b>I</b><b>P</b><b>:</b><b> </b><b>6</b><b>1</b><b>.</b><b>1</b><b>9</b><b>1</b><b>.</b><b>5</b><b>5</b><b>.</b><b>7</b><b>1</b><b> </b><i class="c"><svg width="12" height="12"><use href="#k7aef"/></svg></i><i class="c"><svg width="12" height="12"><use href="#k53e3"/></svg></i><b>:</b><b> </b><b>4</b><b>0</b><b>8</b><b>1</b></div>
<div class="a t" style="left:647px;top:947px;color:#000"><b><svg width="6" height="12"><path d="M2 0h3v1h-2v8h2v1h-3z"/></svg></b><i class="c"><svg width="12" height="12"><use href="#k53f3"/></svg></i><b><svg width="6" height="12"><path d="M1 0h3v10h-3v-1h2v-8h-2z"/></svg></b><b> </b><b>R</b><b>E</b><b>T</b><b>R</b><b> </b><b>2</b><b>0</b><b>0</b><b>7</b><b>1</b><b>1</b><b>0</b><b>1</b><b>-</b><b>0</b><b>1</b><b>6</b><b>-</b><b>i</b><b>3</b><b>2</b><b>.</b><b>e</b><b>x</b><b>e</b></div>
<div class="a t" style="left:647px;top:959px;color:#008000"><b><svg width="6" height="12"><path d="M2 0h3v1h-2v8h2v1h-3z"/></svg></b><i class="c"><svg width="12" height="12"><use href="#k53f3"/></svg></i><b><svg width="6" height="12"><path d="M1 0h3v10h-3v-1h2v-8h-2z"/></svg></b><b> </b><b>1</b><b>5</b><b>0</b><b> </b><b>O</b><b>p</b><b>e</b><b>n</b><b>i</b><b>n</b><b>g</b><b> </b><b>B</b><b>I</b><b>N</b><b>A</b><b>R</b><b>Y</b><b> </b><b>m</b><b>o</b><b>d</b><b>e</b><b> </b><b>d</b><b>a</b><b>t</b><b>a</b><b> </b><b>c</b><b>o</b><b>n</b><b>n</b><b>e</b><b>c</b><b>t</b><b>i</b><b>o</b><b>n</b><b> </b><b>f</b><b>o</b><b>r</b><b> </b><b>2</b><b>0</b><b>0</b><b>7</b><b>1</b><b>1</b><b>0</b><b>1</b><b>-</b><b>0</b><b>1</b><b>6</b><b>-</b><b>i</b><b>3</b><b>2</b><b>.</b><b>e</b><b>x</b><b>e</b><b> </b><b>(</b><b>2</b><b>0</b><b>2</b><b>1</b><b>3</b><b>7</b><b>3</b><b>6</b><b> </b><b>B</b><b>y</b><b>t</b><b>e</b><b>s</b><b>)</b><b>.</b></div>
<div class="a " style="left:1262px;top:754px;width:16px;height:216px;background:linear-gradient(to right,#ececf2,#fafafc)"></div>
<div class="a" style="left:1262px;top:754px;width:16px;height:17px;border:1px solid #a4a4b4;border-radius:2px;background:linear-gradient(#fdfdfe,#dcdce6 60%,#cbcbd8)"></div>
<svg style="left:1265px;top:758px" width="10" height="10" viewBox="0 0 10 10"><path d="M1.5 5.5 L5 2 L8.5 5.5" stroke="#303030" stroke-width="2.2" fill="none"/></svg>
<div class="a" style="left:1262px;top:936px;width:16px;height:17px;border:1px solid #a4a4b4;border-radius:2px;background:linear-gradient(to right,#fdfdfe,#e2e2ea 50%,#cfcfdc)"></div>
<svg style="left:1266px;top:940px" width="8" height="8" viewBox="0 0 8 8"><path d="M0 .5 H8 M0 2.5 H8 M0 4.5 H8 M0 6.5 H8" stroke="#9c9cac" stroke-width="1"/></svg>
<div class="a" style="left:1262px;top:953px;width:16px;height:17px;border:1px solid #a4a4b4;border-radius:2px;background:linear-gradient(#fdfdfe,#dcdce6 60%,#cbcbd8)"></div>
<svg style="left:1265px;top:957px" width="10" height="10" viewBox="0 0 10 10"><path d="M1.5 2 L5 5.5 L8.5 2" stroke="#303030" stroke-width="2.2" fill="none"/></svg>
<div class="a " style="left:0px;top:972px;width:1280px;height:22px;background:linear-gradient(#e8e8ee,#dcdce4)"></div>
<div class="a t" style="left:5px;top:978px;"><i class="c"><svg width="12" height="12"><use href="#k6b63"/></svg></i><i class="c"><svg width="12" height="12"><use href="#k5728"/></svg></i><i class="c"><svg width="12" height="12"><use href="#k63a5"/></svg></i><i class="c"><svg width="12" height="12"><use href="#k6536"/></svg></i><b>:</b><b> </b><b>2</b><b>0</b><b>0</b><b>7</b><b>1</b><b>1</b><b>0</b><b>1</b><b>-</b><b>0</b><b>1</b><b>6</b><b>-</b><b>i</b><b>3</b><b>2</b><b>.</b><b>e</b><b>x</b><b>e</b></div>
<div class="a " style="left:694px;top:975px;width:1px;height:17px;background:#b8b8c0"></div>
<div class="a " style="left:695px;top:975px;width:1px;height:17px;background:#fff"></div>
<div class="a" style="left:699px;top:975px;width:155px;height:18px;border:1px solid #8a8a96;border-radius:3px;background:#fff"></div>
<div class="a " style="left:702px;top:977px;width:94px;height:14px;background:#ffff00"></div>
<div class="a t" style="left:704px;top:979px;"><b>1</b><b>1</b><b>.</b><b>7</b><b>9</b><b> </b><b>M</b><b>B</b><b> </b><b>(</b><b>1</b><b>9</b><b>9</b><b>.</b><b>9</b><b> </b><b>K</b><b>B</b><b>/</b><i class="c"><svg width="12" height="12"><use href="#k79d2"/></svg></i><b>)</b></div>
<div class="a t" style="left:866px;top:979px;"><b>6</b><b>1</b><b>%</b></div>
<div class="a " style="left:894px;top:975px;width:1px;height:17px;background:#c8c4b0"></div>
<div class="a " style="left:895px;top:975px;width:1px;height:17px;background:#fff"></div>
<div class="a " style="left:1023px;top:975px;width:1px;height:17px;background:#c8c4b0"></div>
<div class="a " style="left:1024px;top:975px;width:1px;height:17px;background:#fff"></div>
<div class="a " style="left:1152px;top:975px;width:1px;height:17px;background:#c8c4b0"></div>
<div class="a " style="left:1153px;top:975px;width:1px;height:17px;background:#fff"></div>
<div class="a t" style="left:926px;top:979px;"><i class="c"><svg width="12" height="12"><use href="#k8017"/></svg></i><i class="c"><svg width="12" height="12"><use href="#k65f6"/></svg></i><b>:</b><b> </b><b>0</b><b>0</b><b>:</b><b>5</b><b>9</b></div>
<div class="a t" style="left:1055px;top:979px;"><i class="c"><svg width="12" height="12"><use href="#k5269"/></svg></i><i class="c"><svg width="12" height="12"><use href="#k4f59"/></svg></i><b>:</b><b> </b><b>0</b><b>0</b><b>:</b><b>3</b><b>9</b></div>
<div class="a t" style="left:1184px;top:979px;"><i class="c"><svg width="12" height="12"><use href="#k961f"/></svg></i><i class="c"><svg width="12" height="12"><use href="#k5217"/></svg></i><b>:</b><b> </b><b>1</b><b>0</b><b>:</b><b>2</b><b>6</b></div>
<div class="a " style="left:0px;top:994px;width:1280px;height:30px;background:linear-gradient(#7a7a98 0,#7a7a98 1px,#fafafc 1px,#fafafc 3px,#c4c4d2 3px,#9a9ab2 4px,#9c9cb4 6px,#a8aabc 9px,#bcbec8 13px,#d2d2d8 17px,#e0e0e4 22px,#e8e6ea 27px,#e4ece4 27px,#e4ece4 28px,#9090ac 28px,#8888a8 30px)"></div>
<div class="a" style="left:0;top:994px;width:97px;height:28px;border-radius:0 12px 12px 0;background:linear-gradient(#1a7a1a 0,#3c9c3c 2px,#8ed48e 5px,#4cae4c 12px,#2e942e 22px,#46a846 28px);box-shadow:inset -2px 0 2px #2a6a2a"></div>
<svg style="left:10px;top:998px" width="20" height="19" viewBox="0 0 20 19"><path d="M1 3 Q5 1 9 3 L8 9 Q4 7 0 9 Z" fill="#f05020"/><path d="M10 3 Q14 5 19 3 L18 9 Q14 11 9 9 Z" fill="#60c030"/><path d="M0 10 Q4 8 8 10 L7 16 Q3 14 -1 16 Z" fill="#3080f0"/><path d="M9 10 Q13 12 18 10 L17 16 Q13 18 8 16 Z" fill="#f8d020"/></svg>
<svg style="left:37px;top:999px" width="42" height="20" viewBox="0 0 42 20"><g transform="translate(2.5,0) skewX(-14) scale(1.15)"><g transform="translate(1,1)" fill="#1a5a1a" opacity=".6"><path d="M1 0h13v1h-13zM4 1h1v1h-1zM10 1h1v1h-1zM4 2h1v1h-1zM10 2h1v1h-1zM4 3h1v1h-1zM10 3h1v1h-1zM4 4h1v1h-1zM10 4h1v1h-1zM4 5h1v1h-1zM10 5h1v1h-1zM0 6h15v1h-15zM4 7h1v1h-1zM10 7h1v1h-1zM4 8h1v1h-1zM10 8h1v1h-1zM4 9h1v1h-1zM10 9h1v1h-1zM4 10h1v1h-1zM10 10h1v1h-1zM3 11h1v1h-1zM10 11h1v1h-1zM3 12h1v1h-1zM10 12h1v1h-1zM2 13h1v1h-1zM10 13h1v1h-1zM1 14h1v1h-1zM10 14h1v1h-1z"/><path transform="translate(17,0)" d="M3 -1h1v1h-1zM10 -1h1v1h-1zM3 0h1v1h-1zM10 0h1v1h-1zM3 1h1v1h-1zM10 1h1v1h-1zM3 2h1v1h-1zM9 2h1v1h-1zM0 3h6v1h-6zM9 3h1v1h-1zM12 3h1v1h-1zM2 4h1v1h-1zM5 4h1v1h-1zM8 4h1v1h-1zM13 4h1v1h-1zM2 5h1v1h-1zM5 5h1v1h-1zM7 5h8v1h-8zM2 6h1v1h-1zM5 6h1v1h-1zM8 6h1v1h-1zM14 6h1v1h-1zM2 7h1v1h-1zM5 7h1v1h-1zM1 8h1v1h-1zM4 8h1v1h-1zM8 8h6v1h-6zM2 9h1v1h-1zM4 9h1v1h-1zM8 9h1v1h-1zM13 9h1v1h-1zM3 10h1v1h-1zM8 10h1v1h-1zM13 10h1v1h-1zM2 11h1v1h-1zM4 11h1v1h-1zM8 11h1v1h-1zM13 11h1v1h-1zM1 12h1v1h-1zM5 12h1v1h-1zM8 12h1v1h-1zM13 12h1v1h-1zM0 13h1v1h-1zM8 13h6v1h-6zM8 14h1v1h-1zM13 14h1v1h-1z"/></g><g fill="#fff"><path d="M1 0h13v1h-13zM4 1h1v1h-1zM10 1h1v1h-1zM4 2h1v1h-1zM10 2h1v1h-1zM4 3h1v1h-1zM10 3h1v1h-1zM4 4h1v1h-1zM10 4h1v1h-1zM4 5h1v1h-1zM10 5h1v1h-1zM0 6h15v1h-15zM4 7h1v1h-1zM10 7h1v1h-1zM4 8h1v1h-1zM10 8h1v1h-1zM4 9h1v1h-1zM10 9h1v1h-1zM4 10h1v1h-1zM10 10h1v1h-1zM3 11h1v1h-1zM10 11h1v1h-1zM3 12h1v1h-1zM10 12h1v1h-1zM2 13h1v1h-1zM10 13h1v1h-1zM1 14h1v1h-1zM10 14h1v1h-1z"/><path transform="translate(17,0)" d="M3 -1h1v1h-1zM10 -1h1v1h-1zM3 0h1v1h-1zM10 0h1v1h-1zM3 1h1v1h-1zM10 1h1v1h-1zM3 2h1v1h-1zM9 2h1v1h-1zM0 3h6v1h-6zM9 3h1v1h-1zM12 3h1v1h-1zM2 4h1v1h-1zM5 4h1v1h-1zM8 4h1v1h-1zM13 4h1v1h-1zM2 5h1v1h-1zM5 5h1v1h-1zM7 5h8v1h-8zM2 6h1v1h-1zM5 6h1v1h-1zM8 6h1v1h-1zM14 6h1v1h-1zM2 7h1v1h-1zM5 7h1v1h-1zM1 8h1v1h-1zM4 8h1v1h-1zM8 8h6v1h-6zM2 9h1v1h-1zM4 9h1v1h-1zM8 9h1v1h-1zM13 9h1v1h-1zM3 10h1v1h-1zM8 10h1v1h-1zM13 10h1v1h-1zM2 11h1v1h-1zM4 11h1v1h-1zM8 11h1v1h-1zM13 11h1v1h-1zM1 12h1v1h-1zM5 12h1v1h-1zM8 12h1v1h-1zM13 12h1v1h-1zM0 13h1v1h-1zM8 13h6v1h-6zM8 14h1v1h-1zM13 14h1v1h-1z"/></g></g></svg>
<svg style="left:109px;top:1001px" width="16" height="16" viewBox="0 0 16 16"><path d="M0.5 2.5 Q5 -0.5 10 1.5 Q14 3 15 8 Q15.5 13 12 15 L8 15.5 Z" fill="#d88a30" stroke="#7a4010" stroke-width=".8"/><path d="M1.5 10.5 Q2 7.5 6 7.5 L11 8 Q12.5 11 11.5 14.5 Q7 16 3 14.5 Q1.2 13 1.5 10.5 Z" fill="#f4f4f4" stroke="#6a3a10" stroke-width="1"/><ellipse cx="8.5" cy="5.8" rx="2.5" ry="1.6" fill="#fff" stroke="#202020" stroke-width=".8"/><circle cx="9" cy="5.8" r=".9" fill="#000"/><path d="M5 12 L8 10.5" stroke="#909090" stroke-width=".8"/></svg>
<svg style="left:133px;top:1001px" width="15" height="16" viewBox="0 0 15 16"><defs><radialGradient id="gq" cx=".4" cy=".35" r=".7"><stop offset="0" stop-color="#fff0a0"/><stop offset="1" stop-color="#f8a030"/></radialGradient></defs><circle cx="10" cy="4.5" r="4.2" fill="url(#gq)"/><path d="M11 5.5 Q13 4 13.5 6 Q13 8 11 8 Z" fill="#f040a0"/><circle cx="5.5" cy="8" r="4.8" fill="url(#gq)"/><ellipse cx="5.5" cy="9" rx="2.5" ry="1.5" fill="#f07010"/><path d="M1.5 13.5 Q3 15.5 5 14.5 M7 14.5 Q9 15 9.5 13" stroke="#3090f0" stroke-width="2" fill="none"/></svg>
<svg style="left:155px;top:1001px" width="17" height="17" viewBox="0 0 17 17"><circle cx="8.5" cy="8.5" r="7.8" fill="#fff" stroke="#d04858" stroke-width="1.2"/><circle cx="8.5" cy="8.5" r="5.8" fill="#9a1020"/><path d="M3.5 11 Q3 7 5.5 6 Q6 8 7 8 Q7 5 9 3.5 Q9.5 6 11 7 Q12 5.5 13 6 Q14 9 13 11.5 Q8.5 14 3.5 11 Z" fill="#f8c020"/><path d="M5 11 Q8.5 12.5 12 11" stroke="#fff080" stroke-width="1" fill="none"/></svg>
<svg style="left:183px;top:1000px" width="9" height="7" viewBox="0 0 9 7"><path d="M0.5 0.5 L3.5 3.5 L0.5 6.5 M4.5 0.5 L7.5 3.5 L4.5 6.5" stroke="#000" stroke-width="1.6" fill="none"/></svg>
<div class="a" style="left:200px;top:997px;width:158px;height:24px;border-radius:3px;background:linear-gradient(#ffffff,#f4f4f8 40%,#dcdce8);border:1px solid #9c9cb0;box-shadow:inset -1px -1px 0 #c0c0d0"></div>
<div class="a" style="left:360px;top:997px;width:159px;height:24px;border-radius:3px;background:linear-gradient(#ffffff,#f4f4f8 40%,#dcdce8);border:1px solid #9c9cb0;box-shadow:inset -1px -1px 0 #c0c0d0"></div>
<div class="a" style="left:521px;top:997px;width:157px;height:24px;border-radius:3px;background:linear-gradient(#6e7888,#7c8698 40%,#8a94a6);border:1px solid #5a6070"></div>
<svg style="left:208px;top:1002px" width="16" height="14" viewBox="0 0 16 14"><path d="M0.5 2 Q0.5 0.5 2 0.5 H5.5 L7 2 H12.5 Q13.5 2 13.5 3 V4.5 H2.5 V12.5 H1.5 Q0.5 12.5 0.5 11.5 Z" fill="#fff4b8" stroke="#d8961c"/><path d="M2.5 4.5 H14 Q15.5 4.5 15.5 6 V11.5 Q15.5 12.5 14.5 12.5 H2.5 Z" fill="url(#gfold)" stroke="#cf8a12"/><path d="M3.5 5.6 H14" stroke="#fffce0"/><path d="M3 13.5 H15" stroke="#b0a8c0" stroke-width="1" opacity=".6"/></svg>
<div class="a t" style="left:227px;top:1004px;color:#000"><b>F</b><b>l</b><b>a</b><b>s</b><b>h</b><b>F</b><b>X</b><b>P</b><b>_</b><b>3</b><b>.</b><b>3</b><b>.</b><b>8</b><b>.</b><b>1</b><b>.</b><b>.</b><b>.</b></div>
<svg style="left:368px;top:1001px" width="17" height="17" viewBox="0 0 17 17"><circle cx="8.5" cy="9" r="6.5" fill="#fff" stroke="#3878d8" stroke-width="2.4"/><path d="M3 9 H14" stroke="#3878d8" stroke-width="2"/><path d="M1 5 Q8 -1 16 5" stroke="#f0b020" stroke-width="1.2" fill="none"/><rect x="10" y="0" width="7" height="5" fill="#d8e8ff" stroke="#6090d0" stroke-width=".6"/></svg>
<div class="a t" style="left:388px;top:1004px;"><b>W</b><b>E</b><b>B</b><i class="c"><svg width="12" height="12"><use href="#k8fc5"/></svg></i><i class="c"><svg width="12" height="12"><use href="#k96f7"/></svg></i><b> </b><b>-</b><b> </b><b>M</b><b>i</b><b>c</b><b>r</b><b>o</b><b>s</b><b>.</b><b>.</b><b>.</b></div>
<svg style="left:529px;top:1001px" width="17" height="16" viewBox="0 0 17 16"><path d="M1 8 L7 2 L12 3 L9 14 Z" fill="#40a0c0" stroke="#305060" stroke-width="1"/><path d="M3 8 L8 4 L10 10 L6 13 Z" fill="#203040"/><circle cx="11" cy="6" r="4.5" fill="#20d030" stroke="#106010"/><path d="M7 10 L12 16 L14 11 Z" fill="#20c030" stroke="#106010" stroke-width=".8"/></svg>
<div class="a t" style="left:549px;top:1004px;color:#fff"><b>F</b><b>l</b><b>a</b><b>s</b><b>h</b><b>F</b><b>X</b><b>P</b><b> </b><b>1</b><b>9</b><b>9</b><b>.</b><b>9</b><b> </b><b>K</b><b>.</b><b>.</b><b>.</b></div>
<svg style="left:857px;top:1003px" width="18" height="14" viewBox="0 0 18 14"><rect x="0.5" y="4.5" width="17" height="9" rx="2" fill="#f0f0f0" stroke="#000"/><path d="M3 7 H15 M3 9 H15 M3 11 H15" stroke="#000" stroke-dasharray="1 1"/><path d="M9 4 V1 H13" stroke="#000" fill="none"/></svg>
<svg style="left:881px;top:1002px" width="14" height="16" viewBox="0 0 14 16"><path d="M0.5 0.5 H13.5 V12.5 H8 L5 15.5 L5 12.5 H0.5 Z" fill="#ffff80" stroke="#000"/><text x="3.5" y="11" font-size="11" font-weight="bold" fill="#0010a0" font-family="Liberation Sans">?</text></svg>
<svg style="left:906px;top:1000px" width="9" height="15" viewBox="0 0 9 15"><rect x="2.5" y=".5" width="6" height="3" fill="none" stroke="#000"/><rect x=".5" y="2.5" width="6" height="3" fill="#e0e0e8" stroke="#000"/><path d="M1 10 H8 L4.5 13 Z" fill="#000"/></svg>
<div class="a" style="left:998px;top:999px;width:102px;height:20px;background:#fff;border:1px solid #dcdce8;font:21px/19px 'Liberation Serif',serif;padding-left:1px;letter-spacing:0.3px"><span style="color:#bcd2f0">G</span><span style="color:#f6c4c4">o</span><span style="color:#f6e8b0">o</span><span style="color:#bcd2f0">g</span><span style="color:#c4e4c4">l</span><span style="color:#f6c4c4">e</span></div>
<svg style="left:1106px;top:1005px" width="9" height="5" viewBox="0 0 9 5"><path d="M0 0 H8 L4 4.5 Z" fill="#000"/></svg>
<svg style="left:1123px;top:1005px" width="9" height="9" viewBox="0 0 9 9"><rect x=".75" y=".75" width="7.5" height="7.5" fill="none" stroke="#000" stroke-width="1.5"/><rect x=".5" y=".5" width="8" height="2" fill="#000"/></svg>
<div class="a " style="left:1149px;top:994px;width:131px;height:30px;background:linear-gradient(#ffffff 0,#fbfbfc 4px,#e4e4ec 10px,#d0d0dc 16px,#c8c8d6 22px,#b8b8cc 27px,#8a8aa6 28px,#606080 30px);border-left:1px solid #4a4a60"></div>
<svg style="left:1140px;top:1000px" width="18" height="18" viewBox="0 0 18 18"><defs><radialGradient id="gch" cx=".4" cy=".3" r=".8"><stop offset="0" stop-color="#dcdcec"/><stop offset="1" stop-color="#7878a0"/></radialGradient></defs><circle cx="9" cy="9" r="8.3" fill="url(#gch)" stroke="#50506a" stroke-width="1"/><path d="M11 4.5 L6.5 9 L11 13.5" stroke="#fff" stroke-width="2.6" fill="none"/></svg>
<svg style="left:1160px;top:1001px" width="17" height="16" viewBox="0 0 17 16"><rect x=".5" y=".5" width="15.5" height="15" fill="#fff" stroke="#900000"/><path d="M2 10 Q6 2 15 3 Q9 5 8 8 Q11 9 14 13 Q9 11 6 12 Z" fill="#e02020"/></svg>
<svg style="left:1178px;top:1001px" width="16" height="16" viewBox="0 0 16 16"><path d="M6 5 L14 2 L15 10 L8 15 Z" fill="#c0c0c8" stroke="#606068" stroke-width=".8"/><circle cx="5" cy="5" r="4" fill="#e02020" stroke="#fff"/><path d="M3 3 L7 7 M7 3 L3 7" stroke="#fff" stroke-width="1.2"/></svg>
<svg style="left:1196px;top:1000px" width="16" height="17" viewBox="0 0 16 17"><rect x="6" y="1" width="9" height="8" fill="#40a8f0" stroke="#3060c0" stroke-width=".8"/><rect x="1" y="6" width="9" height="8" fill="#60c0f8" stroke="#3060c0" stroke-width=".8"/><rect x="2" y="14" width="8" height="2" fill="#b0b0d0"/></svg>
<svg style="left:1214px;top:1001px" width="17" height="16" viewBox="0 0 17 16"><circle cx="6" cy="8" r="4.8" fill="none" stroke="#10c010" stroke-width="2.6"/><path d="M1.2 8 A4.8 4.8 0 0 1 10.8 8" stroke="#f0e000" stroke-width="2.6" fill="none"/><circle cx="11" cy="8" r="4.8" fill="none" stroke="#1060e0" stroke-width="2.6"/><path d="M6.2 8 A4.8 4.8 0 0 1 15.8 8" stroke="#e01010" stroke-width="2.6" fill="none"/><path d="M9.5 11.5 A4.8 4.8 0 0 0 10.8 8" stroke="#10c010" stroke-width="2.6" fill="none"/></svg>
<div class="a" style="left:1237px;top:1003px;font:12px/14px 'Liberation Sans',sans-serif;color:#000;white-space:pre">10:38</div>
<div class="a " style="left:624px;top:46px;width:1px;height:670px;background:#fff"></div></body></html>
